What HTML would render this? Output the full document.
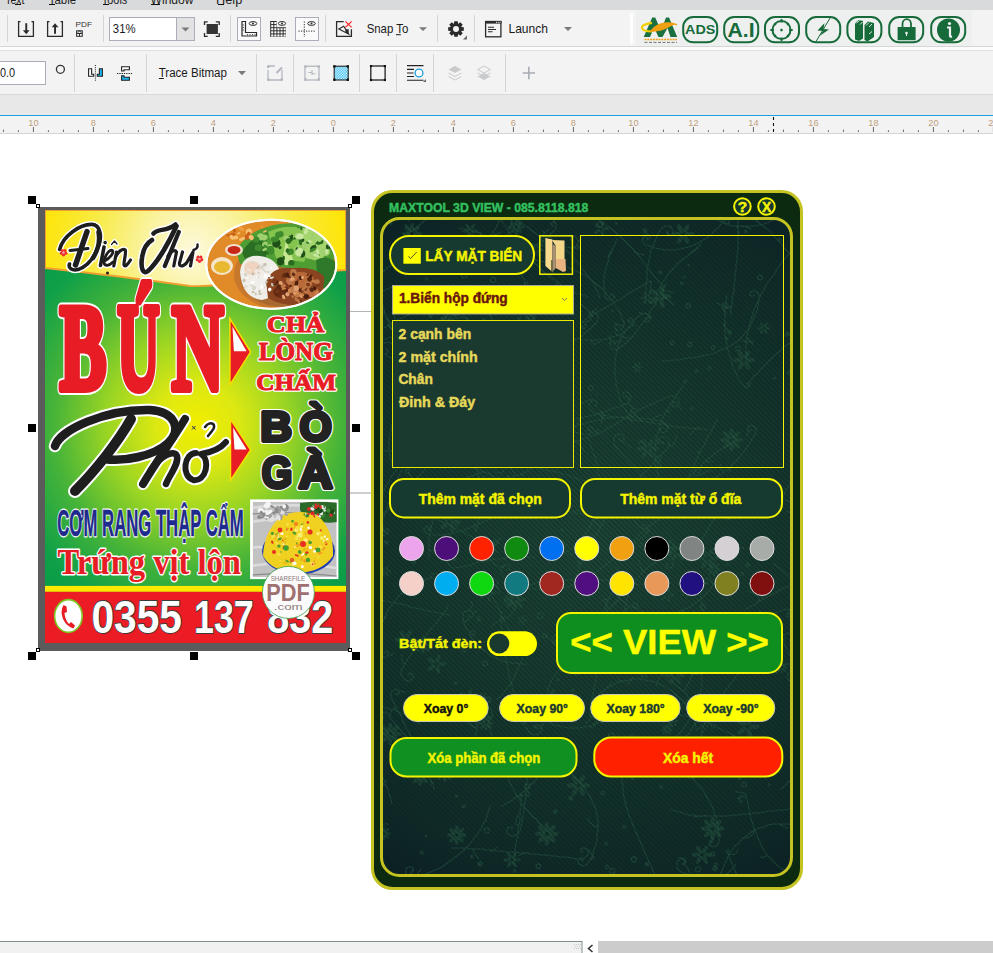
<!DOCTYPE html><html><head><meta charset="utf-8"><style>
*{margin:0;padding:0;box-sizing:border-box}
html,body{width:993px;height:953px;overflow:hidden;background:#fff;font-family:"Liberation Sans",sans-serif}
.a{position:absolute}
svg{position:absolute;left:0;top:0;overflow:visible}
</style></head><body>
<svg width="993" height="953"><rect x="0" y="0" width="993" height="10" fill="#d9dadb" />
<rect x="0" y="10" width="993" height="36" fill="#f3f3f3" />
<rect x="636" y="10" width="336" height="36" fill="#eef0ef" />
<rect x="0" y="46" width="993" height="1" fill="#d6d6d6" />
<rect x="0" y="47" width="993" height="3" fill="#fcfcfc" />
<rect x="0" y="50" width="993" height="1" fill="#dedede" />
<rect x="0" y="51" width="993" height="43" fill="#f3f3f3" />
<rect x="0" y="94" width="993" height="1" fill="#d9d9d9" />
<rect x="0" y="95" width="993" height="20" fill="#e8e8e8" />
<rect x="0" y="115" width="993" height="1" fill="#1ba1e2" />
<rect x="0" y="116" width="993" height="17" fill="#f3f3f3" />
<rect x="0" y="133" width="993" height="1" fill="#d4d4d4" />
<rect x="7" y="15" width="1" height="27" fill="#d5d5d5" />
<rect x="103" y="15" width="1" height="27" fill="#d5d5d5" />
<rect x="230" y="15" width="1" height="27" fill="#d5d5d5" />
<rect x="325" y="15" width="1" height="27" fill="#d5d5d5" />
<rect x="437" y="15" width="1" height="27" fill="#d5d5d5" />
<rect x="474" y="15" width="1" height="27" fill="#d5d5d5" />
<rect x="74" y="54" width="1" height="38" fill="#d5d5d5" />
<rect x="146" y="54" width="1" height="38" fill="#d5d5d5" />
<rect x="256" y="54" width="1" height="38" fill="#d5d5d5" />
<rect x="293" y="54" width="1" height="38" fill="#d5d5d5" />
<rect x="359" y="54" width="1" height="38" fill="#d5d5d5" />
<rect x="396" y="54" width="1" height="38" fill="#d5d5d5" />
<rect x="433" y="54" width="1" height="38" fill="#d5d5d5" />
<rect x="505" y="54" width="1" height="38" fill="#d5d5d5" />
<rect x="630" y="13" width="3" height="31" fill="#fdfdfd" />
<rect x="15" y="4" width="6" height="1" fill="#111" />
<rect x="49" y="4" width="6" height="1" fill="#111" />
<rect x="103" y="4" width="6" height="1" fill="#111" />
<rect x="151" y="4" width="9" height="1" fill="#111" />
<rect x="218" y="4" width="6" height="1" fill="#111" />
<path d="M20.5 21.6 H18.6 V36.3 H33.4 V21.6 H31.5" stroke="#2b2b2b" stroke-width="1.3" fill="none"/>
<rect x="25.3" y="23.2" width="1.9" height="8" fill="#2b2b2b"/><path d="M22.9 30.2 L29.6 30.2 L26.25 34.2Z" fill="#2b2b2b"/>
<path d="M49.5 21.6 H47.6 V36.3 H62.4 V21.6 H60.5" stroke="#2b2b2b" stroke-width="1.3" fill="none"/>
<rect x="54.1" y="26.6" width="1.9" height="7.2" fill="#2b2b2b"/><path d="M51.7 27.3 L58.4 27.3 L55.05 23.2Z" fill="#2b2b2b"/>
<rect x="76.6" y="30.8" width="5.7" height="5.5" stroke="#2b2b2b" stroke-width="1" fill="none"/><path d="M77 33.5 H82 M79.5 33.5 V36.3 M77.6 32.6 L79.5 31 L81.4 32.6" stroke="#2b2b2b" stroke-width="1" fill="none"/>
<rect x="109.5" y="17.5" width="85" height="23" fill="#fff" stroke="#a9aeb8" stroke-width="1"/>
<rect x="176.5" y="18" width="17.5" height="22" fill="#e2e2e2"/><rect x="176" y="18" width="1" height="22" fill="#a9aeb8"/>
<path d="M181.5 27.5 H189.5 L185.5 31.5Z" fill="#7a7a7a"/>
<path d="M204.5 25 V21.8 H207.7 M215.8 21.8 H219.2 V25 M219.2 33 V36.3 H215.8 M207.7 36.3 H204.5 V33" stroke="#2b2b2b" stroke-width="1.3" fill="none"/>
<rect x="206.6" y="24" width="11.3" height="10" fill="#333"/>
<rect x="237.5" y="17.5" width="23" height="23" fill="#fafafa" stroke="#a9aeb8" stroke-width="1"/>
<path d="M242 21.5 V36 H256.5 V32.5 H245.5 V21.5Z" stroke="#2b2b2b" stroke-width="1.2" fill="none"/>
<path d="M242.5 25 H244 M242.5 27.5 H244 M242.5 30 H244 M247.5 35.3 V34 M250 35.3 V34 M252.5 35.3 V34 M255 35.3 V34" stroke="#2b2b2b" stroke-width="0.8"/>
<ellipse cx="253" cy="23.5" rx="3.8" ry="1.9" stroke="#2b2b2b" stroke-width="1" fill="#fff"/><circle cx="253" cy="23.5" r="1" fill="#2b2b2b"/>
<path d="M270.2 21 H276.6 V27.2 H285.9 V36.8 H270.2Z" fill="#2b2b2b"/>
<rect x="271.20" y="22.00" width="2.1" height="2.1" fill="#fff"/>
<rect x="274.30" y="22.00" width="2.1" height="2.1" fill="#fff"/>
<rect x="271.20" y="25.10" width="2.1" height="2.1" fill="#fff"/>
<rect x="274.30" y="25.10" width="2.1" height="2.1" fill="#fff"/>
<rect x="271.20" y="28.20" width="2.1" height="2.1" fill="#fff"/>
<rect x="274.30" y="28.20" width="2.1" height="2.1" fill="#fff"/>
<rect x="277.40" y="28.20" width="2.1" height="2.1" fill="#fff"/>
<rect x="280.50" y="28.20" width="2.1" height="2.1" fill="#fff"/>
<rect x="283.60" y="28.20" width="2.1" height="2.1" fill="#fff"/>
<rect x="271.20" y="31.30" width="2.1" height="2.1" fill="#fff"/>
<rect x="274.30" y="31.30" width="2.1" height="2.1" fill="#fff"/>
<rect x="277.40" y="31.30" width="2.1" height="2.1" fill="#fff"/>
<rect x="280.50" y="31.30" width="2.1" height="2.1" fill="#fff"/>
<rect x="283.60" y="31.30" width="2.1" height="2.1" fill="#fff"/>
<rect x="271.20" y="34.40" width="2.1" height="2.1" fill="#fff"/>
<rect x="274.30" y="34.40" width="2.1" height="2.1" fill="#fff"/>
<rect x="277.40" y="34.40" width="2.1" height="2.1" fill="#fff"/>
<rect x="280.50" y="34.40" width="2.1" height="2.1" fill="#fff"/>
<rect x="283.60" y="34.40" width="2.1" height="2.1" fill="#fff"/>
<ellipse cx="282" cy="23.45" rx="3.6" ry="1.9" stroke="#2b2b2b" stroke-width="1" fill="#fff"/><circle cx="282" cy="23.45" r="1" fill="#2b2b2b"/>
<rect x="295.5" y="17.5" width="23" height="23" fill="#fafafa" stroke="#a9aeb8" stroke-width="1"/>
<path d="M304.3 21.5 V37" stroke="#2b2b2b" stroke-width="1" stroke-dasharray="1.2 1.3"/><path d="M298.5 31.1 H315.5" stroke="#2b2b2b" stroke-width="1" stroke-dasharray="1.2 1.3"/>
<ellipse cx="311.5" cy="23.5" rx="3.8" ry="1.9" stroke="#2b2b2b" stroke-width="1" fill="#fafafa"/><circle cx="311.5" cy="23.5" r="1" fill="#2b2b2b"/>
<path d="M343.7 21.6 H336.6 V36.4 H351.4 V29.3" stroke="#2b2b2b" stroke-width="1.3" fill="none"/>
<path d="M343.7 26.3 L338.8 29 L348.7 34.1 Z" stroke="#2b2b2b" stroke-width="1.1" fill="none"/><path d="M345.4 29.3 H348.7 V34.1 L345.4 32.4Z" fill="#2b2b2b"/>
<path d="M345.4 21.4 L351.6 27.4 M351.6 21.4 L345.4 27.4" stroke="#ff2020" stroke-width="1.2"/>
<rect x="396" y="34.2" width="4.8" height="1" fill="#1a1a1a" />
<path d="M419 27.3 H427 L423 31Z" fill="#7a7a7a"/>
<path d="M463.81 27.25 L463.81 30.75 L461.43 31.04 L461.28 31.39 L462.76 33.29 L460.29 35.76 L458.39 34.28 L458.04 34.43 L457.75 36.81 L454.25 36.81 L453.96 34.43 L453.61 34.28 L451.71 35.76 L449.24 33.29 L450.72 31.39 L450.57 31.04 L448.19 30.75 L448.19 27.25 L450.57 26.96 L450.72 26.61 L449.24 24.71 L451.71 22.24 L453.61 23.72 L453.96 23.57 L454.25 21.19 L457.75 21.19 L458.04 23.57 L458.39 23.72 L460.29 22.24 L462.76 24.71 L461.28 26.61 L461.43 26.96Z" fill="#2a2a2a"/><circle cx="456" cy="29" r="3" fill="#f3f3f3"/>
<path d="M467 35.5 V39.5 H463Z" fill="#666"/>
<rect x="485.6" y="21.5" width="15.3" height="15.3" stroke="#2b2b2b" stroke-width="1.3" fill="none"/><rect x="485" y="21" width="16.5" height="2.6" fill="#2b2b2b"/>
<path d="M488 27.2 H494 M488 29.5 H496 M488 31.8 H492.5" stroke="#2b2b2b" stroke-width="1.1"/>
<rect x="496" y="21.8" width="1" height="1" fill="#fff"/><rect x="497.8" y="21.8" width="1" height="1" fill="#fff"/><rect x="499.5" y="21.8" width="1" height="1" fill="#fff"/>
<path d="M564 26.9 H572 L568 31Z" fill="#7a7a7a"/>
<path d="M643.7 37 L652.2 17.5 L655.2 17.5 L661 30.5 L666 17.5 L669 17.5 L677.2 37 L670.5 37 L667.5 28 L662.5 37 L658.5 37 L654 27.5 L650 37Z" fill="#1a7040"/>
<path d="M652 22.8 Q641 24.5 642 28 Q643 31.5 652 31.5" stroke="#f4d000" stroke-width="2.2" fill="none"/>
<path d="M650 31.5 Q662 31 670 26 Q675 23 677 25 Q672 22 664 23 Q655 25 651 31" fill="#f0a010" stroke="#f0a010" stroke-width="1.2"/>
<path d="M644.5 39.5 H677" stroke="#f0a020" stroke-width="1.6" stroke-dasharray="2 0.8"/>
<path d="M644.5 42.4 H677" stroke="#555" stroke-width="0.8" stroke-dasharray="3 1.5"/>
<rect x="683.2" y="17.1" width="34" height="25.2" rx="10" stroke="#176b3a" stroke-width="2" fill="none"/>
<rect x="724.2" y="17.1" width="34" height="25.2" rx="10" stroke="#176b3a" stroke-width="2" fill="none"/>
<rect x="765" y="17.1" width="34" height="25.2" rx="10" stroke="#176b3a" stroke-width="2" fill="none"/>
<rect x="806.2" y="17.1" width="34" height="25.2" rx="10" stroke="#176b3a" stroke-width="2" fill="none"/>
<rect x="847.4" y="17.1" width="34" height="25.2" rx="10" stroke="#176b3a" stroke-width="2" fill="none"/>
<rect x="889.2" y="17.1" width="34" height="25.2" rx="10" stroke="#176b3a" stroke-width="2" fill="none"/>
<rect x="931.2" y="17.1" width="34" height="25.2" rx="10" stroke="#176b3a" stroke-width="2" fill="none"/>
<circle cx="781.5" cy="30" r="9" stroke="#176b3a" stroke-width="2" fill="none"/>
<path d="M781.5 19 V22.5 M781.5 37.5 V41 M770.3 30 H773.8 M789.2 30 H792.7" stroke="#176b3a" stroke-width="1.8"/><circle cx="781.5" cy="30.1" r="1.3" fill="#176b3a"/>
<path d="M774.3 23.3 L776 25 M788.7 23.3 L787 25 M774.3 36.7 L776 35 M788.7 36.7 L787 35" stroke="#176b3a" stroke-width="1.6"/>
<path d="M816 41.5 L830.2 17.8" stroke="#176b3a" stroke-width="1"/><path d="M824.5 23 L817.5 30.5 L823 31 L819.5 36 L829 29.5 L823.5 29 Z" fill="#176b3a"/>
<path d="M855 23.5 L858.5 20 L863 21 L863 38.5 L859 41 L855 39.5Z" fill="#176b3a"/>
<path d="M864.5 25 L868 21.5 L874 23 L874 37 L867.5 41.5 L864.5 40Z" fill="#176b3a"/>
<path d="M856.5 23 L859.5 20.5 M860 24.5 L862.5 22 M866 25.5 L869 22.5 M869 27 L872 24 M869 34 L872 31.5" stroke="#eef0ef" stroke-width="0.9"/>
<path d="M902.5 27.5 V24 A4 4.5 0 0 1 911 24 V27.5" stroke="#176b3a" stroke-width="1.8" fill="none"/><rect x="897.6" y="27" width="18" height="13.2" fill="#176b3a"/>
<circle cx="906.5" cy="33" r="1.3" fill="#eef0ef"/><rect x="906" y="33" width="1" height="3" fill="#eef0ef"/>
<circle cx="948.5" cy="30" r="11.5" fill="#176b3a"/><circle cx="949.5" cy="23.5" r="1.6" fill="#eef0ef"/><path d="M947 27.5 H950 V36 Q950 37 952 36.5" stroke="#eef0ef" stroke-width="2.2" fill="none"/>
<rect x="-1" y="61.5" width="46.5" height="23" fill="#fff" stroke="#a9aeb8" stroke-width="1"/>
<circle cx="60.4" cy="69.3" r="4" stroke="#333" stroke-width="1.3" fill="none"/>
<path d="M88.6 68.7 H91.6 V74.2 H93.7 V76.3 H88.6Z" stroke="#222" stroke-width="1.1" fill="#fff"/>
<path d="M102.4 68.7 H99.4 V74.2 H97.3 V76.3 H102.4Z" stroke="#222" stroke-width="1.1" fill="#19b6f0"/>
<path d="M95.4 65 V81" stroke="#222" stroke-width="1" stroke-dasharray="1 1.1"/>
<path d="M121.6 66.7 H129.4 V69.7 H124 V71 H121.6Z" stroke="#222" stroke-width="1.1" fill="#fff"/>
<path d="M121.6 80.3 H129.4 V77.3 H124 V75.7 H121.6Z" stroke="#222" stroke-width="1.1" fill="#19b6f0"/>
<path d="M117 73.5 H133" stroke="#222" stroke-width="1" stroke-dasharray="1.3 1"/>
<rect x="158.9" y="78" width="5" height="1" fill="#1a1a1a" />
<path d="M238 71 H246 L242 75.2Z" fill="#7a7a7a"/>
<path d="M268 70 V80 H282 V70 M268 66 H275" stroke="#b4b8c0" stroke-width="1.3" fill="none"/><rect x="267" y="65.4" width="2.5" height="2.5" fill="#b4b8c0"/><rect x="267" y="78.2" width="2.5" height="2.5" fill="#b4b8c0"/><rect x="280.5" y="78.2" width="2.5" height="2.5" fill="#b4b8c0"/><path d="M276.5 73 L282 67.5" stroke="#b4b8c0" stroke-width="2.2"/>
<rect x="305" y="66.2" width="14" height="13.8" stroke="#b4b8c0" stroke-width="1.3" fill="none"/><rect x="304.2" y="65.4" width="2.5" height="2.5" fill="#b4b8c0"/><rect x="317.5" y="65.4" width="2.5" height="2.5" fill="#b4b8c0"/><rect x="304.2" y="78.2" width="2.5" height="2.5" fill="#b4b8c0"/><rect x="317.5" y="78.2" width="2.5" height="2.5" fill="#b4b8c0"/><path d="M308.5 72.5 H312 M312 70 V75 M312 73.8 H315.5" stroke="#b4b8c0" stroke-width="1.1" fill="none"/>
<defs><pattern id="chk" width="2.6" height="2.6" patternUnits="userSpaceOnUse" x="334" y="66"><rect width="2.6" height="2.6" fill="#19b6f0"/><rect width="1.3" height="1.3" fill="#fff"/><rect x="1.3" y="1.3" width="1.3" height="1.3" fill="#fff"/></pattern></defs>
<rect x="334.2" y="66.2" width="14" height="13.8" fill="url(#chk)" stroke="#222" stroke-width="1.1"/>
<rect x="333.2" y="65.2" width="2.4" height="2.4" fill="#111" />
<rect x="346.6" y="65.2" width="2.4" height="2.4" fill="#111" />
<rect x="333.2" y="78.5" width="2.4" height="2.4" fill="#111" />
<rect x="346.6" y="78.5" width="2.4" height="2.4" fill="#111" />
<rect x="370.8" y="66" width="14.3" height="14" stroke="#222" stroke-width="1.3" fill="none"/>
<rect x="369.9" y="65" width="2.2" height="2.2" fill="#111" />
<rect x="383.8" y="65" width="2.2" height="2.2" fill="#111" />
<rect x="369.9" y="78.9" width="2.2" height="2.2" fill="#111" />
<rect x="383.8" y="78.9" width="2.2" height="2.2" fill="#111" />
<path d="M407 65.6 H423.5 M407 69.4 H414 M407 73 H413.5 M407 76.5 H414 M407 80.2 H423.5" stroke="#222" stroke-width="1.1"/>
<circle cx="419" cy="73" r="3.9" stroke="#19a0e0" stroke-width="1.3" fill="#fff"/><path d="M426 79 V82 H423Z" fill="#666"/>
<path d="M448.5 69.5 L455 66 L461.5 69.5 L455 73Z" fill="#c8cacc"/><path d="M448.5 73 L455 76.5 L461.5 73 M448.5 76.5 L455 80 L461.5 76.5" stroke="#c8cacc" stroke-width="1" fill="none"/>
<path d="M477.5 69.5 L484 66 L490.5 69.5 L484 73Z" stroke="#c8cacc" stroke-width="1" fill="none"/><path d="M477.5 73 L484 76.5 L490.5 73" stroke="#c8cacc" stroke-width="1" fill="none"/><path d="M477.5 76.5 L484 80 L490.5 76.5 L484 73Z" fill="#c8cacc"/>
<path d="M522.7 73 H535 M528.85 66.8 V79.2" stroke="#a8acb4" stroke-width="1.6"/>
<rect x="2.9" y="129.6" width="1" height="2.4" fill="#5f6b66" />
<rect x="32.9" y="127" width="1" height="5" fill="#5f6b66" />
<rect x="62.9" y="129.6" width="1" height="2.4" fill="#5f6b66" />
<rect x="92.9" y="127" width="1" height="5" fill="#5f6b66" />
<rect x="122.9" y="129.6" width="1" height="2.4" fill="#5f6b66" />
<rect x="152.9" y="127" width="1" height="5" fill="#5f6b66" />
<rect x="182.9" y="129.6" width="1" height="2.4" fill="#5f6b66" />
<rect x="212.9" y="127" width="1" height="5" fill="#5f6b66" />
<rect x="242.9" y="129.6" width="1" height="2.4" fill="#5f6b66" />
<rect x="272.9" y="127" width="1" height="5" fill="#5f6b66" />
<rect x="302.9" y="129.6" width="1" height="2.4" fill="#5f6b66" />
<rect x="332.9" y="127" width="1" height="5" fill="#5f6b66" />
<rect x="362.9" y="129.6" width="1" height="2.4" fill="#5f6b66" />
<rect x="392.9" y="127" width="1" height="5" fill="#5f6b66" />
<rect x="422.9" y="129.6" width="1" height="2.4" fill="#5f6b66" />
<rect x="452.9" y="127" width="1" height="5" fill="#5f6b66" />
<rect x="482.9" y="129.6" width="1" height="2.4" fill="#5f6b66" />
<rect x="512.9" y="127" width="1" height="5" fill="#5f6b66" />
<rect x="542.9" y="129.6" width="1" height="2.4" fill="#5f6b66" />
<rect x="572.9" y="127" width="1" height="5" fill="#5f6b66" />
<rect x="602.9" y="129.6" width="1" height="2.4" fill="#5f6b66" />
<rect x="632.9" y="127" width="1" height="5" fill="#5f6b66" />
<rect x="662.9" y="129.6" width="1" height="2.4" fill="#5f6b66" />
<rect x="692.9" y="127" width="1" height="5" fill="#5f6b66" />
<rect x="722.9" y="129.6" width="1" height="2.4" fill="#5f6b66" />
<rect x="752.9" y="127" width="1" height="5" fill="#5f6b66" />
<rect x="782.9" y="129.6" width="1" height="2.4" fill="#5f6b66" />
<rect x="812.9" y="127" width="1" height="5" fill="#5f6b66" />
<rect x="842.9" y="129.6" width="1" height="2.4" fill="#5f6b66" />
<rect x="872.9" y="127" width="1" height="5" fill="#5f6b66" />
<rect x="902.9" y="129.6" width="1" height="2.4" fill="#5f6b66" />
<rect x="932.9" y="127" width="1" height="5" fill="#5f6b66" />
<rect x="962.9" y="129.6" width="1" height="2.4" fill="#5f6b66" />
<rect x="992.9" y="127" width="1" height="5" fill="#5f6b66" />
<rect x="17.9" y="130.2" width="1" height="1.8" fill="#5f6b66" />
<rect x="47.9" y="130.2" width="1" height="1.8" fill="#5f6b66" />
<rect x="77.9" y="130.2" width="1" height="1.8" fill="#5f6b66" />
<rect x="107.9" y="130.2" width="1" height="1.8" fill="#5f6b66" />
<rect x="137.9" y="130.2" width="1" height="1.8" fill="#5f6b66" />
<rect x="167.9" y="130.2" width="1" height="1.8" fill="#5f6b66" />
<rect x="197.9" y="130.2" width="1" height="1.8" fill="#5f6b66" />
<rect x="227.9" y="130.2" width="1" height="1.8" fill="#5f6b66" />
<rect x="257.9" y="130.2" width="1" height="1.8" fill="#5f6b66" />
<rect x="287.9" y="130.2" width="1" height="1.8" fill="#5f6b66" />
<rect x="317.9" y="130.2" width="1" height="1.8" fill="#5f6b66" />
<rect x="347.9" y="130.2" width="1" height="1.8" fill="#5f6b66" />
<rect x="377.9" y="130.2" width="1" height="1.8" fill="#5f6b66" />
<rect x="407.9" y="130.2" width="1" height="1.8" fill="#5f6b66" />
<rect x="437.9" y="130.2" width="1" height="1.8" fill="#5f6b66" />
<rect x="467.9" y="130.2" width="1" height="1.8" fill="#5f6b66" />
<rect x="497.9" y="130.2" width="1" height="1.8" fill="#5f6b66" />
<rect x="527.9" y="130.2" width="1" height="1.8" fill="#5f6b66" />
<rect x="557.9" y="130.2" width="1" height="1.8" fill="#5f6b66" />
<rect x="587.9" y="130.2" width="1" height="1.8" fill="#5f6b66" />
<rect x="617.9" y="130.2" width="1" height="1.8" fill="#5f6b66" />
<rect x="647.9" y="130.2" width="1" height="1.8" fill="#5f6b66" />
<rect x="677.9" y="130.2" width="1" height="1.8" fill="#5f6b66" />
<rect x="707.9" y="130.2" width="1" height="1.8" fill="#5f6b66" />
<rect x="737.9" y="130.2" width="1" height="1.8" fill="#5f6b66" />
<rect x="767.9" y="130.2" width="1" height="1.8" fill="#5f6b66" />
<rect x="797.9" y="130.2" width="1" height="1.8" fill="#5f6b66" />
<rect x="827.9" y="130.2" width="1" height="1.8" fill="#5f6b66" />
<rect x="857.9" y="130.2" width="1" height="1.8" fill="#5f6b66" />
<rect x="887.9" y="130.2" width="1" height="1.8" fill="#5f6b66" />
<rect x="917.9" y="130.2" width="1" height="1.8" fill="#5f6b66" />
<rect x="947.9" y="130.2" width="1" height="1.8" fill="#5f6b66" />
<rect x="977.9" y="130.2" width="1" height="1.8" fill="#5f6b66" />
<text x="-26.6" y="125.6" font-family="Liberation Sans" font-size="9.2" fill="#c0a080" text-anchor="middle">12</text>
<text x="33.4" y="125.6" font-family="Liberation Sans" font-size="9.2" fill="#c0a080" text-anchor="middle">10</text>
<text x="93.4" y="125.6" font-family="Liberation Sans" font-size="9.2" fill="#c0a080" text-anchor="middle">8</text>
<text x="153.4" y="125.6" font-family="Liberation Sans" font-size="9.2" fill="#c0a080" text-anchor="middle">6</text>
<text x="213.4" y="125.6" font-family="Liberation Sans" font-size="9.2" fill="#c0a080" text-anchor="middle">4</text>
<text x="273.4" y="125.6" font-family="Liberation Sans" font-size="9.2" fill="#c0a080" text-anchor="middle">2</text>
<text x="333.4" y="125.6" font-family="Liberation Sans" font-size="9.2" fill="#c0a080" text-anchor="middle">0</text>
<text x="393.4" y="125.6" font-family="Liberation Sans" font-size="9.2" fill="#c0a080" text-anchor="middle">2</text>
<text x="453.4" y="125.6" font-family="Liberation Sans" font-size="9.2" fill="#c0a080" text-anchor="middle">4</text>
<text x="513.4" y="125.6" font-family="Liberation Sans" font-size="9.2" fill="#c0a080" text-anchor="middle">6</text>
<text x="573.4" y="125.6" font-family="Liberation Sans" font-size="9.2" fill="#c0a080" text-anchor="middle">8</text>
<text x="633.4" y="125.6" font-family="Liberation Sans" font-size="9.2" fill="#c0a080" text-anchor="middle">10</text>
<text x="693.4" y="125.6" font-family="Liberation Sans" font-size="9.2" fill="#c0a080" text-anchor="middle">12</text>
<text x="753.4" y="125.6" font-family="Liberation Sans" font-size="9.2" fill="#c0a080" text-anchor="middle">14</text>
<text x="813.4" y="125.6" font-family="Liberation Sans" font-size="9.2" fill="#c0a080" text-anchor="middle">16</text>
<text x="873.4" y="125.6" font-family="Liberation Sans" font-size="9.2" fill="#c0a080" text-anchor="middle">18</text>
<text x="933.4" y="125.6" font-family="Liberation Sans" font-size="9.2" fill="#c0a080" text-anchor="middle">20</text>
<text x="993.4" y="125.6" font-family="Liberation Sans" font-size="9.2" fill="#c0a080" text-anchor="middle">22</text>
<path d="M773.5 117 V133" stroke="#111" stroke-width="1.1" stroke-dasharray="3 3"/>
<rect x="-1" y="941.5" width="583" height="14" fill="#f1f1f1" stroke="#7f918a" stroke-width="1"/>
<rect x="574" y="944" width="1" height="1" fill="#c8c8c8"/>
<rect x="575" y="946" width="1" height="1" fill="#c8c8c8"/>
<rect x="574" y="948" width="1" height="1" fill="#c8c8c8"/>
<rect x="576" y="944" width="1" height="1" fill="#c8c8c8"/>
<rect x="577" y="946" width="1" height="1" fill="#c8c8c8"/>
<rect x="576" y="948" width="1" height="1" fill="#c8c8c8"/>
<rect x="578" y="944" width="1" height="1" fill="#c8c8c8"/>
<rect x="579" y="946" width="1" height="1" fill="#c8c8c8"/>
<rect x="578" y="948" width="1" height="1" fill="#c8c8c8"/>
<rect x="580" y="944" width="1" height="1" fill="#c8c8c8"/>
<rect x="581" y="946" width="1" height="1" fill="#c8c8c8"/>
<rect x="580" y="948" width="1" height="1" fill="#c8c8c8"/>
<path d="M592.5 945 L588.5 948.5 L592.5 952" stroke="#333" stroke-width="1.6" fill="none"/>
<rect x="598" y="941" width="395" height="12" fill="#cccccc" />
<text x="5.29" y="3.50" font-family='"Liberation Sans"' font-weight="normal" font-style="normal" font-size="13.08" fill="#1e1e1e" textLength="19.09" lengthAdjust="spacingAndGlyphs" >Text</text>
<text x="48.77" y="3.50" font-family='"Liberation Sans"' font-weight="normal" font-style="normal" font-size="13.08" fill="#1e1e1e" textLength="27.24" lengthAdjust="spacingAndGlyphs" >Table</text>
<text x="101.78" y="3.50" font-family='"Liberation Sans"' font-weight="normal" font-style="normal" font-size="13.08" fill="#1e1e1e" textLength="25.55" lengthAdjust="spacingAndGlyphs" >Tools</text>
<text x="150.60" y="3.50" font-family='"Liberation Sans"' font-weight="normal" font-style="normal" font-size="13.08" fill="#1e1e1e" textLength="42.81" lengthAdjust="spacingAndGlyphs" >Window</text>
<text x="215.98" y="3.50" font-family='"Liberation Sans"' font-weight="normal" font-style="normal" font-size="13.08" fill="#1e1e1e" textLength="26.28" lengthAdjust="spacingAndGlyphs" >Help</text>
<text x="75.54" y="27.40" font-family='"Liberation Sans"' font-weight="normal" font-style="normal" font-size="7.56" fill="#333" textLength="16.52" lengthAdjust="spacingAndGlyphs" >PDF</text>
<text x="112.86" y="33.20" font-family='"Liberation Sans"' font-weight="normal" font-style="normal" font-size="12.79" fill="#1a1a1a" textLength="22.67" lengthAdjust="spacingAndGlyphs" >31%</text>
<text x="366.65" y="33.10" font-family='"Liberation Sans"' font-weight="normal" font-style="normal" font-size="12.79" fill="#1a1a1a" textLength="41.66" lengthAdjust="spacingAndGlyphs" >Snap To</text>
<text x="508.44" y="33.30" font-family='"Liberation Sans"' font-weight="normal" font-style="normal" font-size="12.79" fill="#1a1a1a" textLength="39.54" lengthAdjust="spacingAndGlyphs" >Launch</text>
<text x="685.11" y="34.20" font-family='"Liberation Sans"' font-weight="bold" font-style="normal" font-size="12.50" fill="#176b3a" textLength="30.32" lengthAdjust="spacingAndGlyphs" >ADS</text>
<text x="727.58" y="36.90" font-family='"Liberation Sans"' font-weight="bold" font-style="normal" font-size="20.35" fill="#176b3a" textLength="27.05" lengthAdjust="spacingAndGlyphs" >A.I</text>
<text x="-0.03" y="76.90" font-family='"Liberation Sans"' font-weight="normal" font-style="normal" font-size="12.65" fill="#1a1a1a" textLength="15.22" lengthAdjust="spacingAndGlyphs" >0.0</text>
<text x="158.67" y="76.60" font-family='"Liberation Sans"' font-weight="normal" font-style="normal" font-size="12.65" fill="#1a1a1a" textLength="68.25" lengthAdjust="spacingAndGlyphs" >Trace Bitmap</text>
</svg>
<svg width="993" height="953"><defs>
<clipPath id="img"><rect x="45" y="210" width="301" height="433"/></clipPath>
<radialGradient id="gbg" gradientUnits="userSpaceOnUse" cx="197" cy="425" r="230">
 <stop offset="0" stop-color="#f2ee00"/><stop offset="0.18" stop-color="#dce812"/><stop offset="0.4" stop-color="#98d424"/><stop offset="0.62" stop-color="#48b438"/><stop offset="0.85" stop-color="#10a048"/><stop offset="1" stop-color="#069a48"/>
</radialGradient>
<radialGradient id="ybg" gradientUnits="userSpaceOnUse" cx="193" cy="250" r="160">
 <stop offset="0" stop-color="#fdf9dc"/><stop offset="0.3" stop-color="#faf3a0"/><stop offset="0.65" stop-color="#f8ea40"/><stop offset="1" stop-color="#ffe400"/>
</radialGradient>
<clipPath id="ov"><ellipse cx="271.3" cy="264.2" rx="64" ry="43.5"/></clipPath>
<clipPath id="ph"><rect x="252.7" y="501.7" width="84" height="75.3"/></clipPath>
</defs>
<rect x="38" y="207" width="312" height="444" fill="#5b5b5b"/>
<g clip-path="url(#img)">
<rect x="45" y="210" width="301" height="433" fill="url(#gbg)"/>
<path d="M45 210 H346 V270 Q300 272 255 280 Q215 287 190 286 Q120 276 45 268 Z" fill="url(#ybg)" stroke="#f0a030" stroke-width="2"/>
<ellipse cx="271.3" cy="264.2" rx="66" ry="45.5" fill="#ffffff"/>
<g clip-path="url(#ov)"><rect x="205" y="218" width="134" height="92" fill="#e08a28"/>
<ellipse cx="284" cy="274" rx="50" ry="36" fill="#c8782c"/><ellipse cx="284" cy="276" rx="44" ry="31" fill="#a86a30"/>
<path d="M236 250 Q250 228 280 224 Q318 220 334 236 Q338 258 326 282 L300 272 L262 262 L240 264Z" fill="#4e9e34"/>
<path d="M268 232 Q285 224 302 228 Q312 244 304 262 L276 258Z" fill="#86c450"/><path d="M302 228 Q320 226 330 238 L322 262 L306 258Z" fill="#a4d46c"/>
<path d="M242 252 Q250 238 266 234 L266 262 L248 266Z" fill="#2a6e24"/><path d="M316 260 Q326 254 336 262 L332 292 L318 286Z" fill="#2e7a2a"/><path d="M286 240 L294 262 L282 262Z" fill="#c8e890"/>
<path d="M240 272 Q242 254 260 256 Q278 258 281 276 Q282 296 262 300 Q242 298 240 272Z" fill="#efeee8"/><path d="M246 268 Q256 262 266 272" stroke="#d8d4c8" stroke-width="1.5" fill="none"/><ellipse cx="252" cy="268" rx="8" ry="7" fill="#f0d4c0"/>
<path d="M266 282 Q272 266 292 268 Q314 266 324 276 Q326 294 308 304 Q284 308 268 298Z" fill="#8a4420"/><ellipse cx="300" cy="280" rx="14" ry="8" fill="#b86a38"/><ellipse cx="282" cy="292" rx="9" ry="6" fill="#6a2c14"/><ellipse cx="312" cy="292" rx="7" ry="5" fill="#c07040"/>
<ellipse cx="301.3" cy="253.7" rx="3.9" ry="3.8" fill="#1e5018" transform="rotate(7 301.3 253.7)"/><ellipse cx="317.9" cy="254.9" rx="2.2" ry="1.0" fill="#3e8a2c" transform="rotate(28 317.9 254.9)"/><ellipse cx="282.3" cy="258.3" rx="2.6" ry="1.2" fill="#3e8a2c" transform="rotate(3 282.3 258.3)"/><ellipse cx="309.6" cy="241.7" rx="2.0" ry="1.9" fill="#c8e8a0" transform="rotate(40 309.6 241.7)"/><ellipse cx="301.0" cy="243.0" rx="1.9" ry="1.9" fill="#2a6a20" transform="rotate(53 301.0 243.0)"/><ellipse cx="266.6" cy="233.0" rx="2.4" ry="1.3" fill="#3e8a2c" transform="rotate(46 266.6 233.0)"/><ellipse cx="325.5" cy="251.9" rx="4.4" ry="4.1" fill="#a0d070" transform="rotate(5 325.5 251.9)"/><ellipse cx="281.5" cy="233.0" rx="1.9" ry="0.9" fill="#a0d070" transform="rotate(154 281.5 233.0)"/><ellipse cx="298.5" cy="248.5" rx="3.6" ry="1.6" fill="#a0d070" transform="rotate(78 298.5 248.5)"/><ellipse cx="290.5" cy="238.4" rx="2.9" ry="2.4" fill="#2a6a20" transform="rotate(65 290.5 238.4)"/><ellipse cx="311.0" cy="257.4" rx="1.6" ry="1.4" fill="#a0d070" transform="rotate(96 311.0 257.4)"/><ellipse cx="298.0" cy="227.3" rx="1.6" ry="0.8" fill="#3e8a2c" transform="rotate(30 298.0 227.3)"/><ellipse cx="325.6" cy="239.4" rx="2.6" ry="1.8" fill="#c8e8a0" transform="rotate(27 325.6 239.4)"/><ellipse cx="298.8" cy="255.1" rx="2.6" ry="1.5" fill="#c8e8a0" transform="rotate(23 298.8 255.1)"/><ellipse cx="269.8" cy="245.5" rx="2.6" ry="1.3" fill="#a0d070" transform="rotate(179 269.8 245.5)"/><ellipse cx="295.4" cy="238.2" rx="2.5" ry="1.2" fill="#2a6a20" transform="rotate(160 295.4 238.2)"/><ellipse cx="265.3" cy="251.8" rx="4.5" ry="2.2" fill="#2a6a20" transform="rotate(20 265.3 251.8)"/><ellipse cx="329.0" cy="246.2" rx="2.7" ry="1.5" fill="#1e5018" transform="rotate(88 329.0 246.2)"/><ellipse cx="316.8" cy="243.4" rx="2.8" ry="1.2" fill="#2a6a20" transform="rotate(126 316.8 243.4)"/><ellipse cx="279.4" cy="234.5" rx="4.4" ry="3.3" fill="#3e8a2c" transform="rotate(161 279.4 234.5)"/><ellipse cx="322.1" cy="241.9" rx="2.0" ry="1.3" fill="#2a6a20" transform="rotate(107 322.1 241.9)"/><ellipse cx="276.4" cy="243.3" rx="4.5" ry="4.1" fill="#1e5018" transform="rotate(116 276.4 243.3)"/><ellipse cx="327.0" cy="251.8" rx="2.5" ry="1.4" fill="#c8e8a0" transform="rotate(103 327.0 251.8)"/><ellipse cx="316.5" cy="246.1" rx="2.0" ry="2.0" fill="#a0d070" transform="rotate(46 316.5 246.1)"/><ellipse cx="260.8" cy="236.8" rx="3.8" ry="3.5" fill="#a0d070" transform="rotate(16 260.8 236.8)"/><ellipse cx="313.7" cy="254.9" rx="3.6" ry="2.9" fill="#a0d070" transform="rotate(93 313.7 254.9)"/><ellipse cx="296.5" cy="251.1" rx="4.0" ry="2.2" fill="#a0d070" transform="rotate(87 296.5 251.1)"/><ellipse cx="303.4" cy="247.9" rx="1.5" ry="1.1" fill="#a0d070" transform="rotate(83 303.4 247.9)"/><ellipse cx="305.0" cy="243.7" rx="4.0" ry="3.1" fill="#a0d070" transform="rotate(89 305.0 243.7)"/><ellipse cx="274.8" cy="239.4" rx="4.3" ry="2.8" fill="#3e8a2c" transform="rotate(176 274.8 239.4)"/><ellipse cx="288.2" cy="240.1" rx="2.5" ry="1.2" fill="#3e8a2c" transform="rotate(50 288.2 240.1)"/><ellipse cx="290.3" cy="251.9" rx="3.7" ry="3.1" fill="#3e8a2c" transform="rotate(157 290.3 251.9)"/><ellipse cx="313.3" cy="247.9" rx="3.5" ry="2.3" fill="#1e5018" transform="rotate(141 313.3 247.9)"/><ellipse cx="312.9" cy="249.9" rx="3.7" ry="1.5" fill="#3e8a2c" transform="rotate(150 312.9 249.9)"/><ellipse cx="287.5" cy="250.4" rx="2.2" ry="1.8" fill="#2a6a20" transform="rotate(120 287.5 250.4)"/><ellipse cx="327.6" cy="244.4" rx="3.1" ry="2.0" fill="#a0d070" transform="rotate(97 327.6 244.4)"/><ellipse cx="304.4" cy="229.6" rx="2.1" ry="1.8" fill="#a0d070" transform="rotate(0 304.4 229.6)"/><ellipse cx="280.6" cy="261.3" rx="4.1" ry="3.7" fill="#1e5018" transform="rotate(95 280.6 261.3)"/><ellipse cx="327.3" cy="246.8" rx="2.4" ry="1.4" fill="#1e5018" transform="rotate(86 327.3 246.8)"/><ellipse cx="326.3" cy="237.6" rx="2.6" ry="1.2" fill="#c8e8a0" transform="rotate(144 326.3 237.6)"/><ellipse cx="302.8" cy="240.3" rx="1.9" ry="1.5" fill="#1e5018" transform="rotate(122 302.8 240.3)"/><ellipse cx="300.3" cy="239.6" rx="4.2" ry="1.7" fill="#2a6a20" transform="rotate(83 300.3 239.6)"/><ellipse cx="297.0" cy="249.1" rx="1.9" ry="1.5" fill="#1e5018" transform="rotate(96 297.0 249.1)"/><ellipse cx="286.6" cy="262.2" rx="3.0" ry="2.0" fill="#c8e8a0" transform="rotate(98 286.6 262.2)"/><ellipse cx="299.3" cy="236.4" rx="4.4" ry="3.1" fill="#c8e8a0" transform="rotate(5 299.3 236.4)"/><ellipse cx="291.4" cy="237.3" rx="2.9" ry="1.4" fill="#1e5018" transform="rotate(113 291.4 237.3)"/><ellipse cx="264.4" cy="241.1" rx="2.9" ry="2.2" fill="#3e8a2c" transform="rotate(121 264.4 241.1)"/><ellipse cx="313.4" cy="235.8" rx="2.3" ry="1.1" fill="#a0d070" transform="rotate(75 313.4 235.8)"/><ellipse cx="291.4" cy="262.7" rx="3.1" ry="2.8" fill="#2a6a20" transform="rotate(4 291.4 262.7)"/><ellipse cx="311.8" cy="237.8" rx="3.1" ry="1.9" fill="#a0d070" transform="rotate(135 311.8 237.8)"/><ellipse cx="256.0" cy="239.6" rx="3.5" ry="3.1" fill="#3e8a2c" transform="rotate(9 256.0 239.6)"/><ellipse cx="306.1" cy="230.9" rx="3.6" ry="1.8" fill="#c8e8a0" transform="rotate(109 306.1 230.9)"/><ellipse cx="299.2" cy="251.8" rx="4.4" ry="3.4" fill="#c8e8a0" transform="rotate(121 299.2 251.8)"/><ellipse cx="283.8" cy="257.7" rx="2.1" ry="1.2" fill="#2a6a20" transform="rotate(77 283.8 257.7)"/><ellipse cx="317.6" cy="252.0" rx="2.8" ry="1.6" fill="#c8e8a0" transform="rotate(79 317.6 252.0)"/><ellipse cx="264.8" cy="244.2" rx="3.1" ry="2.2" fill="#a0d070" transform="rotate(137 264.8 244.2)"/><ellipse cx="265.7" cy="248.1" rx="3.9" ry="1.7" fill="#3e8a2c" transform="rotate(68 265.7 248.1)"/><ellipse cx="316.3" cy="255.5" rx="3.5" ry="1.4" fill="#c8e8a0" transform="rotate(17 316.3 255.5)"/><ellipse cx="270.7" cy="250.2" rx="4.4" ry="3.6" fill="#3e8a2c" transform="rotate(74 270.7 250.2)"/><ellipse cx="307.6" cy="242.8" rx="2.0" ry="1.0" fill="#3e8a2c" transform="rotate(17 307.6 242.8)"/><ellipse cx="301.3" cy="228.6" rx="1.8" ry="1.1" fill="#2a6a20" transform="rotate(71 301.3 228.6)"/><ellipse cx="258.4" cy="247.7" rx="3.7" ry="3.5" fill="#3e8a2c" transform="rotate(2 258.4 247.7)"/><ellipse cx="286.8" cy="238.3" rx="3.3" ry="2.3" fill="#a0d070" transform="rotate(14 286.8 238.3)"/><ellipse cx="264.5" cy="237.6" rx="3.2" ry="2.6" fill="#a0d070" transform="rotate(142 264.5 237.6)"/><ellipse cx="295.8" cy="234.9" rx="1.7" ry="0.9" fill="#a0d070" transform="rotate(132 295.8 234.9)"/><ellipse cx="319.6" cy="243.3" rx="2.7" ry="1.3" fill="#2a6a20" transform="rotate(167 319.6 243.3)"/><ellipse cx="280.0" cy="247.6" rx="1.6" ry="1.5" fill="#1e5018" transform="rotate(152 280.0 247.6)"/><ellipse cx="288.5" cy="241.0" rx="2.9" ry="2.8" fill="#2a6a20" transform="rotate(135 288.5 241.0)"/><ellipse cx="326.4" cy="251.5" rx="2.2" ry="1.0" fill="#c8e8a0" transform="rotate(54 326.4 251.5)"/><ellipse cx="264.6" cy="249.5" rx="2.6" ry="1.4" fill="#a0d070" transform="rotate(157 264.6 249.5)"/>
<ellipse cx="265.6" cy="288.1" rx="1.6" ry="1.3" fill="#f0e8e0" transform="rotate(165 265.6 288.1)"/><ellipse cx="252.5" cy="282.5" rx="2.4" ry="1.5" fill="#ffffff" transform="rotate(151 252.5 282.5)"/><ellipse cx="249.3" cy="277.7" rx="2.4" ry="1.9" fill="#f0e8e0" transform="rotate(0 249.3 277.7)"/><ellipse cx="256.7" cy="271.2" rx="2.4" ry="2.3" fill="#f0e8e0" transform="rotate(119 256.7 271.2)"/><ellipse cx="257.8" cy="267.5" rx="2.0" ry="0.9" fill="#c8c0b0" transform="rotate(120 257.8 267.5)"/><ellipse cx="247.9" cy="269.6" rx="1.4" ry="0.7" fill="#f0e8e0" transform="rotate(172 247.9 269.6)"/><ellipse cx="250.5" cy="277.4" rx="1.0" ry="1.0" fill="#f0e8e0" transform="rotate(80 250.5 277.4)"/><ellipse cx="273.0" cy="284.4" rx="2.0" ry="1.4" fill="#d8d6cc" transform="rotate(30 273.0 284.4)"/><ellipse cx="268.1" cy="272.0" rx="1.7" ry="0.9" fill="#d8d6cc" transform="rotate(8 268.1 272.0)"/><ellipse cx="255.8" cy="294.1" rx="1.5" ry="0.9" fill="#c8c0b0" transform="rotate(92 255.8 294.1)"/><ellipse cx="252.1" cy="285.9" rx="2.1" ry="1.0" fill="#d8d6cc" transform="rotate(44 252.1 285.9)"/><ellipse cx="264.5" cy="293.0" rx="2.0" ry="1.3" fill="#f0e8e0" transform="rotate(1 264.5 293.0)"/><ellipse cx="257.8" cy="276.4" rx="2.0" ry="1.0" fill="#ffffff" transform="rotate(140 257.8 276.4)"/><ellipse cx="269.7" cy="289.5" rx="1.8" ry="1.8" fill="#ffffff" transform="rotate(60 269.7 289.5)"/><ellipse cx="271.8" cy="277.7" rx="2.4" ry="1.0" fill="#d8d6cc" transform="rotate(164 271.8 277.7)"/><ellipse cx="244.6" cy="274.5" rx="1.1" ry="0.6" fill="#c8c0b0" transform="rotate(114 244.6 274.5)"/><ellipse cx="252.8" cy="262.7" rx="1.1" ry="1.0" fill="#d8d6cc" transform="rotate(178 252.8 262.7)"/><ellipse cx="259.3" cy="274.7" rx="1.8" ry="0.8" fill="#f0e8e0" transform="rotate(27 259.3 274.7)"/><ellipse cx="266.4" cy="282.2" rx="1.7" ry="1.0" fill="#c8c0b0" transform="rotate(146 266.4 282.2)"/><ellipse cx="267.6" cy="278.8" rx="1.2" ry="0.5" fill="#f0e8e0" transform="rotate(176 267.6 278.8)"/><ellipse cx="257.4" cy="289.1" rx="1.3" ry="0.6" fill="#f0e8e0" transform="rotate(123 257.4 289.1)"/><ellipse cx="245.8" cy="287.3" rx="2.2" ry="1.3" fill="#d8d6cc" transform="rotate(137 245.8 287.3)"/><ellipse cx="245.6" cy="269.3" rx="1.1" ry="0.7" fill="#d8d6cc" transform="rotate(70 245.6 269.3)"/><ellipse cx="245.0" cy="284.8" rx="1.1" ry="0.6" fill="#f0e8e0" transform="rotate(95 245.0 284.8)"/><ellipse cx="267.6" cy="273.9" rx="2.2" ry="0.9" fill="#f0e8e0" transform="rotate(167 267.6 273.9)"/><ellipse cx="265.0" cy="287.6" rx="1.0" ry="0.4" fill="#c8c0b0" transform="rotate(68 265.0 287.6)"/><ellipse cx="246.4" cy="288.4" rx="1.8" ry="1.1" fill="#f0e8e0" transform="rotate(43 246.4 288.4)"/><ellipse cx="247.4" cy="277.9" rx="1.5" ry="0.6" fill="#ffffff" transform="rotate(7 247.4 277.9)"/><ellipse cx="269.4" cy="275.8" rx="1.4" ry="1.3" fill="#ffffff" transform="rotate(59 269.4 275.8)"/><ellipse cx="259.9" cy="265.3" rx="1.3" ry="0.8" fill="#d8d6cc" transform="rotate(149 259.9 265.3)"/><ellipse cx="262.8" cy="266.5" rx="2.5" ry="1.4" fill="#d8d6cc" transform="rotate(161 262.8 266.5)"/><ellipse cx="265.7" cy="276.2" rx="2.4" ry="2.1" fill="#ffffff" transform="rotate(85 265.7 276.2)"/><ellipse cx="253.1" cy="292.1" rx="1.7" ry="1.1" fill="#c8c0b0" transform="rotate(12 253.1 292.1)"/><ellipse cx="260.0" cy="294.0" rx="1.9" ry="0.9" fill="#c8c0b0" transform="rotate(175 260.0 294.0)"/><ellipse cx="244.1" cy="280.6" rx="1.7" ry="1.6" fill="#c8c0b0" transform="rotate(118 244.1 280.6)"/><ellipse cx="249.9" cy="270.4" rx="1.3" ry="1.0" fill="#f0e8e0" transform="rotate(61 249.9 270.4)"/><ellipse cx="254.7" cy="288.5" rx="2.2" ry="1.8" fill="#ffffff" transform="rotate(158 254.7 288.5)"/><ellipse cx="258.8" cy="272.9" rx="1.2" ry="0.7" fill="#c8c0b0" transform="rotate(9 258.8 272.9)"/><ellipse cx="246.0" cy="274.5" rx="2.1" ry="1.2" fill="#d8d6cc" transform="rotate(82 246.0 274.5)"/><ellipse cx="258.3" cy="277.0" rx="1.8" ry="0.8" fill="#d8d6cc" transform="rotate(96 258.3 277.0)"/><ellipse cx="265.0" cy="264.5" rx="1.9" ry="1.5" fill="#c8c0b0" transform="rotate(5 265.0 264.5)"/><ellipse cx="253.0" cy="274.0" rx="1.7" ry="1.4" fill="#c8c0b0" transform="rotate(115 253.0 274.0)"/><ellipse cx="272.6" cy="284.6" rx="2.0" ry="1.4" fill="#c8c0b0" transform="rotate(92 272.6 284.6)"/><ellipse cx="267.6" cy="268.0" rx="1.4" ry="0.6" fill="#f0e8e0" transform="rotate(156 267.6 268.0)"/><ellipse cx="261.6" cy="286.8" rx="2.1" ry="1.2" fill="#ffffff" transform="rotate(70 261.6 286.8)"/><ellipse cx="254.2" cy="288.2" rx="2.4" ry="1.8" fill="#d8d6cc" transform="rotate(123 254.2 288.2)"/><ellipse cx="259.5" cy="291.5" rx="1.4" ry="1.3" fill="#c8c0b0" transform="rotate(100 259.5 291.5)"/><ellipse cx="274.0" cy="283.8" rx="1.6" ry="1.3" fill="#d8d6cc" transform="rotate(173 274.0 283.8)"/><ellipse cx="262.6" cy="274.1" rx="1.2" ry="0.9" fill="#f0e8e0" transform="rotate(63 262.6 274.1)"/><ellipse cx="271.4" cy="268.2" rx="1.5" ry="0.8" fill="#ffffff" transform="rotate(42 271.4 268.2)"/>
<ellipse cx="274.7" cy="284.4" rx="1.6" ry="1.2" fill="#4a1e0c" transform="rotate(144 274.7 284.4)"/><ellipse cx="301.1" cy="291.2" rx="2.3" ry="1.5" fill="#c07848" transform="rotate(108 301.1 291.2)"/><ellipse cx="294.2" cy="289.9" rx="1.7" ry="1.1" fill="#5a2810" transform="rotate(154 294.2 289.9)"/><ellipse cx="313.7" cy="281.9" rx="2.0" ry="1.0" fill="#7a3818" transform="rotate(144 313.7 281.9)"/><ellipse cx="297.6" cy="288.9" rx="2.1" ry="1.2" fill="#5a2810" transform="rotate(165 297.6 288.9)"/><ellipse cx="308.8" cy="281.9" rx="1.4" ry="1.3" fill="#c07848" transform="rotate(132 308.8 281.9)"/><ellipse cx="316.9" cy="281.6" rx="2.9" ry="2.3" fill="#c07848" transform="rotate(178 316.9 281.6)"/><ellipse cx="300.5" cy="295.9" rx="2.9" ry="1.2" fill="#e0a070" transform="rotate(40 300.5 295.9)"/><ellipse cx="276.4" cy="282.1" rx="1.9" ry="1.7" fill="#4a1e0c" transform="rotate(112 276.4 282.1)"/><ellipse cx="306.3" cy="296.5" rx="2.8" ry="2.3" fill="#4a1e0c" transform="rotate(148 306.3 296.5)"/><ellipse cx="301.0" cy="301.0" rx="1.4" ry="0.6" fill="#5a2810" transform="rotate(50 301.0 301.0)"/><ellipse cx="280.9" cy="283.2" rx="2.1" ry="1.7" fill="#e0a070" transform="rotate(21 280.9 283.2)"/><ellipse cx="293.4" cy="272.2" rx="3.2" ry="3.1" fill="#c07848" transform="rotate(175 293.4 272.2)"/><ellipse cx="287.4" cy="294.3" rx="2.2" ry="2.1" fill="#e0a070" transform="rotate(75 287.4 294.3)"/><ellipse cx="280.4" cy="282.3" rx="1.5" ry="1.4" fill="#e0a070" transform="rotate(178 280.4 282.3)"/><ellipse cx="307.8" cy="274.7" rx="1.4" ry="0.9" fill="#5a2810" transform="rotate(132 307.8 274.7)"/><ellipse cx="291.8" cy="278.6" rx="3.2" ry="1.8" fill="#e0a070" transform="rotate(18 291.8 278.6)"/><ellipse cx="297.6" cy="285.0" rx="1.6" ry="1.4" fill="#c07848" transform="rotate(23 297.6 285.0)"/><ellipse cx="292.7" cy="275.9" rx="1.4" ry="1.2" fill="#c07848" transform="rotate(92 292.7 275.9)"/><ellipse cx="298.0" cy="300.7" rx="2.9" ry="1.3" fill="#c07848" transform="rotate(49 298.0 300.7)"/><ellipse cx="317.8" cy="285.3" rx="2.1" ry="1.0" fill="#7a3818" transform="rotate(153 317.8 285.3)"/><ellipse cx="316.8" cy="292.6" rx="2.2" ry="1.0" fill="#d08850" transform="rotate(128 316.8 292.6)"/><ellipse cx="291.9" cy="289.8" rx="3.0" ry="2.4" fill="#e0a070" transform="rotate(150 291.9 289.8)"/><ellipse cx="307.9" cy="284.4" rx="2.9" ry="2.6" fill="#d08850" transform="rotate(3 307.9 284.4)"/><ellipse cx="308.5" cy="284.7" rx="3.1" ry="3.1" fill="#c07848" transform="rotate(100 308.5 284.7)"/><ellipse cx="291.2" cy="280.1" rx="2.1" ry="1.2" fill="#e0a070" transform="rotate(162 291.2 280.1)"/><ellipse cx="293.0" cy="274.2" rx="2.0" ry="1.8" fill="#c07848" transform="rotate(50 293.0 274.2)"/><ellipse cx="302.1" cy="294.4" rx="2.2" ry="1.3" fill="#d08850" transform="rotate(34 302.1 294.4)"/><ellipse cx="293.5" cy="274.3" rx="1.9" ry="1.5" fill="#5a2810" transform="rotate(47 293.5 274.3)"/><ellipse cx="277.3" cy="291.6" rx="1.9" ry="1.0" fill="#7a3818" transform="rotate(132 277.3 291.6)"/><ellipse cx="297.8" cy="280.5" rx="1.4" ry="0.9" fill="#7a3818" transform="rotate(94 297.8 280.5)"/><ellipse cx="314.5" cy="288.4" rx="2.1" ry="1.9" fill="#4a1e0c" transform="rotate(35 314.5 288.4)"/><ellipse cx="283.6" cy="288.4" rx="2.7" ry="1.3" fill="#d08850" transform="rotate(170 283.6 288.4)"/><ellipse cx="308.0" cy="284.6" rx="2.2" ry="1.7" fill="#7a3818" transform="rotate(14 308.0 284.6)"/><ellipse cx="309.6" cy="279.2" rx="2.6" ry="2.4" fill="#5a2810" transform="rotate(142 309.6 279.2)"/><ellipse cx="285.3" cy="285.5" rx="2.5" ry="2.4" fill="#7a3818" transform="rotate(145 285.3 285.5)"/><ellipse cx="296.4" cy="293.4" rx="3.1" ry="3.0" fill="#d08850" transform="rotate(77 296.4 293.4)"/><ellipse cx="311.6" cy="289.7" rx="2.6" ry="2.0" fill="#5a2810" transform="rotate(54 311.6 289.7)"/><ellipse cx="296.4" cy="283.7" rx="3.0" ry="1.8" fill="#4a1e0c" transform="rotate(95 296.4 283.7)"/><ellipse cx="310.8" cy="276.1" rx="1.9" ry="1.3" fill="#4a1e0c" transform="rotate(144 310.8 276.1)"/><ellipse cx="281.0" cy="285.6" rx="1.3" ry="0.6" fill="#7a3818" transform="rotate(36 281.0 285.6)"/><ellipse cx="289.0" cy="282.2" rx="2.8" ry="2.0" fill="#c07848" transform="rotate(31 289.0 282.2)"/><ellipse cx="283.6" cy="296.9" rx="2.5" ry="1.6" fill="#e0a070" transform="rotate(62 283.6 296.9)"/><ellipse cx="304.7" cy="289.8" rx="3.0" ry="2.8" fill="#c07848" transform="rotate(152 304.7 289.8)"/><ellipse cx="306.5" cy="288.8" rx="1.2" ry="0.5" fill="#4a1e0c" transform="rotate(126 306.5 288.8)"/><ellipse cx="303.4" cy="291.5" rx="1.3" ry="0.8" fill="#d08850" transform="rotate(135 303.4 291.5)"/><ellipse cx="300.3" cy="290.4" rx="1.6" ry="1.6" fill="#5a2810" transform="rotate(16 300.3 290.4)"/><ellipse cx="305.5" cy="289.8" rx="1.3" ry="1.1" fill="#7a3818" transform="rotate(166 305.5 289.8)"/><ellipse cx="296.2" cy="288.2" rx="2.9" ry="2.8" fill="#e0a070" transform="rotate(69 296.2 288.2)"/><ellipse cx="276.8" cy="294.6" rx="1.7" ry="1.0" fill="#5a2810" transform="rotate(82 276.8 294.6)"/><ellipse cx="295.8" cy="299.1" rx="2.1" ry="1.1" fill="#c07848" transform="rotate(67 295.8 299.1)"/><ellipse cx="286.1" cy="290.4" rx="2.1" ry="1.0" fill="#5a2810" transform="rotate(163 286.1 290.4)"/><ellipse cx="291.4" cy="290.6" rx="2.5" ry="1.3" fill="#c07848" transform="rotate(125 291.4 290.6)"/><ellipse cx="279.2" cy="287.1" rx="3.1" ry="1.9" fill="#5a2810" transform="rotate(37 279.2 287.1)"/><ellipse cx="291.8" cy="288.9" rx="2.2" ry="2.1" fill="#c07848" transform="rotate(142 291.8 288.9)"/><ellipse cx="282.5" cy="277.0" rx="2.3" ry="1.3" fill="#7a3818" transform="rotate(75 282.5 277.0)"/><ellipse cx="300.6" cy="277.9" rx="2.1" ry="1.9" fill="#4a1e0c" transform="rotate(67 300.6 277.9)"/><ellipse cx="294.4" cy="293.3" rx="1.4" ry="1.2" fill="#e0a070" transform="rotate(28 294.4 293.3)"/><ellipse cx="287.1" cy="275.1" rx="2.5" ry="2.2" fill="#4a1e0c" transform="rotate(45 287.1 275.1)"/><ellipse cx="289.4" cy="291.1" rx="2.6" ry="1.5" fill="#d08850" transform="rotate(84 289.4 291.1)"/><ellipse cx="313.4" cy="281.4" rx="1.8" ry="1.1" fill="#d08850" transform="rotate(16 313.4 281.4)"/><ellipse cx="290.5" cy="285.9" rx="1.3" ry="0.9" fill="#4a1e0c" transform="rotate(138 290.5 285.9)"/><ellipse cx="284.9" cy="275.2" rx="2.2" ry="2.1" fill="#5a2810" transform="rotate(119 284.9 275.2)"/><ellipse cx="289.3" cy="277.1" rx="1.7" ry="1.3" fill="#5a2810" transform="rotate(21 289.3 277.1)"/><ellipse cx="302.4" cy="291.9" rx="2.0" ry="0.9" fill="#7a3818" transform="rotate(141 302.4 291.9)"/><ellipse cx="292.8" cy="296.6" rx="1.3" ry="1.2" fill="#c07848" transform="rotate(97 292.8 296.6)"/><ellipse cx="302.5" cy="277.4" rx="1.6" ry="1.5" fill="#e0a070" transform="rotate(135 302.5 277.4)"/><ellipse cx="274.4" cy="281.2" rx="2.9" ry="2.3" fill="#7a3818" transform="rotate(113 274.4 281.2)"/><ellipse cx="297.5" cy="295.9" rx="2.5" ry="1.4" fill="#c07848" transform="rotate(160 297.5 295.9)"/><ellipse cx="283.3" cy="286.1" rx="2.7" ry="2.1" fill="#c07848" transform="rotate(152 283.3 286.1)"/>
<ellipse cx="230.1" cy="235.1" rx="3.0" ry="1.4" fill="#f0a040" transform="rotate(34 230.1 235.1)"/><ellipse cx="232.5" cy="234.3" rx="2.9" ry="1.6" fill="#c86018" transform="rotate(173 232.5 234.3)"/><ellipse cx="228.2" cy="235.2" rx="1.7" ry="1.3" fill="#c86018" transform="rotate(160 228.2 235.2)"/><ellipse cx="237.8" cy="224.8" rx="2.9" ry="1.4" fill="#f0a040" transform="rotate(86 237.8 224.8)"/><ellipse cx="248.9" cy="231.7" rx="3.2" ry="2.9" fill="#f8c070" transform="rotate(154 248.9 231.7)"/><ellipse cx="234.1" cy="229.3" rx="3.3" ry="1.6" fill="#c86018" transform="rotate(75 234.1 229.3)"/><ellipse cx="240.7" cy="239.6" rx="1.8" ry="1.4" fill="#f8c070" transform="rotate(8 240.7 239.6)"/><ellipse cx="235.6" cy="237.6" rx="2.8" ry="1.8" fill="#f8c070" transform="rotate(172 235.6 237.6)"/><ellipse cx="243.0" cy="238.6" rx="2.5" ry="1.5" fill="#f8c070" transform="rotate(157 243.0 238.6)"/><ellipse cx="248.8" cy="234.4" rx="2.6" ry="1.8" fill="#c86018" transform="rotate(95 248.8 234.4)"/><ellipse cx="222.2" cy="232.6" rx="2.5" ry="1.2" fill="#f0a040" transform="rotate(43 222.2 232.6)"/><ellipse cx="231.9" cy="237.3" rx="2.8" ry="1.8" fill="#f8c070" transform="rotate(58 231.9 237.3)"/><ellipse cx="252.3" cy="238.7" rx="1.9" ry="1.0" fill="#f0a040" transform="rotate(128 252.3 238.7)"/><ellipse cx="238.7" cy="233.3" rx="1.9" ry="0.9" fill="#f8c070" transform="rotate(152 238.7 233.3)"/><ellipse cx="247.6" cy="236.9" rx="3.1" ry="2.6" fill="#c86018" transform="rotate(135 247.6 236.9)"/><ellipse cx="262.0" cy="226.4" rx="1.6" ry="0.7" fill="#f0a040" transform="rotate(27 262.0 226.4)"/><ellipse cx="264.9" cy="231.5" rx="2.1" ry="0.9" fill="#f8c070" transform="rotate(156 264.9 231.5)"/><ellipse cx="251.2" cy="237.4" rx="2.7" ry="2.3" fill="#f8c070" transform="rotate(52 251.2 237.4)"/><ellipse cx="223.3" cy="229.4" rx="1.7" ry="1.1" fill="#f0a040" transform="rotate(44 223.3 229.4)"/><ellipse cx="241.4" cy="228.8" rx="3.0" ry="1.9" fill="#f0a040" transform="rotate(29 241.4 228.8)"/>
<ellipse cx="222" cy="266" rx="11" ry="9" fill="#f4e4c8"/><ellipse cx="222" cy="267" rx="8" ry="6" fill="#e8b830"/><ellipse cx="234" cy="250" rx="9" ry="6" fill="#f0e0d0"/><ellipse cx="234" cy="250" rx="6.5" ry="4" fill="#c82818"/>
</g>
<ellipse cx="271.3" cy="264.2" rx="65" ry="44.5" fill="none" stroke="#fff" stroke-width="2"/>
<path d="M229.9 318.6 L250.6 351.8 L229.9 385 Z" fill="#e81c24" stroke="#f6e000" stroke-width="1.5"/>
<path d="M232.4 326.6 L246.6 351.3 L233.9 351.3 Z" fill="#fff"/>
<path d="M230.5 419.4 L250.6 449.9 L230.5 480.3 Z" fill="#e81c24" stroke="#f6e000" stroke-width="1.5"/>
<path d="M233.0 427.4 L246.6 449.4 L234.5 449.4 Z" fill="#fff"/>
<rect x="250.1" y="499.4" width="88.3" height="79.7" fill="#fff"/>
<g clip-path="url(#ph)"><rect x="252.7" y="501.7" width="84" height="75.3" fill="#c2c2c2"/>
<path d="M252 508 Q280 503 337 507 M252 522 Q275 517 300 520 M252 566 Q280 560 337 568 M252 548 Q258 546 266 548" stroke="#dcdcdc" stroke-width="2.5" fill="none"/>
<path d="M252 514 Q290 511 300 514 M252 575 Q290 572 337 576" stroke="#8a8a8a" stroke-width="1.2" fill="none"/>
<path d="M300 503 Q318 500 337 503 L337 522 Q325 524 312 520 Q302 516 300 510Z" fill="#2a6a28"/><circle cx="309" cy="509" r="2" fill="#e02828"/><circle cx="321" cy="507" r="1.8" fill="#e02828"/><circle cx="331" cy="515" r="1.8" fill="#e02828"/><circle cx="316" cy="516" r="1.5" fill="#e8e8e8"/>
<ellipse cx="298.5" cy="551" rx="36.5" ry="23.5" fill="#1e3cb0"/><ellipse cx="298.5" cy="553" rx="31" ry="17" fill="#e8e8f0"/>
<path d="M263 556 Q264 530 282 516 Q300 508 318 516 Q334 530 333 556 Q322 572 298 573 Q272 572 263 556Z" fill="#f0d020"/>
<ellipse cx="321.7" cy="553.1" rx="1.1" ry="0.7" fill="#f0a020" transform="rotate(37 321.7 553.1)"/><ellipse cx="292.5" cy="521.3" rx="1.4" ry="1.2" fill="#50a030" transform="rotate(176 292.5 521.3)"/><ellipse cx="319.6" cy="552.8" rx="1.9" ry="1.7" fill="#f0a020" transform="rotate(106 319.6 552.8)"/><ellipse cx="301.6" cy="559.6" rx="1.8" ry="1.5" fill="#e8b818" transform="rotate(83 301.6 559.6)"/><ellipse cx="302.9" cy="554.4" rx="2.0" ry="0.9" fill="#ffffff" transform="rotate(136 302.9 554.4)"/><ellipse cx="306.0" cy="554.0" rx="1.4" ry="1.3" fill="#50a030" transform="rotate(73 306.0 554.0)"/><ellipse cx="278.9" cy="546.1" rx="1.8" ry="1.7" fill="#50a030" transform="rotate(1 278.9 546.1)"/><ellipse cx="310.1" cy="542.4" rx="2.0" ry="1.8" fill="#50a030" transform="rotate(20 310.1 542.4)"/><ellipse cx="297.3" cy="537.6" rx="2.2" ry="1.8" fill="#fff080" transform="rotate(122 297.3 537.6)"/><ellipse cx="283.9" cy="547.4" rx="2.0" ry="1.2" fill="#e03020" transform="rotate(105 283.9 547.4)"/><ellipse cx="278.2" cy="540.5" rx="1.4" ry="1.3" fill="#e8b818" transform="rotate(122 278.2 540.5)"/><ellipse cx="285.7" cy="559.2" rx="0.9" ry="0.6" fill="#e8b818" transform="rotate(21 285.7 559.2)"/><ellipse cx="307.9" cy="548.5" rx="0.9" ry="0.8" fill="#f0a020" transform="rotate(44 307.9 548.5)"/><ellipse cx="287.2" cy="561.1" rx="1.9" ry="1.1" fill="#50a030" transform="rotate(31 287.2 561.1)"/><ellipse cx="313.9" cy="561.8" rx="1.8" ry="0.8" fill="#f0a020" transform="rotate(131 313.9 561.8)"/><ellipse cx="320.8" cy="530.4" rx="1.2" ry="0.8" fill="#e03020" transform="rotate(115 320.8 530.4)"/><ellipse cx="302.3" cy="566.6" rx="1.5" ry="1.4" fill="#ffffff" transform="rotate(23 302.3 566.6)"/><ellipse cx="303.4" cy="523.5" rx="1.3" ry="0.9" fill="#e8b818" transform="rotate(88 303.4 523.5)"/><ellipse cx="305.6" cy="540.3" rx="2.2" ry="2.0" fill="#fff080" transform="rotate(174 305.6 540.3)"/><ellipse cx="274.2" cy="535.6" rx="2.0" ry="1.4" fill="#f8e040" transform="rotate(175 274.2 535.6)"/><ellipse cx="323.8" cy="548.6" rx="2.0" ry="1.2" fill="#f0a020" transform="rotate(128 323.8 548.6)"/><ellipse cx="299.6" cy="544.6" rx="0.9" ry="0.7" fill="#f0a020" transform="rotate(105 299.6 544.6)"/><ellipse cx="307.4" cy="549.5" rx="1.4" ry="0.9" fill="#e8b818" transform="rotate(16 307.4 549.5)"/><ellipse cx="294.3" cy="562.2" rx="1.2" ry="0.8" fill="#e03020" transform="rotate(151 294.3 562.2)"/><ellipse cx="276.6" cy="534.7" rx="1.6" ry="1.2" fill="#50a030" transform="rotate(12 276.6 534.7)"/><ellipse cx="305.6" cy="533.7" rx="1.7" ry="0.7" fill="#f0a020" transform="rotate(75 305.6 533.7)"/><ellipse cx="277.7" cy="535.9" rx="1.8" ry="1.3" fill="#ffffff" transform="rotate(101 277.7 535.9)"/><ellipse cx="318.5" cy="549.7" rx="2.0" ry="1.0" fill="#f0a020" transform="rotate(81 318.5 549.7)"/><ellipse cx="294.3" cy="533.1" rx="2.1" ry="1.3" fill="#50a030" transform="rotate(29 294.3 533.1)"/><ellipse cx="291.4" cy="561.1" rx="2.2" ry="1.0" fill="#50a030" transform="rotate(138 291.4 561.1)"/><ellipse cx="295.5" cy="533.3" rx="1.0" ry="0.7" fill="#50a030" transform="rotate(102 295.5 533.3)"/><ellipse cx="286.9" cy="529.4" rx="1.0" ry="1.0" fill="#e03020" transform="rotate(116 286.9 529.4)"/><ellipse cx="275.1" cy="538.2" rx="1.1" ry="0.6" fill="#f0a020" transform="rotate(62 275.1 538.2)"/><ellipse cx="309.5" cy="562.0" rx="1.7" ry="0.7" fill="#f8e040" transform="rotate(141 309.5 562.0)"/><ellipse cx="286.4" cy="536.3" rx="1.7" ry="0.8" fill="#f8e040" transform="rotate(11 286.4 536.3)"/><ellipse cx="296.5" cy="529.8" rx="2.1" ry="2.1" fill="#fff080" transform="rotate(80 296.5 529.8)"/><ellipse cx="281.3" cy="541.9" rx="0.8" ry="0.4" fill="#e8b818" transform="rotate(27 281.3 541.9)"/><ellipse cx="312.4" cy="564.2" rx="2.0" ry="1.7" fill="#fff080" transform="rotate(105 312.4 564.2)"/><ellipse cx="278.1" cy="533.0" rx="0.9" ry="0.5" fill="#50a030" transform="rotate(125 278.1 533.0)"/><ellipse cx="318.3" cy="556.8" rx="1.5" ry="0.8" fill="#f8e040" transform="rotate(142 318.3 556.8)"/><ellipse cx="281.1" cy="551.9" rx="0.9" ry="0.6" fill="#50a030" transform="rotate(66 281.1 551.9)"/><ellipse cx="312.5" cy="564.4" rx="1.2" ry="0.7" fill="#e03020" transform="rotate(124 312.5 564.4)"/><ellipse cx="299.3" cy="537.0" rx="1.2" ry="0.6" fill="#ffffff" transform="rotate(149 299.3 537.0)"/><ellipse cx="285.7" cy="527.2" rx="0.8" ry="0.6" fill="#e8b818" transform="rotate(1 285.7 527.2)"/><ellipse cx="301.8" cy="524.3" rx="1.1" ry="0.7" fill="#50a030" transform="rotate(149 301.8 524.3)"/><ellipse cx="281.1" cy="560.4" rx="1.0" ry="0.9" fill="#e8b818" transform="rotate(30 281.1 560.4)"/><ellipse cx="304.4" cy="549.5" rx="2.0" ry="1.5" fill="#e8b818" transform="rotate(112 304.4 549.5)"/><ellipse cx="305.7" cy="553.2" rx="0.9" ry="0.5" fill="#f0a020" transform="rotate(139 305.7 553.2)"/><ellipse cx="307.0" cy="552.5" rx="1.7" ry="1.3" fill="#e03020" transform="rotate(3 307.0 552.5)"/><ellipse cx="286.1" cy="546.9" rx="1.6" ry="1.3" fill="#fff080" transform="rotate(97 286.1 546.9)"/><ellipse cx="284.7" cy="542.6" rx="1.6" ry="1.3" fill="#e8b818" transform="rotate(49 284.7 542.6)"/><ellipse cx="294.8" cy="546.9" rx="1.1" ry="0.5" fill="#ffffff" transform="rotate(5 294.8 546.9)"/><ellipse cx="300.8" cy="529.5" rx="1.8" ry="1.0" fill="#ffffff" transform="rotate(69 300.8 529.5)"/><ellipse cx="272.8" cy="536.9" rx="1.8" ry="1.4" fill="#f8e040" transform="rotate(154 272.8 536.9)"/><ellipse cx="281.7" cy="533.5" rx="2.1" ry="1.4" fill="#fff080" transform="rotate(17 281.7 533.5)"/><ellipse cx="296.8" cy="543.3" rx="1.0" ry="0.8" fill="#50a030" transform="rotate(122 296.8 543.3)"/><ellipse cx="327.3" cy="539.1" rx="1.6" ry="0.9" fill="#ffffff" transform="rotate(169 327.3 539.1)"/><ellipse cx="283.5" cy="544.1" rx="1.0" ry="0.7" fill="#ffffff" transform="rotate(157 283.5 544.1)"/><ellipse cx="308.6" cy="527.8" rx="1.3" ry="1.2" fill="#ffffff" transform="rotate(59 308.6 527.8)"/><ellipse cx="302.0" cy="557.7" rx="1.7" ry="1.0" fill="#e8b818" transform="rotate(106 302.0 557.7)"/><ellipse cx="297.5" cy="545.1" rx="1.8" ry="1.6" fill="#f0a020" transform="rotate(123 297.5 545.1)"/><ellipse cx="324.4" cy="541.3" rx="1.6" ry="1.6" fill="#fff080" transform="rotate(56 324.4 541.3)"/><ellipse cx="314.6" cy="551.3" rx="1.6" ry="1.4" fill="#ffffff" transform="rotate(172 314.6 551.3)"/><ellipse cx="276.8" cy="543.4" rx="1.7" ry="1.4" fill="#f8e040" transform="rotate(11 276.8 543.4)"/><ellipse cx="293.6" cy="563.8" rx="2.1" ry="1.8" fill="#fff080" transform="rotate(111 293.6 563.8)"/><ellipse cx="299.9" cy="552.0" rx="1.7" ry="1.6" fill="#50a030" transform="rotate(57 299.9 552.0)"/><ellipse cx="326.2" cy="543.7" rx="1.5" ry="1.2" fill="#e03020" transform="rotate(82 326.2 543.7)"/><ellipse cx="287.1" cy="544.0" rx="0.9" ry="0.4" fill="#fff080" transform="rotate(71 287.1 544.0)"/><ellipse cx="308.2" cy="541.3" rx="0.9" ry="0.6" fill="#f0a020" transform="rotate(59 308.2 541.3)"/><ellipse cx="287.7" cy="532.4" rx="1.3" ry="0.5" fill="#f8e040" transform="rotate(38 287.7 532.4)"/><ellipse cx="282.2" cy="533.8" rx="1.1" ry="1.1" fill="#ffffff" transform="rotate(63 282.2 533.8)"/><ellipse cx="301.5" cy="532.1" rx="1.5" ry="1.2" fill="#f8e040" transform="rotate(36 301.5 532.1)"/><ellipse cx="308.0" cy="561.5" rx="0.9" ry="0.5" fill="#e8b818" transform="rotate(138 308.0 561.5)"/><ellipse cx="287.6" cy="528.8" rx="1.4" ry="1.1" fill="#f0a020" transform="rotate(0 287.6 528.8)"/><ellipse cx="299.5" cy="538.8" rx="0.9" ry="0.4" fill="#fff080" transform="rotate(78 299.5 538.8)"/><ellipse cx="301.6" cy="526.7" rx="1.8" ry="1.4" fill="#fff080" transform="rotate(141 301.6 526.7)"/><ellipse cx="320.0" cy="533.3" rx="1.4" ry="1.4" fill="#f8e040" transform="rotate(116 320.0 533.3)"/><ellipse cx="296.8" cy="555.4" rx="2.2" ry="1.0" fill="#e03020" transform="rotate(19 296.8 555.4)"/><ellipse cx="282.7" cy="540.3" rx="0.9" ry="0.5" fill="#e03020" transform="rotate(159 282.7 540.3)"/><ellipse cx="291.4" cy="529.2" rx="1.7" ry="1.2" fill="#e03020" transform="rotate(93 291.4 529.2)"/><ellipse cx="280.1" cy="554.1" rx="0.8" ry="0.6" fill="#f0a020" transform="rotate(2 280.1 554.1)"/><ellipse cx="325.6" cy="542.5" rx="1.6" ry="1.5" fill="#f0a020" transform="rotate(66 325.6 542.5)"/><ellipse cx="280.6" cy="560.9" rx="1.5" ry="0.7" fill="#f8e040" transform="rotate(157 280.6 560.9)"/><ellipse cx="321.4" cy="547.8" rx="1.2" ry="1.0" fill="#f8e040" transform="rotate(171 321.4 547.8)"/><ellipse cx="307.9" cy="522.4" rx="1.4" ry="1.3" fill="#e03020" transform="rotate(38 307.9 522.4)"/><ellipse cx="280.5" cy="531.3" rx="0.9" ry="0.6" fill="#e8b818" transform="rotate(57 280.5 531.3)"/><ellipse cx="294.7" cy="563.0" rx="2.1" ry="1.4" fill="#ffffff" transform="rotate(34 294.7 563.0)"/><ellipse cx="294.7" cy="527.8" rx="1.3" ry="0.6" fill="#f0a020" transform="rotate(76 294.7 527.8)"/><ellipse cx="272.3" cy="542.2" rx="1.7" ry="1.1" fill="#e03020" transform="rotate(62 272.3 542.2)"/><ellipse cx="272.4" cy="533.4" rx="1.7" ry="1.6" fill="#50a030" transform="rotate(132 272.4 533.4)"/><ellipse cx="270.3" cy="536.7" rx="1.3" ry="0.6" fill="#e8b818" transform="rotate(97 270.3 536.7)"/><ellipse cx="299.0" cy="537.9" rx="1.2" ry="0.8" fill="#e8b818" transform="rotate(152 299.0 537.9)"/><ellipse cx="278.8" cy="554.2" rx="2.1" ry="1.3" fill="#f8e040" transform="rotate(24 278.8 554.2)"/><ellipse cx="314.6" cy="563.7" rx="1.4" ry="1.0" fill="#f0a020" transform="rotate(171 314.6 563.7)"/><ellipse cx="311.3" cy="540.5" rx="1.1" ry="0.6" fill="#f8e040" transform="rotate(144 311.3 540.5)"/><ellipse cx="325.0" cy="536.7" rx="1.4" ry="0.8" fill="#ffffff" transform="rotate(79 325.0 536.7)"/><ellipse cx="297.5" cy="528.2" rx="2.0" ry="2.0" fill="#f8e040" transform="rotate(117 297.5 528.2)"/><ellipse cx="287.7" cy="524.2" rx="1.5" ry="1.5" fill="#f8e040" transform="rotate(77 287.7 524.2)"/><ellipse cx="276.9" cy="535.8" rx="1.8" ry="1.5" fill="#e8b818" transform="rotate(121 276.9 535.8)"/><ellipse cx="279.9" cy="538.9" rx="2.2" ry="1.2" fill="#50a030" transform="rotate(159 279.9 538.9)"/><ellipse cx="316.0" cy="548.7" rx="0.9" ry="0.8" fill="#e03020" transform="rotate(5 316.0 548.7)"/><ellipse cx="310.4" cy="547.6" rx="1.8" ry="1.5" fill="#ffffff" transform="rotate(5 310.4 547.6)"/><ellipse cx="319.9" cy="546.9" rx="2.1" ry="1.7" fill="#f8e040" transform="rotate(179 319.9 546.9)"/><ellipse cx="299.5" cy="552.0" rx="1.9" ry="1.5" fill="#50a030" transform="rotate(81 299.5 552.0)"/><ellipse cx="285.2" cy="562.7" rx="1.7" ry="1.4" fill="#e8b818" transform="rotate(154 285.2 562.7)"/><ellipse cx="317.9" cy="533.8" rx="1.7" ry="1.4" fill="#fff080" transform="rotate(67 317.9 533.8)"/><ellipse cx="285.1" cy="539.0" rx="1.7" ry="1.4" fill="#e8b818" transform="rotate(67 285.1 539.0)"/><ellipse cx="315.1" cy="558.3" rx="0.9" ry="0.4" fill="#f0a020" transform="rotate(165 315.1 558.3)"/><ellipse cx="305.3" cy="560.9" rx="2.2" ry="1.5" fill="#f0a020" transform="rotate(9 305.3 560.9)"/><ellipse cx="296.3" cy="537.8" rx="1.9" ry="1.4" fill="#f8e040" transform="rotate(134 296.3 537.8)"/>
<ellipse cx="327.2" cy="512.8" rx="1.3" ry="1.3" fill="#1a4a18" transform="rotate(127 327.2 512.8)"/><ellipse cx="306.2" cy="514.2" rx="1.5" ry="0.7" fill="#3a8a30" transform="rotate(13 306.2 514.2)"/><ellipse cx="314.4" cy="505.8" rx="2.1" ry="1.1" fill="#e8e8e8" transform="rotate(178 314.4 505.8)"/><ellipse cx="304.4" cy="514.5" rx="1.1" ry="0.8" fill="#3a8a30" transform="rotate(150 304.4 514.5)"/><ellipse cx="321.4" cy="513.3" rx="1.9" ry="1.8" fill="#e8e8e8" transform="rotate(77 321.4 513.3)"/><ellipse cx="317.5" cy="509.1" rx="2.0" ry="1.8" fill="#1a4a18" transform="rotate(166 317.5 509.1)"/><ellipse cx="322.2" cy="505.9" rx="1.0" ry="0.9" fill="#e8e8e8" transform="rotate(43 322.2 505.9)"/><ellipse cx="333.6" cy="512.3" rx="1.7" ry="1.2" fill="#e8e8e8" transform="rotate(58 333.6 512.3)"/><ellipse cx="312.4" cy="508.9" rx="2.1" ry="1.7" fill="#e8e8e8" transform="rotate(30 312.4 508.9)"/><ellipse cx="319.2" cy="516.0" rx="2.3" ry="1.2" fill="#e8e8e8" transform="rotate(35 319.2 516.0)"/><ellipse cx="312.5" cy="513.3" rx="2.0" ry="2.0" fill="#e02828" transform="rotate(69 312.5 513.3)"/><ellipse cx="314.5" cy="505.7" rx="2.0" ry="0.9" fill="#3a8a30" transform="rotate(18 314.5 505.7)"/><ellipse cx="318.0" cy="514.6" rx="1.5" ry="0.8" fill="#e02828" transform="rotate(48 318.0 514.6)"/><ellipse cx="323.8" cy="507.7" rx="2.1" ry="2.0" fill="#e8e8e8" transform="rotate(56 323.8 507.7)"/><ellipse cx="330.0" cy="508.5" rx="1.2" ry="0.9" fill="#1a4a18" transform="rotate(51 330.0 508.5)"/><ellipse cx="316.1" cy="506.7" rx="2.3" ry="1.8" fill="#e02828" transform="rotate(126 316.1 506.7)"/><ellipse cx="317.8" cy="505.0" rx="1.8" ry="1.5" fill="#e02828" transform="rotate(44 317.8 505.0)"/><ellipse cx="320.6" cy="511.4" rx="2.2" ry="1.6" fill="#1a4a18" transform="rotate(144 320.6 511.4)"/><ellipse cx="328.4" cy="510.6" rx="2.3" ry="2.1" fill="#3a8a30" transform="rotate(155 328.4 510.6)"/><ellipse cx="316.8" cy="504.4" rx="1.4" ry="0.8" fill="#1a4a18" transform="rotate(28 316.8 504.4)"/><ellipse cx="324.7" cy="510.6" rx="1.4" ry="0.9" fill="#e8e8e8" transform="rotate(150 324.7 510.6)"/><ellipse cx="308.3" cy="514.2" rx="1.6" ry="1.1" fill="#e02828" transform="rotate(152 308.3 514.2)"/><ellipse cx="317.4" cy="504.2" rx="1.0" ry="0.9" fill="#3a8a30" transform="rotate(36 317.4 504.2)"/><ellipse cx="314.3" cy="516.2" rx="1.3" ry="0.9" fill="#e02828" transform="rotate(67 314.3 516.2)"/><ellipse cx="324.3" cy="506.6" rx="1.6" ry="0.8" fill="#3a8a30" transform="rotate(85 324.3 506.6)"/><ellipse cx="332.3" cy="511.7" rx="2.5" ry="2.2" fill="#1a4a18" transform="rotate(112 332.3 511.7)"/><ellipse cx="306.0" cy="514.3" rx="1.5" ry="0.7" fill="#e8e8e8" transform="rotate(58 306.0 514.3)"/><ellipse cx="323.1" cy="516.1" rx="2.2" ry="1.2" fill="#3a8a30" transform="rotate(138 323.1 516.1)"/><ellipse cx="307.2" cy="515.8" rx="2.0" ry="1.6" fill="#3a8a30" transform="rotate(168 307.2 515.8)"/><ellipse cx="315.7" cy="504.4" rx="1.4" ry="0.9" fill="#e02828" transform="rotate(28 315.7 504.4)"/>
<ellipse cx="270.8" cy="518.3" rx="3.9" ry="3.2" fill="#e0e0e0" transform="rotate(87 270.8 518.3)"/><ellipse cx="282.4" cy="511.4" rx="2.7" ry="2.6" fill="#e0e0e0" transform="rotate(153 282.4 511.4)"/><ellipse cx="280.0" cy="517.3" rx="3.0" ry="2.7" fill="#a0a0a0" transform="rotate(109 280.0 517.3)"/><ellipse cx="266.2" cy="517.2" rx="2.9" ry="1.6" fill="#e0e0e0" transform="rotate(64 266.2 517.2)"/><ellipse cx="281.9" cy="508.1" rx="3.9" ry="1.8" fill="#e0e0e0" transform="rotate(42 281.9 508.1)"/><ellipse cx="267.4" cy="505.1" rx="3.8" ry="2.8" fill="#f4f4f4" transform="rotate(148 267.4 505.1)"/><ellipse cx="280.3" cy="508.3" rx="2.6" ry="1.6" fill="#8a8a8a" transform="rotate(113 280.3 508.3)"/><ellipse cx="269.7" cy="516.8" rx="3.1" ry="1.4" fill="#a0a0a0" transform="rotate(147 269.7 516.8)"/><ellipse cx="267.2" cy="517.4" rx="2.8" ry="1.5" fill="#a0a0a0" transform="rotate(117 267.2 517.4)"/><ellipse cx="266.7" cy="517.2" rx="2.5" ry="1.2" fill="#f4f4f4" transform="rotate(20 266.7 517.2)"/><ellipse cx="272.3" cy="506.6" rx="2.5" ry="1.1" fill="#8a8a8a" transform="rotate(29 272.3 506.6)"/><ellipse cx="274.2" cy="512.9" rx="1.9" ry="1.4" fill="#8a8a8a" transform="rotate(130 274.2 512.9)"/><ellipse cx="261.1" cy="511.1" rx="3.6" ry="2.8" fill="#f4f4f4" transform="rotate(40 261.1 511.1)"/><ellipse cx="262.6" cy="514.1" rx="2.9" ry="1.7" fill="#8a8a8a" transform="rotate(25 262.6 514.1)"/><ellipse cx="268.6" cy="514.0" rx="3.7" ry="2.3" fill="#a0a0a0" transform="rotate(143 268.6 514.0)"/><ellipse cx="285.8" cy="508.1" rx="3.1" ry="1.6" fill="#a0a0a0" transform="rotate(179 285.8 508.1)"/><ellipse cx="278.5" cy="508.2" rx="2.7" ry="1.8" fill="#a0a0a0" transform="rotate(45 278.5 508.2)"/><ellipse cx="268.9" cy="512.4" rx="3.7" ry="1.8" fill="#f4f4f4" transform="rotate(151 268.9 512.4)"/><ellipse cx="261.0" cy="516.4" rx="4.0" ry="2.1" fill="#8a8a8a" transform="rotate(159 261.0 516.4)"/><ellipse cx="286.2" cy="514.6" rx="1.8" ry="1.2" fill="#a0a0a0" transform="rotate(22 286.2 514.6)"/><ellipse cx="279.8" cy="511.3" rx="2.3" ry="1.2" fill="#a0a0a0" transform="rotate(112 279.8 511.3)"/><ellipse cx="260.9" cy="514.9" rx="2.4" ry="1.6" fill="#a0a0a0" transform="rotate(70 260.9 514.9)"/><ellipse cx="279.5" cy="519.0" rx="1.9" ry="0.9" fill="#f4f4f4" transform="rotate(109 279.5 519.0)"/><ellipse cx="285.1" cy="507.6" rx="3.8" ry="3.5" fill="#8a8a8a" transform="rotate(110 285.1 507.6)"/><ellipse cx="284.6" cy="508.9" rx="2.1" ry="0.9" fill="#a0a0a0" transform="rotate(7 284.6 508.9)"/><ellipse cx="278.1" cy="517.1" rx="2.4" ry="2.2" fill="#e0e0e0" transform="rotate(114 278.1 517.1)"/><ellipse cx="276.5" cy="510.1" rx="2.7" ry="1.9" fill="#8a8a8a" transform="rotate(63 276.5 510.1)"/><ellipse cx="266.0" cy="511.0" rx="2.0" ry="1.2" fill="#f4f4f4" transform="rotate(147 266.0 511.0)"/><ellipse cx="261.2" cy="512.5" rx="1.7" ry="1.6" fill="#8a8a8a" transform="rotate(139 261.2 512.5)"/><ellipse cx="284.2" cy="506.3" rx="2.2" ry="1.8" fill="#f4f4f4" transform="rotate(67 284.2 506.3)"/>
<g><circle cx="280" cy="530" r="2.4" fill="#e83020"/><circle cx="296" cy="524" r="2" fill="#f08020"/><circle cx="310" cy="532" r="2.6" fill="#e83020"/><circle cx="286" cy="548" r="2.8" fill="#40a030"/><circle cx="303" cy="544" r="3" fill="#e83020"/><circle cx="318" cy="550" r="2.4" fill="#40a030"/><circle cx="292" cy="560" r="2.2" fill="#e06020"/><circle cx="274" cy="552" r="2" fill="#e83020"/><circle cx="322" cy="538" r="2" fill="#f8f060"/><circle cx="300" cy="535" r="2.5" fill="#f8f070"/><circle cx="308" cy="560" r="2.2" fill="#40a030"/></g>
</g>
<g fill="none" stroke-linecap="round" stroke-linejoin="round">
<path d="M59.6 249.4 C63 236 80 224 92 224.4 C101 225 102 238 98.5 246 C95 256 88 266 78 269.6 C72 271 68 268 69.5 264" stroke="#fff" stroke-width="6.6"/>
<path d="M98.5 232 C100 240 98 250 93 258" stroke="#fff" stroke-width="7.5"/>
<path d="M87 231.7 L75.5 265" stroke="#fff" stroke-width="8.5"/>
<path d="M70 250.4 L88 248.4" stroke="#fff" stroke-width="6"/>
<path d="M104 247 L100.5 265.5" stroke="#fff" stroke-width="6.6"/>
<path d="M104.5 261 C110 258 114 253 112.5 250.5 C110 248.5 105 255 104 261 C103.5 266 108 267 113 262" stroke="#fff" stroke-width="5.8"/>
<path d="M111.5 244.5 L114.5 241 L117 244" stroke="#fff" stroke-width="4.2"/>
<path d="M116.5 252 L113.8 266 M115.2 258 C118 251 123 248 125.2 250 C126.5 253 123.5 262 124 265 C125 267.5 128 264 130.5 260" stroke="#fff" stroke-width="6.2"/>
<path d="M153.4 233.5 C158 228 166 232 175.5 224.4" stroke="#fff" stroke-width="7.5"/>
<path d="M176.5 226 C170 240 158 262 148 271 C143 275 140.5 268 142 258 C143 250 147 243 152 240" stroke="#fff" stroke-width="7.6"/>
<path d="M178.8 232 L164.8 266" stroke="#fff" stroke-width="7.2"/>
<path d="M168 256 C171 251 175 249 176.5 252 L173.8 266" stroke="#fff" stroke-width="6.2"/>
<path d="M182.5 252 L179.5 263 C179 267 182.5 267 186.5 263 L193 252 L190.5 266" stroke="#fff" stroke-width="6.2"/>
<path d="M193.5 250 C196.5 249 198 247 197.5 244.5" stroke="#fff" stroke-width="5.4"/>
<path d="M59.6 249.4 C63 236 80 224 92 224.4 C101 225 102 238 98.5 246 C95 256 88 266 78 269.6 C72 271 68 268 69.5 264" stroke="#1e1e1e" stroke-width="3.6"/>
<path d="M98.5 232 C100 240 98 250 93 258" stroke="#1e1e1e" stroke-width="4.5"/>
<path d="M87 231.7 L75.5 265" stroke="#1e1e1e" stroke-width="5.5"/>
<path d="M70 250.4 L88 248.4" stroke="#1e1e1e" stroke-width="3"/>
<path d="M104 247 L100.5 265.5" stroke="#1e1e1e" stroke-width="3.6"/>
<path d="M104.5 261 C110 258 114 253 112.5 250.5 C110 248.5 105 255 104 261 C103.5 266 108 267 113 262" stroke="#1e1e1e" stroke-width="2.8"/>
<path d="M111.5 244.5 L114.5 241 L117 244" stroke="#1e1e1e" stroke-width="1.2"/>
<path d="M116.5 252 L113.8 266 M115.2 258 C118 251 123 248 125.2 250 C126.5 253 123.5 262 124 265 C125 267.5 128 264 130.5 260" stroke="#1e1e1e" stroke-width="3.2"/>
<path d="M153.4 233.5 C158 228 166 232 175.5 224.4" stroke="#1e1e1e" stroke-width="4.5"/>
<path d="M176.5 226 C170 240 158 262 148 271 C143 275 140.5 268 142 258 C143 250 147 243 152 240" stroke="#1e1e1e" stroke-width="4.6"/>
<path d="M178.8 232 L164.8 266" stroke="#1e1e1e" stroke-width="4.2"/>
<path d="M168 256 C171 251 175 249 176.5 252 L173.8 266" stroke="#1e1e1e" stroke-width="3.2"/>
<path d="M182.5 252 L179.5 263 C179 267 182.5 267 186.5 263 L193 252 L190.5 266" stroke="#1e1e1e" stroke-width="3.2"/>
<path d="M193.5 250 C196.5 249 198 247 197.5 244.5" stroke="#1e1e1e" stroke-width="2.4"/>
<circle cx="105.2" cy="242.6" r="2.3" fill="#1e1e1e" stroke="#fff" stroke-width="1"/><circle cx="107.5" cy="273" r="1.5" fill="#1e1e1e"/>
</g>
<g fill="none" stroke-linecap="round" stroke-linejoin="round">
<path d="M55 446 C60 430 105 409 150 410 C176 412 182 430 168 443 C154 456 124 462 104 459" stroke="#fff" stroke-width="12.5"/>
<path d="M131 419 C118 442 96 470 75 491" stroke="#fff" stroke-width="14"/>
<path d="M185 419 C171 442 156 462 143 484" stroke="#fff" stroke-width="12"/>
<path d="M151 470 C160 456 174 449 177 456 C179 464 170 474 166 484" stroke="#fff" stroke-width="10.5"/>
<path d="M196 453 C184 453 181 476 193 480 C206 482 211 460 201 454 C213 452 221 448 226 442" stroke="#fff" stroke-width="10"/>
<path d="M205 427 C210 420 218 424 212 431 L208 436" stroke="#fff" stroke-width="6.6"/>
<path d="M55 446 C60 430 105 409 150 410 C176 412 182 430 168 443 C154 456 124 462 104 459" stroke="#1e1e1e" stroke-width="8.5"/>
<path d="M131 419 C118 442 96 470 75 491" stroke="#1e1e1e" stroke-width="10"/>
<path d="M185 419 C171 442 156 462 143 484" stroke="#1e1e1e" stroke-width="8"/>
<path d="M151 470 C160 456 174 449 177 456 C179 464 170 474 166 484" stroke="#1e1e1e" stroke-width="6.5"/>
<path d="M196 453 C184 453 181 476 193 480 C206 482 211 460 201 454 C213 452 221 448 226 442" stroke="#1e1e1e" stroke-width="6"/>
<path d="M205 427 C210 420 218 424 212 431 L208 436" stroke="#1e1e1e" stroke-width="2.6"/>
</g>
<rect x="45" y="585.9" width="301" height="6" fill="#fde800"/>
<rect x="45" y="591.8" width="301" height="52" fill="#ec1c24"/>
<ellipse cx="68.4" cy="616" rx="13.8" ry="16.4" fill="#fff" stroke="#7cc820" stroke-width="1.6"/>
<path d="M63.5 605 Q60 611 63 619 Q67 627 73.5 628.5 L75 625.5 L71 622 L69 624 Q65 620 64.5 613 L67 612 L66.5 606.5 Z" fill="#e81c24"/>
</g>
<g clip-path="url(#img)"><text x="59.70" y="389.10" font-family='"Liberation Serif"' font-weight="bold" font-style="normal" font-size="121.91" fill="#e81c24" textLength="46.58" lengthAdjust="spacingAndGlyphs" stroke="#fff" stroke-width="12" stroke-linejoin="round">B</text>
<text x="59.70" y="389.10" font-family='"Liberation Serif"' font-weight="bold" font-style="normal" font-size="121.91" fill="#e81c24" textLength="46.58" lengthAdjust="spacingAndGlyphs" stroke="#e81c24" stroke-width="8" stroke-linejoin="round">B</text>
<text x="117.33" y="389.10" font-family='"Liberation Serif"' font-weight="bold" font-style="normal" font-size="121.91" fill="#e81c24" textLength="42.27" lengthAdjust="spacingAndGlyphs" stroke="#fff" stroke-width="12" stroke-linejoin="round">Ú</text>
<text x="117.33" y="389.10" font-family='"Liberation Serif"' font-weight="bold" font-style="normal" font-size="121.91" fill="#e81c24" textLength="42.27" lengthAdjust="spacingAndGlyphs" stroke="#e81c24" stroke-width="8" stroke-linejoin="round">Ú</text>
<text x="171.68" y="389.10" font-family='"Liberation Serif"' font-weight="bold" font-style="normal" font-size="121.91" fill="#e81c24" textLength="51.79" lengthAdjust="spacingAndGlyphs" stroke="#fff" stroke-width="12" stroke-linejoin="round">N</text>
<text x="171.68" y="389.10" font-family='"Liberation Serif"' font-weight="bold" font-style="normal" font-size="121.91" fill="#e81c24" textLength="51.79" lengthAdjust="spacingAndGlyphs" stroke="#e81c24" stroke-width="8" stroke-linejoin="round">N</text>
<text x="267.07" y="332.30" font-family='"Liberation Serif"' font-weight="bold" font-style="normal" font-size="24.07" fill="#e81c24" textLength="57.39" lengthAdjust="spacingAndGlyphs" stroke="#fff" stroke-width="3.4" stroke-linejoin="round">CHẢ</text>
<text x="267.07" y="332.30" font-family='"Liberation Serif"' font-weight="bold" font-style="normal" font-size="24.07" fill="#e81c24" textLength="57.39" lengthAdjust="spacingAndGlyphs" stroke="#e81c24" stroke-width="1.0" stroke-linejoin="round">CHẢ</text>
<text x="258.75" y="359.80" font-family='"Liberation Serif"' font-weight="bold" font-style="normal" font-size="25.00" fill="#e81c24" textLength="74.10" lengthAdjust="spacingAndGlyphs" stroke="#fff" stroke-width="3.4" stroke-linejoin="round">LÒNG</text>
<text x="258.75" y="359.80" font-family='"Liberation Serif"' font-weight="bold" font-style="normal" font-size="25.00" fill="#e81c24" textLength="74.10" lengthAdjust="spacingAndGlyphs" stroke="#e81c24" stroke-width="1.0" stroke-linejoin="round">LÒNG</text>
<text x="256.19" y="389.60" font-family='"Liberation Serif"' font-weight="bold" font-style="normal" font-size="24.07" fill="#e81c24" textLength="79.81" lengthAdjust="spacingAndGlyphs" stroke="#fff" stroke-width="3.4" stroke-linejoin="round">CHẤM</text>
<text x="256.19" y="389.60" font-family='"Liberation Serif"' font-weight="bold" font-style="normal" font-size="24.07" fill="#e81c24" textLength="79.81" lengthAdjust="spacingAndGlyphs" stroke="#e81c24" stroke-width="1.0" stroke-linejoin="round">CHẤM</text>
<text x="260.16" y="440.80" font-family='"Liberation Sans"' font-weight="bold" font-style="normal" font-size="41.86" fill="#222" textLength="31.80" lengthAdjust="spacingAndGlyphs" stroke="#fff" stroke-width="6.199999999999999" stroke-linejoin="round">B</text>
<text x="260.16" y="440.80" font-family='"Liberation Sans"' font-weight="bold" font-style="normal" font-size="41.86" fill="#222" textLength="31.80" lengthAdjust="spacingAndGlyphs" stroke="#222" stroke-width="3.8" stroke-linejoin="round">B</text>
<text x="299.54" y="440.80" font-family='"Liberation Sans"' font-weight="bold" font-style="normal" font-size="41.86" fill="#222" textLength="32.34" lengthAdjust="spacingAndGlyphs" stroke="#fff" stroke-width="6.199999999999999" stroke-linejoin="round">Ò</text>
<text x="299.54" y="440.80" font-family='"Liberation Sans"' font-weight="bold" font-style="normal" font-size="41.86" fill="#222" textLength="32.34" lengthAdjust="spacingAndGlyphs" stroke="#222" stroke-width="3.8" stroke-linejoin="round">Ò</text>
<text x="261.83" y="488.40" font-family='"Liberation Sans"' font-weight="bold" font-style="normal" font-size="43.90" fill="#222" textLength="30.54" lengthAdjust="spacingAndGlyphs" stroke="#fff" stroke-width="6.199999999999999" stroke-linejoin="round">G</text>
<text x="261.83" y="488.40" font-family='"Liberation Sans"' font-weight="bold" font-style="normal" font-size="43.90" fill="#222" textLength="30.54" lengthAdjust="spacingAndGlyphs" stroke="#222" stroke-width="3.8" stroke-linejoin="round">G</text>
<text x="298.45" y="488.40" font-family='"Liberation Sans"' font-weight="bold" font-style="normal" font-size="43.90" fill="#222" textLength="34.20" lengthAdjust="spacingAndGlyphs" stroke="#fff" stroke-width="6.199999999999999" stroke-linejoin="round">À</text>
<text x="298.45" y="488.40" font-family='"Liberation Sans"' font-weight="bold" font-style="normal" font-size="43.90" fill="#222" textLength="34.20" lengthAdjust="spacingAndGlyphs" stroke="#222" stroke-width="3.8" stroke-linejoin="round">À</text>
<text x="57.18" y="536.05" font-family='"Liberation Sans"' font-weight="bold" font-style="normal" font-size="37.35" fill="#1e2a8c" textLength="186.62" lengthAdjust="spacingAndGlyphs" stroke="#fff" stroke-width="2.9" stroke-linejoin="round">CƠM RANG THẬP CẨM</text>
<text x="57.18" y="536.05" font-family='"Liberation Sans"' font-weight="bold" font-style="normal" font-size="37.35" fill="#1e2a8c" textLength="186.62" lengthAdjust="spacingAndGlyphs" stroke="#1e2a8c" stroke-width="0.5" stroke-linejoin="round">CƠM RANG THẬP CẨM</text>
<text x="57.47" y="573.60" font-family='"Liberation Serif"' font-weight="bold" font-style="normal" font-size="35.80" fill="#e81c24" textLength="183.43" lengthAdjust="spacingAndGlyphs" stroke="#fff" stroke-width="2.8000000000000003" stroke-linejoin="round">Trứng vịt lộn</text>
<text x="57.47" y="573.60" font-family='"Liberation Serif"' font-weight="bold" font-style="normal" font-size="35.80" fill="#e81c24" textLength="183.43" lengthAdjust="spacingAndGlyphs" stroke="#e81c24" stroke-width="0.2" stroke-linejoin="round">Trứng vịt lộn</text>
<text x="91.48" y="632.60" font-family='"Liberation Sans"' font-weight="bold" font-style="normal" font-size="46.37" fill="#fff" textLength="90.38" lengthAdjust="spacingAndGlyphs" stroke="#3a3a3a" stroke-width="1.8" stroke-linejoin="round">0355</text>
<text x="91.48" y="632.60" font-family='"Liberation Sans"' font-weight="bold" font-style="normal" font-size="46.37" fill="#fff" textLength="90.38" lengthAdjust="spacingAndGlyphs" >0355</text>
<text x="194.05" y="632.60" font-family='"Liberation Sans"' font-weight="bold" font-style="normal" font-size="46.37" fill="#fff" textLength="59.74" lengthAdjust="spacingAndGlyphs" stroke="#3a3a3a" stroke-width="1.8" stroke-linejoin="round">137</text>
<text x="194.05" y="632.60" font-family='"Liberation Sans"' font-weight="bold" font-style="normal" font-size="46.37" fill="#fff" textLength="59.74" lengthAdjust="spacingAndGlyphs" >137</text>
<text x="267.31" y="632.60" font-family='"Liberation Sans"' font-weight="bold" font-style="normal" font-size="46.37" fill="#fff" textLength="65.91" lengthAdjust="spacingAndGlyphs" stroke="#3a3a3a" stroke-width="1.8" stroke-linejoin="round">832</text>
<text x="267.31" y="632.60" font-family='"Liberation Sans"' font-weight="bold" font-style="normal" font-size="46.37" fill="#fff" textLength="65.91" lengthAdjust="spacingAndGlyphs" >832</text></g>
<circle cx="288.4" cy="592.4" r="26" fill="#fbfbfb" stroke="#3aa048" stroke-width="0.8"/>
<text x="270.65" y="581.00" font-family='"Liberation Sans"' font-weight="normal" font-style="normal" font-size="7.27" fill="#8a7a7a" textLength="34.58" lengthAdjust="spacingAndGlyphs" >SHAREFILE</text>
<text x="266.30" y="600.60" font-family='"Liberation Sans"' font-weight="bold" font-style="normal" font-size="23.69" fill="#a07070" textLength="43.47" lengthAdjust="spacingAndGlyphs" >PDF</text>
<text x="273.80" y="609.50" font-family='"Liberation Sans"' font-weight="normal" font-style="normal" font-size="9.45" fill="#8a7a7a" textLength="28.84" lengthAdjust="spacingAndGlyphs" >.com</text>
<g fill="#ee2a30"><circle cx="65.70" cy="253.18" r="1.6"/><circle cx="63.53" cy="254.80" r="1.6"/><circle cx="61.32" cy="253.24" r="1.6"/><circle cx="62.12" cy="250.66" r="1.6"/><circle cx="64.83" cy="250.62" r="1.6"/></g><circle cx="63.5" cy="252.5" r="1.2" fill="#e8a0a0"/>
<g fill="#ee2a30"><circle cx="201.70" cy="259.68" r="1.6"/><circle cx="199.53" cy="261.30" r="1.6"/><circle cx="197.32" cy="259.74" r="1.6"/><circle cx="198.12" cy="257.16" r="1.6"/><circle cx="200.83" cy="257.12" r="1.6"/></g><circle cx="199.5" cy="259" r="1.2" fill="#e8a0a0"/>
<rect x="28" y="196" width="8" height="8" fill="#000"/>
<rect x="190" y="196" width="8" height="8" fill="#000"/>
<rect x="352" y="196" width="8" height="8" fill="#000"/>
<rect x="28" y="424" width="8" height="8" fill="#000"/>
<rect x="352" y="424" width="8" height="8" fill="#000"/>
<rect x="28" y="652" width="8" height="8" fill="#000"/>
<rect x="190" y="652" width="8" height="8" fill="#000"/>
<rect x="352" y="652" width="8" height="8" fill="#000"/>
<rect x="36.5" y="204.5" width="3" height="3" fill="#fff" stroke="#000" stroke-width="1"/>
<rect x="348.5" y="204.5" width="3" height="3" fill="#fff" stroke="#000" stroke-width="1"/>
<rect x="36.5" y="648.5" width="3" height="3" fill="#fff" stroke="#000" stroke-width="1"/>
<rect x="348.5" y="648.5" width="3" height="3" fill="#fff" stroke="#000" stroke-width="1"/>
<path d="M192 426 L195.5 429.5 M195.5 426 L192 429.5" stroke="#223060" stroke-width="1"/>
<rect x="350" y="311" width="21" height="1" fill="#b4b4b4"/><rect x="350" y="492" width="21" height="2" fill="#cfcfcf"/>
</svg>
<svg width="993" height="953"><defs><radialGradient id="pbg" gradientUnits="userSpaceOnUse" cx="595" cy="540" r="390"><stop offset="0" stop-color="#1d4636"/><stop offset="0.5" stop-color="#15372d"/><stop offset="0.85" stop-color="#0f2a28"/><stop offset="1" stop-color="#0b2024"/></radialGradient><pattern id="stripe" width="3.6" height="3.6" patternUnits="userSpaceOnUse" patternTransform="rotate(45)"><rect width="3.6" height="1.4" fill="#0a1e20" fill-opacity="0.45"/></pattern><clipPath id="inr"><rect x="383" y="220" width="407" height="654" rx="17"/></clipPath></defs>
<rect x="372.5" y="191.5" width="429" height="697" rx="20" fill="#0b2a10" stroke="#c4c322" stroke-width="3"/>
<rect x="381.5" y="218.5" width="410" height="657" rx="18" fill="url(#pbg)"/>
<g clip-path="url(#inr)"><g fill="none" stroke="#2c5e46" stroke-width="1.1" stroke-opacity="0.6" stroke-linecap="round"><path d="M565 588 570 586 574 584 578 581 583 579 587 577 592 574 596 572 600 569 604 566 608 563 612 560 616 557 620 554 624 551 628 548 632 545 636 542 640 539 644 536 647 532 648 530 648 528 647 526 646 525 644 525 643 525 642 526 642 527 642 527 642 528 643 529 643 529 644 529 644 528 644 528 M641.8 527.5 q-2.8 1.5 -7.3 -6.4 M494 203 499 206 503 209 507 211 511 214 515 217 519 221 523 224 527 227 531 230 535 233 539 236 543 238 547 241 552 243 557 245 561 246 566 247 571 248 575 247 577 245 578 242 578 240 577 238 575 236 574 236 572 237 571 237 571 238 571 239 571 240 572 241 572 241 573 241 M511.0 214.4 q1.1 -4.8 4.2 -3.9 M574.7 246.7 q-2.7 7.4 6.2 -9.2 M556.7 244.5 q3.3 -7.8 -0.8 -0.3 M543.0 238.4 q-0.8 -4.9 5.6 -8.9 M651 281 646 283 642 286 638 288 633 291 629 293 625 296 621 299 616 301 612 304 608 306 603 309 599 311 595 314 590 316 586 319 582 322 581 324 581 325 581 327 582 328 583 329 585 328 585 328 586 327 586 326 586 326 586 325 585 325 585 325 584 325 584 326 M650.7 280.9 q1.6 -2.1 -1.1 11.0 M584.2 325.3 q5.3 -5.8 -2.7 3.1 M502 358 498 355 495 352 491 348 488 344 485 341 481 337 478 333 475 329 472 325 469 321 465 318 462 314 458 310 455 307 452 306 449 306 447 307 446 309 446 311 446 312 447 313 448 314 449 314 450 313 451 313 451 312 451 311 450 311 450 311 M449.9 310.7 q3.5 -6.9 -6.5 1.4 M450.8 311.4 q1.9 -6.8 -6.9 10.0 M698 248 694 251 690 254 686 257 682 260 678 263 675 267 671 271 668 274 665 279 662 283 660 287 657 291 657 294 657 297 659 298 661 299 663 299 664 298 665 297 665 296 665 295 664 294 664 294 663 294 662 294 662 294 662 295 M664.4 294.1 q-3.0 -7.5 2.4 -10.2 M689.6 253.8 q3.7 -2.9 12.0 -10.2 M662.8 299.0 q-2.1 -7.3 10.5 5.7 M421 869 418 873 416 877 414 882 412 887 411 891 410 896 409 901 408 906 408 911 409 916 409 921 411 926 412 931 414 935 417 939 420 944 423 948 426 951 430 955 433 956 436 956 438 954 439 952 439 951 439 949 438 948 436 947 435 947 434 948 434 949 434 949 434 950 434 950 435 951 M429.8 954.8 q1.6 -0.3 -6.5 4.8 M585 626 590 624 594 621 598 618 602 615 606 612 609 609 613 605 616 602 620 598 623 594 626 590 630 587 630 583 630 580 628 577 626 576 623 576 621 577 620 578 620 580 620 581 621 582 622 582 623 583 623 582 624 582 624 581 M609.3 608.7 q-1.8 1.3 -4.4 -8.7 M627.9 577.2 q-2.4 6.3 -11.0 -10.5 M801 770 805 774 809 777 812 780 816 784 820 787 823 791 827 794 830 798 833 802 836 806 838 811 841 815 843 819 845 824 847 828 849 833 851 838 852 843 853 847 854 852 855 857 856 862 856 867 856 872 856 877 855 882 854 885 851 886 849 887 847 886 845 885 845 883 845 882 845 881 846 880 847 880 848 880 849 880 849 881 849 882 849 882 M816.1 783.7 q3.0 -4.8 -0.6 -7.7 M801.2 770.4 q4.1 0.6 -11.1 -6.6 M855.9 862.2 q0.6 7.1 0.0 11.9 M434 789 433 784 431 780 429 775 427 770 425 766 423 761 420 757 417 753 415 749 412 744 409 740 406 736 403 733 400 729 396 725 393 721 390 717 387 713 384 712 382 712 380 713 379 715 379 716 379 717 380 718 381 719 382 719 383 719 383 718 383 717 383 717 383 717 382 716 M424.8 765.9 q7.6 0.6 7.0 -4.3 M432.5 784.3 q-2.4 -6.7 -1.4 1.2 M389.9 717.3 q-0.2 -7.5 7.4 -10.5 M430.8 779.6 q-5.2 -2.6 6.9 -8.6 M429 558 429 553 429 549 429 544 429 539 430 534 431 529 432 524 433 519 435 514 437 510 439 505 442 501 444 497 448 493 451 489 455 486 458 483 463 480 467 477 472 476 476 474 481 473 486 472 489 473 491 475 492 477 492 479 491 481 490 482 489 482 487 482 486 481 486 480 486 479 486 479 487 478 487 478 488 478 M428.9 553.5 q0.6 -7.3 10.0 1.1 M486.8 478.3 q-6.0 -6.5 -8.0 10.3 M490.0 481.8 q-1.4 7.3 10.2 -5.5 M488.5 482.1 q-0.1 -2.6 9.6 10.5 M774 564 778 567 782 570 786 574 790 577 794 579 798 582 803 585 807 587 812 589 816 591 821 593 826 594 830 593 833 591 834 589 834 586 833 584 832 582 830 582 829 582 827 583 827 584 827 585 827 586 827 586 828 587 829 587 M826.8 583.7 q-4.8 0.5 -1.5 -3.0 M829.7 593.3 q5.2 1.9 0.9 8.7 M833.4 583.8 q2.2 0.5 8.4 2.7 M746 361 746 356 746 351 746 346 746 341 747 337 748 332 749 327 750 322 752 317 753 312 755 308 757 303 759 299 761 294 764 290 766 285 769 281 772 277 775 273 777 269 780 265 783 261 786 257 790 253 793 249 797 246 800 245 803 245 805 246 807 248 807 250 807 252 805 253 804 254 803 254 802 253 801 253 801 252 801 251 802 251 802 250 M746.3 341.5 q-0.3 -7.6 6.3 2.7 M801.9 253.4 q-0.3 -5.0 -9.2 -7.9 M434 396 431 392 429 388 427 383 424 379 422 374 419 370 416 366 413 362 410 358 407 354 403 351 399 348 395 345 391 343 387 342 383 344 381 346 380 348 381 351 382 353 383 354 385 354 386 354 387 353 388 352 388 351 387 350 387 349 386 349 M426.8 383.1 q0.2 -7.8 9.4 7.2 M385.0 354.0 q6.0 6.5 10.6 1.7 M448 606 446 610 443 614 440 618 437 622 434 626 430 630 427 634 424 638 421 641 418 645 415 649 412 653 409 657 406 662 404 666 401 670 401 675 403 678 405 680 408 681 410 681 412 679 413 678 413 676 413 675 412 674 411 673 410 673 409 674 409 674 408 675 M406.2 661.6 q-3.6 7.4 -4.8 -6.8 M545 326 549 329 553 331 558 333 563 335 567 336 572 338 577 339 582 340 587 340 592 340 597 340 602 340 607 339 612 337 616 336 621 334 625 331 629 328 633 325 634 323 634 321 633 319 632 318 631 318 630 318 629 319 628 320 628 321 629 321 629 322 630 322 630 322 630 321 631 321 M562.7 334.7 q0.8 2.7 10.9 -2.7 M592.0 340.3 q-1.8 7.5 8.5 1.0 M558.1 332.8 q-1.1 -0.1 -5.2 -2.4 M633.0 324.8 q-2.2 -3.4 3.7 1.5 M490 697 489 702 488 707 488 712 488 717 489 722 489 727 491 732 492 737 494 741 496 746 498 751 500 755 503 759 505 764 508 768 511 769 513 770 516 769 517 767 518 766 518 764 517 763 516 762 515 762 514 762 513 763 513 763 513 764 513 765 514 765 M488.1 717.2 q7.7 5.1 2.5 -9.2 M517.3 767.4 q-1.3 -6.1 8.7 -3.4 M488.1 717.2 q-6.0 -0.9 4.0 -1.1 M492.1 736.7 q2.2 2.9 -3.3 5.9 M727 295 726 300 726 305 725 310 725 315 725 320 725 325 725 330 725 335 726 340 727 345 728 350 729 354 731 359 732 364 734 369 736 373 738 378 741 382 744 386 745 387 747 388 748 387 749 386 750 385 750 384 749 383 749 383 748 383 747 383 747 383 747 383 747 384 747 384 747 384 M724.7 324.9 q-4.4 -3.5 6.1 9.9 M435 363 440 362 445 362 450 361 455 360 460 359 465 358 470 358 474 357 479 357 484 357 489 357 494 357 499 357 504 358 509 358 514 359 519 360 522 362 524 365 524 368 523 370 522 371 520 372 518 372 517 371 516 370 516 369 516 368 517 367 518 367 518 367 519 367 M515.9 368.8 q2.5 1.3 -0.9 -4.2 M459.6 359.2 q-1.1 1.1 7.6 -0.9 M731 206 729 211 727 215 724 220 721 224 718 228 714 231 711 235 707 238 703 240 698 243 694 245 689 247 684 248 680 249 675 250 670 250 665 250 660 249 655 248 650 246 645 245 643 242 642 240 643 237 644 235 646 234 647 234 649 235 650 236 650 237 650 238 649 238 649 239 648 239 648 239 647 238 M642.5 239.5 q5.3 -7.6 4.2 2.0 M719 713 716 716 712 720 709 724 706 728 703 732 701 736 698 741 695 745 693 749 691 754 690 759 688 764 688 769 687 774 688 776 689 778 691 778 693 778 695 778 695 776 696 775 695 774 695 773 694 773 693 773 693 773 692 774 692 774 692 775 M691.2 754.1 q-6.7 3.8 9.6 -10.0 M646 300 646 295 646 290 646 285 647 280 647 275 647 270 648 265 649 260 650 255 651 250 653 246 655 241 657 236 659 232 662 228 665 226 668 226 671 227 672 229 673 231 673 232 672 234 671 235 670 235 668 234 668 234 667 233 667 232 668 232 668 231 M668.5 234.5 q-2.0 -6.6 -0.8 1.0 M374 451 379 451 384 451 389 451 394 451 399 450 404 449 409 448 413 446 418 444 423 442 427 440 431 438 436 435 440 432 444 429 448 426 452 423 456 420 459 417 463 413 466 409 470 406 473 402 476 398 478 394 481 389 481 386 481 384 479 382 477 381 475 381 474 382 473 383 473 385 473 386 473 386 474 387 475 387 476 387 476 386 476 386 M427.1 440.1 q6.3 -1.6 9.9 10.5 M476.0 386.0 q0.8 5.1 -0.5 -5.7 M478.5 393.7 q6.6 -2.5 1.1 11.0 M476.9 381.2 q5.8 -1.6 -6.8 -8.8 M720 877 721 873 723 868 725 863 727 859 729 854 732 850 735 846 739 843 742 839 746 836 750 833 754 830 759 828 764 827 768 825 773 824 778 824 783 824 788 824 793 825 798 826 803 827 808 828 812 830 814 832 815 834 814 835 814 837 812 837 811 837 810 837 810 837 809 836 809 835 810 835 810 834 811 834 811 834 811 834 M778.3 823.7 q1.8 0.4 9.4 4.6 M729.3 854.3 q7.3 1.4 8.6 -4.7 M754.4 830.5 q-1.3 6.7 -9.8 7.8 M456 577 451 577 446 576 441 576 436 577 431 578 426 579 422 581 417 583 413 585 409 588 405 591 401 594 397 598 394 602 391 606 388 610 386 614 384 619 382 623 381 628 380 633 380 638 379 643 379 648 380 653 381 655 383 657 385 657 387 657 388 655 388 654 388 653 388 652 387 651 386 651 386 651 385 652 385 652 385 653 385 653 M387.2 651.5 q4.0 7.3 6.1 1.3 M431.3 577.7 q-3.9 -4.8 5.6 -4.1 M386.1 614.1 q1.0 3.6 -4.0 7.8 M431.3 577.7 q-6.4 1.9 -8.8 3.1 M443 334 448 335 453 336 458 337 463 337 468 338 473 338 478 339 483 339 488 340 493 340 498 341 503 341 508 341 513 341 518 341 523 341 528 341 533 342 538 342 543 342 548 343 553 344 558 344 559 346 561 347 561 349 560 351 559 352 558 352 557 352 556 352 556 351 555 350 556 350 556 349 557 349 557 349 557 349 M559.2 351.8 q-6.3 -2.0 0.2 6.9 M472.8 338.4 q1.8 -5.5 6.4 9.7 M556.0 349.2 q-4.3 1.8 0.3 1.8 M452 848 457 848 462 848 467 848 472 849 477 849 482 849 487 850 491 850 496 851 501 851 506 852 511 852 516 852 521 853 526 853 531 854 536 854 541 855 546 855 551 856 556 856 561 857 566 857 571 858 576 859 581 859 584 858 587 856 588 854 588 851 587 849 585 848 583 848 582 848 581 849 581 850 581 851 581 852 582 852 582 852 583 852 M526.4 853.2 q4.1 -2.2 -8.0 2.3 M471.6 848.6 q-0.7 -1.5 6.8 10.3 M491.5 850.4 q-3.1 2.7 5.7 -2.8 M628 758 633 758 638 758 643 758 648 757 652 756 657 755 662 753 667 751 671 749 675 746 679 743 683 740 686 736 690 733 692 728 695 724 697 720 699 715 701 711 701 707 699 704 697 702 695 702 692 702 691 704 690 705 690 707 691 708 692 709 693 709 694 709 694 708 695 708 695 707 M691.7 708.7 q5.4 5.7 -2.2 -1.6 M662.0 753.4 q6.5 0.4 0.6 -1.6 M632.6 758.1 q-2.9 -7.1 5.4 9.6 M692.5 702.5 q1.6 4.0 -4.7 2.2 M394 286 390 288 385 290 380 292 376 294 371 296 366 298 362 300 358 303 354 305 350 308 345 311 341 314 337 317 333 320 329 323 325 326 321 329 317 332 315 332 313 332 312 331 311 329 311 328 312 327 313 326 314 326 314 326 315 327 315 327 315 328 315 328 315 328 314 329 M362.0 300.1 q6.1 1.2 -1.1 -4.9 M315.0 332.2 q-7.6 -5.2 -1.4 -1.2 M600 298 598 293 596 289 594 284 591 280 588 276 585 272 582 268 579 264 576 261 572 257 569 253 565 250 561 247 558 243 554 240 550 237 546 236 543 237 541 239 540 241 540 243 541 245 542 246 543 246 545 246 545 245 546 245 546 244 546 243 545 242 545 242 M553.7 240.2 q-4.9 6.1 -10.8 -9.5 M540.0 240.8 q7.4 -3.6 -1.9 9.1 M513 864 514 859 515 854 515 849 516 844 517 839 518 835 518 830 519 825 520 820 520 815 520 810 521 805 521 800 521 795 522 793 524 791 526 791 528 792 529 792 529 794 529 795 529 796 528 796 527 796 527 796 526 796 526 795 526 795 526 795 M519.0 824.6 q-5.9 2.7 -0.9 -10.2 M526.1 794.5 q0.5 0.5 -10.9 2.4 M490 374 492 369 493 364 494 360 494 355 495 350 495 345 495 340 494 335 494 330 493 325 492 320 490 315 489 310 487 306 486 301 484 296 482 294 479 294 477 294 476 295 475 297 475 298 475 299 476 300 477 300 478 300 478 300 479 299 479 299 479 298 478 298 M492.9 364.5 q0.3 0.1 8.3 4.4 M491.7 319.9 q1.5 4.3 -9.3 -1.5 M478.6 299.3 q0.8 -3.9 5.2 5.3 M483.6 296.3 q-0.2 -4.5 1.9 -0.0 M379 614 378 609 376 604 375 600 374 595 372 590 370 586 368 581 365 577 363 572 360 568 357 564 354 560 351 556 347 553 344 549 340 546 336 543 332 540 328 538 323 535 318 534 314 532 309 532 304 531 299 531 296 532 295 534 294 536 295 538 296 539 297 539 298 539 299 539 300 538 300 538 300 537 299 536 299 536 298 536 298 536 M296.8 539.4 q3.1 5.3 6.9 -10.5 M296.4 532.2 q-0.5 3.2 4.9 11.0 M420 724 416 721 412 719 408 716 403 714 399 712 394 710 389 709 384 707 380 706 375 705 370 705 365 704 360 703 355 702 350 701 345 701 340 700 335 699 330 698 325 697 320 697 315 696 310 696 308 695 307 693 307 691 307 689 308 688 309 688 311 688 311 688 312 689 312 690 312 690 312 691 311 691 311 691 310 691 M307.1 692.7 q1.4 7.9 5.7 1.6 M310.7 691.0 q6.8 -5.2 8.6 10.5 M458 463 463 464 468 466 473 468 477 469 482 471 487 473 491 475 496 477 500 479 505 482 509 484 513 486 518 489 522 491 527 493 531 494 534 492 536 490 537 487 537 485 536 483 534 482 532 482 531 482 530 483 530 484 530 485 530 486 531 486 531 487 M530.8 493.7 q-5.1 -3.8 -2.6 10.2 M683 386 680 390 677 394 674 399 671 403 669 407 666 411 664 416 662 421 660 425 659 430 657 435 656 440 655 445 655 450 655 455 655 460 655 465 657 469 658 474 660 479 662 483 665 487 668 491 672 495 675 498 679 501 683 502 686 501 688 500 689 497 689 495 688 494 687 493 686 492 684 492 684 493 683 494 683 495 683 495 684 496 684 496 M655.4 444.6 q5.4 0.6 -1.2 -8.7 M687.1 492.6 q5.9 -4.4 -5.0 -3.7 M459 228 464 229 469 230 474 232 479 233 483 235 488 237 492 239 497 242 501 245 504 248 508 252 511 256 514 260 517 264 519 269 521 273 523 278 525 282 526 287 528 292 530 297 529 299 528 302 526 303 524 303 522 302 521 301 521 300 521 299 521 298 522 298 523 297 524 298 524 298 524 298 524 299 M504.5 248.3 q-2.4 3.4 0.5 5.8 M521.3 301.4 q4.9 -0.3 -5.8 8.5 M526.5 287.0 q3.2 -7.6 -2.6 -3.3 M478.8 233.1 q6.6 -3.6 -2.9 8.3 M497 699 501 696 504 692 507 688 510 684 513 680 515 675 517 671 519 666 521 662 523 657 525 652 526 647 525 645 524 644 523 643 521 643 520 643 519 644 519 645 519 646 520 647 520 647 521 647 521 647 522 647 522 646 522 646 M519.2 645.1 q0.7 1.8 -10.5 -10.4 M570 512 575 511 580 510 585 509 590 507 595 506 599 504 604 502 609 500 613 498 617 495 621 492 625 490 629 486 633 483 637 480 641 476 644 473 648 469 651 466 654 462 658 458 661 455 665 451 668 448 669 444 669 441 667 438 665 437 663 437 661 437 659 438 659 440 659 441 660 442 660 443 661 443 662 443 663 442 663 442 M669.2 443.9 q3.0 7.4 7.8 -8.2 M663.0 441.8 q3.0 4.9 -5.0 -2.0 M527 664 522 664 517 663 512 663 507 662 502 661 498 659 493 657 489 654 485 651 481 648 477 644 474 641 471 637 469 632 466 628 464 623 463 619 463 615 464 612 467 611 469 610 471 611 473 612 473 614 473 615 473 616 472 617 471 617 470 617 469 617 469 616 469 615 M464.2 623.3 q3.5 -4.0 5.2 -4.2 M469.2 610.2 q5.7 -4.7 1.5 -8.9 M472.8 616.2 q2.3 -6.0 5.8 -5.5 M480.9 648.0 q-6.0 -2.0 4.1 -6.5 M446 210 441 207 437 204 433 201 430 198 426 194 422 190 419 187 417 182 414 178 412 174 409 169 407 165 406 160 404 155 403 150 401 146 400 141 399 136 398 131 397 126 397 121 396 116 395 111 395 106 394 101 394 96 394 91 396 87 398 85 401 84 404 85 406 86 407 88 408 90 407 91 406 93 405 93 404 93 403 92 402 92 402 91 402 90 M405.6 160.0 q0.7 4.8 -8.5 -7.8 M422.5 190.5 q0.9 6.3 9.1 -1.6 M413.9 178.2 q-2.8 -7.7 1.6 -8.6 M402.2 91.5 q-1.6 -2.8 -10.1 -7.2 M610 588 613 592 616 595 620 599 624 602 628 605 632 607 637 609 641 611 646 613 651 614 656 614 661 615 666 614 671 614 676 613 681 611 685 609 690 607 694 604 698 601 702 598 705 595 709 591 712 587 713 584 712 582 711 580 709 578 707 578 706 579 705 580 704 581 704 582 705 583 706 584 706 584 707 584 707 583 708 583 M685.2 609.3 q-2.3 4.1 -4.6 0.3 M368 346 372 344 377 343 382 341 386 339 391 337 396 335 400 333 405 331 410 329 414 328 419 326 424 325 429 323 434 322 438 321 443 320 448 320 453 319 458 318 463 317 467 318 469 321 470 323 470 326 469 328 468 329 466 330 464 329 463 328 463 327 463 326 463 325 464 325 464 325 465 325 M464.4 329.3 q-2.3 -3.5 9.7 -4.3 M395.6 335.0 q-3.8 -4.6 -7.7 -10.9 M404.9 331.2 q0.7 2.9 -7.7 -9.5 M427 443 423 446 418 448 414 451 410 454 407 458 403 461 400 465 397 469 394 473 391 477 389 482 386 486 384 490 382 495 380 499 378 504 377 509 375 514 374 519 373 524 374 526 375 527 377 528 378 528 379 528 380 527 381 526 380 525 380 524 379 524 379 524 378 524 378 524 378 525 378 525 M377.7 524.2 q7.8 -5.6 3.2 -2.9 M414.3 451.2 q-4.6 1.9 9.3 8.6 M380.6 525.6 q0.1 1.1 -9.3 8.1 M671 515 669 510 666 506 663 502 660 498 658 494 655 490 651 486 648 482 645 478 641 475 638 471 635 467 631 464 628 460 624 456 621 453 618 449 614 445 614 441 614 438 616 435 618 434 621 434 623 435 624 436 624 438 624 439 624 440 623 441 622 441 621 441 620 440 620 439 M620.8 440.5 q-6.2 -5.0 10.2 7.0 M644.8 478.3 q5.3 4.8 0.3 11.8 M392 804 391 799 389 794 388 790 386 785 384 780 382 776 380 771 377 767 375 762 372 758 369 754 366 750 363 746 360 742 357 739 353 735 350 731 347 727 344 723 341 719 338 715 335 711 331 708 328 704 326 703 324 703 323 704 322 705 321 707 322 708 322 709 323 709 324 709 325 709 325 708 325 708 325 707 325 707 324 707 M324.5 706.6 q-1.8 5.6 2.8 9.6 M385.9 784.8 q-6.6 2.4 0.8 -4.4 M791 873 786 871 782 869 778 866 774 862 771 859 767 855 764 851 762 847 760 842 758 838 756 833 754 828 753 824 751 819 750 814 749 809 748 804 747 799 745 797 743 796 741 796 740 797 739 798 739 799 739 801 739 801 740 802 741 802 742 802 742 801 742 801 742 800 742 800 M745.2 797.4 q4.3 -4.8 -10.3 -5.6 M739.0 798.2 q5.1 -1.5 -1.0 0.2 M767.4 855.0 q-2.5 3.3 -6.4 1.9 M490 806 489 810 487 815 486 820 483 824 481 829 478 833 475 837 472 841 469 845 466 848 462 852 458 855 454 858 450 861 446 864 442 867 438 869 433 871 428 873 424 875 419 877 414 879 411 878 408 876 406 874 406 871 406 869 408 867 409 867 411 867 412 867 413 868 413 870 413 870 412 871 412 871 411 871 M412.9 870.4 q2.5 -0.7 -7.0 7.0 M370 221 366 218 362 215 358 212 355 208 351 205 348 201 344 198 341 194 338 190 334 187 331 183 327 179 324 176 320 172 317 169 313 166 309 162 305 160 301 157 296 154 292 152 288 150 283 147 279 145 274 143 270 140 266 138 264 136 264 134 264 132 265 131 266 131 268 131 268 131 269 132 269 133 269 133 269 134 268 134 268 134 267 134 267 134 M370.2 221.0 q-5.3 2.4 3.0 5.8 M476 763 476 758 475 753 475 748 475 743 475 738 476 733 477 728 477 723 479 718 480 713 481 709 482 704 484 699 485 697 487 697 489 697 490 698 491 699 491 700 491 701 491 702 490 702 489 702 489 702 488 701 488 701 488 700 488 700 M475.2 743.0 q2.6 0.2 -4.6 -3.5 M476.6 728.1 q-4.1 -1.4 -10.7 -6.8 M565 587 560 588 555 589 550 590 545 590 540 590 535 589 530 588 525 587 521 585 516 583 512 581 507 579 503 576 501 573 501 570 502 567 504 565 506 565 508 565 509 566 510 567 510 568 510 569 509 570 508 570 508 570 507 570 507 569 M520.6 585.4 q0.5 -7.5 -9.4 -4.8 M503.7 565.3 q2.3 5.6 -10.9 -2.0 M398 381 402 384 405 388 408 392 411 396 414 400 416 405 417 410 418 415 419 419 420 424 420 429 419 434 419 439 418 444 416 449 415 454 413 458 411 460 410 460 408 460 407 459 406 458 406 457 406 456 407 456 408 455 408 456 409 456 409 456 409 457 409 457 409 457 M419.7 424.4 q0.4 0.8 -2.4 -6.7 M407 458 405 463 403 467 401 472 399 476 397 481 396 486 394 490 392 495 390 500 388 504 387 509 385 514 383 518 381 523 380 528 380 531 381 533 383 535 385 535 387 534 388 533 389 532 389 531 388 530 388 529 387 529 386 529 385 530 385 530 385 531 M405.3 462.7 q5.7 -4.6 2.1 7.4 M385.2 530.5 q-1.2 5.8 -2.3 -5.1 M388.3 533.3 q-6.4 -1.7 -6.6 -6.0 M378 304 380 308 383 312 386 316 389 320 392 324 396 328 399 331 403 335 406 338 410 341 414 344 418 347 422 350 426 353 431 356 435 358 439 359 442 358 444 356 445 353 445 351 444 349 442 348 441 348 439 348 438 349 438 350 438 351 438 352 439 352 440 352 M392.2 323.9 q-1.0 4.0 -2.9 -1.3 M438.0 349.9 q4.8 -0.9 9.5 5.5 M736 864 733 868 730 871 726 875 722 878 718 881 714 884 710 887 706 889 701 892 697 894 692 896 688 898 683 900 679 902 674 904 669 905 664 907 660 908 655 909 650 910 645 910 640 911 635 911 631 909 629 907 628 904 629 901 630 899 632 898 634 898 635 899 636 900 637 901 636 902 636 903 635 903 635 903 634 903 M687.9 898.1 q-7.8 5.2 3.6 -3.0 M636.6 900.7 q2.9 -0.8 2.1 -0.9 M634.5 903.2 q-5.6 3.3 -2.5 -9.8 M582 639 579 643 576 647 573 651 570 655 567 659 564 663 561 667 558 671 555 675 552 679 550 684 548 688 547 690 548 692 550 693 551 694 553 694 554 693 554 692 554 691 554 690 553 690 553 690 552 690 552 690 552 690 552 691 M554.0 690.3 q-3.1 5.6 -11.2 4.8 M617 583 615 587 612 592 610 596 608 601 606 605 605 610 603 615 602 620 601 625 600 630 600 635 600 640 599 645 599 650 599 655 598 660 598 665 598 669 597 674 596 679 595 684 594 689 593 694 592 699 592 704 591 709 590 714 591 716 592 717 594 718 595 718 597 717 597 716 597 715 597 714 597 714 596 714 595 714 595 714 595 714 594 715 595 715 M608.2 600.7 q-3.6 -3.4 -5.3 0.2 M592.4 699.0 q-5.4 5.8 8.5 2.6 M597.4 715.3 q4.8 -5.4 6.0 4.9 M596.0 713.5 q4.4 -3.8 -10.7 10.5 M525 746 526 751 526 756 526 761 526 766 527 771 527 776 527 781 526 786 526 791 526 796 525 801 524 806 524 811 523 816 522 821 521 826 520 831 517 834 514 836 511 836 509 835 507 833 507 831 507 829 508 828 509 827 510 827 511 827 512 828 512 829 512 829 512 830 M526.5 766.3 q-5.7 -1.4 -8.6 9.6 M798 876 803 874 807 872 812 869 816 867 821 865 825 863 830 861 834 859 839 857 844 855 848 853 853 851 858 849 862 848 867 846 872 844 876 843 881 841 883 839 883 837 883 836 882 834 881 834 880 833 879 834 878 834 878 835 878 836 878 836 879 837 879 837 880 837 880 836 M878.0 835.0 q7.0 -7.7 -0.2 2.2 M883.3 837.4 q6.9 -6.6 0.5 11.0 M377 278 381 274 384 271 388 267 392 265 397 262 401 260 406 258 410 256 415 254 420 253 425 252 430 252 433 253 434 255 435 257 435 259 434 260 433 261 431 261 430 261 429 260 429 260 429 259 429 258 430 258 431 258 431 258 M405.6 257.6 q-2.5 -7.8 6.5 -5.7 M432.6 261.3 q-2.1 3.6 0.5 -3.6 M430.2 261.1 q-4.2 6.1 -7.8 -8.4 M476 532 477 528 478 523 479 518 479 513 480 508 480 503 481 498 480 493 480 488 479 483 479 478 478 473 477 468 475 463 474 458 472 457 470 456 468 456 467 457 466 458 466 459 466 460 467 461 467 461 468 461 469 461 469 461 469 460 469 460 469 459 M477.3 527.5 q-1.4 7.8 -3.1 -3.4 M469.3 459.6 q-6.8 5.4 12.0 -1.9 M663 361 668 361 673 360 678 360 683 359 688 358 692 358 697 357 702 356 707 355 712 354 717 352 721 350 726 348 730 346 735 343 739 340 742 337 745 333 749 329 751 325 753 320 755 315 757 311 758 306 759 301 759 296 758 293 757 292 755 291 753 291 751 292 750 293 750 294 750 295 751 296 752 296 753 296 753 296 754 296 754 295 754 295 M742.1 336.5 q-5.7 5.9 11.6 5.4 M665 285 663 290 661 294 658 299 656 303 653 307 650 311 648 316 645 320 642 324 639 328 636 332 633 336 630 339 626 343 622 346 618 349 615 350 612 349 611 347 610 346 610 344 610 342 611 341 613 341 614 341 614 342 615 342 615 343 615 344 614 344 614 344 M610.3 342.2 q1.6 5.5 -0.8 -7.4 M614.3 344.3 q7.6 -7.6 6.3 -2.4 M658.4 298.7 q-3.5 -7.3 -2.4 7.7 M663.1 289.9 q-7.6 -1.2 11.1 2.7 M391 217 389 221 386 226 384 230 382 235 380 239 378 244 376 249 375 253 373 258 372 263 372 268 371 273 371 278 370 283 370 288 370 293 371 298 371 303 371 308 371 313 372 318 372 323 372 328 372 333 371 338 371 343 370 348 368 351 365 352 363 353 360 352 359 350 358 349 358 347 359 346 360 345 361 345 362 345 363 346 363 346 363 347 363 348 M370.9 303.0 q2.2 2.1 -11.9 -0.5 M376.2 248.7 q-0.0 6.8 0.3 -2.9 M391.2 217.1 q2.6 -1.6 -0.1 8.3 M617 239 615 244 613 248 611 253 609 257 608 262 606 267 605 272 604 277 604 282 604 287 605 292 605 297 607 299 609 300 611 300 613 300 614 298 615 297 614 296 614 295 613 294 612 294 611 294 611 295 611 295 611 296 611 296 M613.0 248.2 q-0.2 -0.3 -5.0 8.2 M588 438 590 442 591 447 593 452 595 456 596 461 597 466 598 471 599 476 599 481 599 486 599 491 599 496 598 501 597 506 596 511 594 515 593 520 591 525 589 529 586 533 583 537 580 541 576 545 572 548 568 551 564 552 561 551 559 549 557 546 557 544 558 542 560 541 561 541 563 541 564 542 564 543 564 543 564 544 563 545 563 545 M594.4 515.4 q-5.0 3.1 6.2 11.6 M563.4 544.8 q2.4 4.0 4.1 -1.5 M564.3 551.7 q4.3 4.6 9.0 1.7 M785 644 780 644 775 645 770 645 765 646 760 648 755 649 751 651 746 652 741 654 736 656 732 658 727 660 723 663 719 665 714 668 710 670 706 673 703 673 701 672 700 671 699 669 699 668 700 667 701 666 702 666 703 666 704 667 704 667 704 668 704 668 703 669 703 669 M703.8 667.8 q4.4 -2.7 -5.3 0.5 M703.2 668.7 q-6.9 -6.5 4.9 -10.8 M714.5 667.6 q-3.4 6.9 -3.3 -1.6 M541 436 546 435 551 433 555 432 560 430 565 429 570 427 575 426 579 425 584 424 589 422 594 421 599 420 604 419 609 418 614 418 619 417 624 417 629 418 634 418 639 418 644 419 649 419 654 420 659 421 663 422 666 424 667 426 667 429 667 431 665 432 663 433 662 433 661 432 660 431 660 430 660 429 661 428 662 428 662 428 663 428 M623.7 417.5 q4.3 2.4 4.9 -1.0 M667.4 426.3 q7.6 7.2 -7.3 -5.9 M555.4 431.7 q0.8 -8.0 -0.8 2.8 M751 891 746 891 741 890 736 890 731 889 726 888 722 887 717 885 712 884 707 882 702 881 698 879 693 877 689 875 684 873 680 871 677 868 677 865 677 862 679 860 681 859 683 859 684 860 685 861 686 862 685 863 685 864 684 864 683 864 683 864 682 864 M682.6 864.2 q7.7 -6.1 -4.7 -6.7 M684.1 864.4 q3.5 1.2 5.7 8.9 M721.5 886.6 q-3.9 4.7 5.0 -1.2 M527 503 522 505 517 506 512 508 508 510 503 512 499 514 494 517 490 519 485 521 481 523 476 525 472 527 467 529 462 531 457 532 453 533 448 534 443 535 438 535 433 535 428 534 426 533 424 531 424 529 425 528 426 527 427 526 428 526 429 527 429 527 430 528 429 529 429 529 429 529 428 530 428 529 M428.5 529.5 q1.4 3.6 1.5 -2.6 M738 439 734 441 730 444 726 447 721 449 717 452 713 455 709 458 705 461 702 465 698 468 695 472 691 476 688 480 685 484 683 488 680 492 678 496 675 501 675 503 676 505 678 506 679 507 681 506 682 506 682 505 682 504 682 503 681 503 681 502 680 502 680 503 679 503 679 503 M705.2 461.3 q4.0 1.4 7.4 0.2 M373 725 370 729 366 733 363 736 359 739 354 742 350 744 345 746 341 748 336 749 331 750 326 751 321 752 316 752 311 752 306 752 301 752 296 752 293 754 291 756 291 758 291 761 292 762 294 763 295 763 297 762 297 762 298 761 298 760 297 759 297 759 296 759 295 759 M294.0 762.9 q5.3 -1.9 -5.4 -3.4 M295.4 758.8 q-7.6 -2.0 3.8 -8.4 M502 806 507 803 511 801 515 798 519 795 523 792 527 789 530 785 534 782 537 778 540 774 543 770 546 766 549 762 551 757 551 753 550 750 548 748 545 747 543 747 541 748 540 750 540 751 540 753 541 754 542 754 543 754 544 754 544 753 545 752 M543.9 753.7 q-0.4 -3.0 -1.4 7.5 M545.3 747.0 q-3.5 0.1 -3.4 1.2 M632 422 629 418 627 413 625 409 622 404 620 400 619 395 618 390 616 385 616 380 615 375 615 370 615 365 615 360 616 355 617 350 618 346 620 341 622 336 625 332 628 328 631 324 634 320 638 317 642 314 645 313 647 314 649 315 650 317 650 319 650 320 649 321 647 322 646 322 645 321 645 320 645 320 645 319 646 318 646 318 M622.4 404.3 q4.7 -1.3 9.8 2.7 M645.0 320.3 q-3.6 2.7 4.7 -4.3 M650.3 318.9 q4.5 -4.5 -11.5 -6.0 M632.1 421.7 q-4.0 -3.3 -5.7 -11.6 M502 611 501 616 501 621 501 626 502 631 502 636 503 641 504 646 504 651 505 656 506 661 507 665 508 670 509 675 510 680 512 685 513 690 514 695 516 699 517 704 519 709 520 714 522 718 524 723 526 727 529 732 532 734 536 735 538 734 541 732 542 730 542 728 541 726 539 725 538 725 537 725 536 726 536 727 535 727 536 728 536 729 M524.3 722.8 q3.9 -0.7 -2.5 1.3 M535.5 726.6 q7.9 6.7 8.1 -10.2 M511.8 684.9 q0.5 -2.6 -1.8 1.3 M501.3 620.9 q5.8 0.3 11.8 -10.2 M807 209 810 213 813 217 817 221 820 225 823 228 826 232 830 236 833 240 836 244 839 247 843 251 846 255 849 259 852 263 855 267 859 270 862 274 865 278 868 282 872 285 875 289 879 292 883 293 886 293 888 291 890 289 890 287 889 285 888 284 887 283 885 283 884 284 884 285 883 286 884 287 884 287 885 287 M842.7 251.1 q7.3 0.9 -9.6 3.3 M858.7 270.3 q-5.0 4.7 -6.6 -8.0 M879.1 292.3 q-7.5 4.8 -8.6 -7.2 M376 313 371 314 366 314 361 314 356 314 351 314 347 313 342 312 337 311 332 309 327 307 323 305 319 302 314 300 310 297 306 294 303 290 299 287 298 283 298 279 300 277 302 275 305 275 307 275 308 277 309 278 309 280 308 281 307 281 306 282 305 281 305 281 305 280 M356.4 314.3 q-4.0 3.1 -2.9 10.5 M660 283 657 280 654 276 651 272 648 268 645 264 642 260 639 256 636 252 632 248 629 245 625 241 622 238 618 235 614 231 610 228 606 225 602 222 598 219 594 216 590 214 585 211 581 209 577 206 573 206 571 207 569 209 569 211 569 213 570 215 571 215 572 216 573 215 574 214 574 214 574 213 574 212 574 212 573 212 M635.7 252.0 q-5.0 -0.5 8.3 2.9 M696 728 695 723 694 719 692 714 689 710 686 705 683 701 680 698 676 694 672 691 668 689 664 686 659 684 655 682 650 681 645 680 640 679 635 679 630 680 625 681 620 682 616 683 611 686 607 688 603 691 599 694 598 697 598 699 599 701 600 703 602 703 603 703 604 702 605 701 605 700 605 699 604 698 603 698 603 698 602 699 602 699 M625.1 680.5 q-7.4 1.8 -7.4 -3.9 M696.4 728.2 q-1.2 4.6 8.4 -5.0 M630.0 679.7 q7.0 -5.9 -2.8 5.0 M606.7 688.1 q6.8 -6.3 3.7 -5.7 M496 370 501 369 506 369 511 368 516 367 521 367 525 365 530 364 535 362 540 361 544 358 549 356 553 354 557 351 562 349 566 346 570 344 574 341 579 338 583 335 586 332 590 329 594 325 597 322 598 318 598 315 596 313 594 312 592 312 591 312 589 313 589 315 589 316 590 317 590 317 591 317 592 317 592 317 593 316 M592.4 316.8 q-3.5 -2.8 2.6 -7.4 M592.4 311.5 q2.7 5.8 -11.3 -7.5 M589.0 315.8 q3.1 -5.0 8.4 -7.2 M591.2 317.5 q1.7 3.7 -9.2 4.5 M643 645 638 646 634 647 629 648 624 648 619 649 614 650 609 650 604 651 599 651 594 651 589 652 584 652 581 651 579 649 578 646 579 644 580 642 581 642 583 641 584 642 585 643 585 644 585 645 585 645 584 646 583 646 583 646 M583.9 645.6 q2.5 7.3 -9.0 2.4 M584.6 642.7 q-7.4 -1.4 -7.6 5.5 M619 668 624 667 628 665 633 663 637 661 642 658 646 656 650 653 654 650 658 647 662 643 665 640 668 636 670 631 671 629 670 627 669 626 668 626 666 626 665 627 665 627 665 628 665 629 665 629 666 630 666 630 667 629 667 629 667 629 M637.4 660.9 q-6.5 3.2 8.6 10.0 M664.9 639.6 q2.7 3.7 9.2 1.3 M666.4 626.0 q-4.1 -7.1 0.9 -4.2 M561 399 557 401 553 403 548 406 544 408 540 411 536 414 532 417 528 420 524 423 520 427 517 430 513 434 510 438 507 442 504 446 501 450 499 454 496 458 494 463 493 467 494 470 496 472 499 473 501 473 503 472 504 470 504 469 504 467 503 466 502 466 501 466 500 466 500 467 500 467 M531.7 416.9 q-7.3 -1.6 -10.1 4.3 M430 304 426 306 421 308 417 310 413 313 408 315 404 317 399 319 395 322 390 324 386 327 382 329 378 332 373 335 369 338 365 341 361 344 358 347 354 350 350 354 347 357 344 361 340 365 338 369 335 373 335 377 336 380 337 382 340 383 342 382 343 381 344 380 344 379 344 378 343 377 342 376 342 376 341 377 341 377 340 378 M334.5 376.9 q6.4 4.7 -7.0 -10.9 M340.6 377.2 q-5.1 -0.1 -4.6 -2.0 M412.5 312.5 q-1.3 -5.5 -1.0 -7.7 M417.0 310.3 q3.6 6.5 7.1 -11.0 M588 297 584 295 579 294 574 292 570 289 565 287 561 285 557 282 553 279 549 276 545 273 541 269 538 266 534 262 531 259 527 255 524 251 521 247 518 243 515 240 512 236 509 232 506 227 503 223 500 219 498 215 497 212 498 209 500 207 502 206 504 206 506 207 507 208 507 210 507 211 506 212 505 212 504 212 504 212 503 211 503 211 M497.2 211.6 q-4.2 7.7 9.9 6.8 M556.9 281.9 q2.4 -2.4 -3.6 8.3 M548.8 276.1 q5.5 -1.8 3.4 -6.0 M511.7 235.6 q1.1 7.5 -7.8 9.9 M627 642 626 637 625 632 625 627 625 622 625 617 625 612 625 607 626 602 628 597 629 592 631 588 634 584 637 579 640 575 643 572 647 568 651 565 655 563 659 560 664 558 667 557 670 559 672 561 673 563 673 565 672 567 670 568 669 568 667 568 667 567 666 566 666 565 667 564 667 564 668 564 M643.2 571.8 q-0.7 1.6 -4.3 -11.2 M551 445 556 445 561 444 566 443 571 442 576 441 581 440 585 438 590 437 595 435 599 433 604 431 608 428 613 426 617 423 621 421 625 418 630 415 634 413 638 411 643 408 647 406 652 404 656 402 661 400 665 398 670 396 674 396 677 398 679 400 679 402 678 405 677 406 676 407 674 407 673 406 672 405 672 404 672 403 672 403 673 402 674 402 M575.7 440.7 q5.1 3.9 8.7 11.1 M638.5 410.6 q-6.2 -5.8 -7.9 1.8 M673.1 402.5 q4.5 -2.7 8.3 7.3 M551.2 445.4 q-0.1 -1.9 9.7 -6.9 M519 650 516 645 514 641 512 636 510 632 508 627 505 623 503 618 501 614 499 609 497 605 494 600 492 596 490 591 488 587 488 583 489 581 491 579 494 578 496 579 497 580 498 581 498 583 497 584 497 585 496 585 495 585 494 584 494 584 494 583 M495.0 584.8 q2.6 -1.0 4.9 8.9 M488.1 583.4 q7.0 -4.7 -9.1 -8.1 M503.3 618.3 q6.6 -6.5 -11.9 8.2 M494.0 583.3 q-2.4 -4.1 3.6 5.3 M710 503 705 505 700 506 695 507 691 509 686 510 681 511 676 513 671 514 667 516 662 518 658 520 654 523 649 526 645 529 642 532 638 536 635 540 634 542 635 544 636 546 638 547 639 547 640 547 641 546 642 545 642 544 641 543 640 543 640 543 639 543 639 543 639 544 M695.5 507.3 q1.4 5.4 -2.8 -7.8 M681.0 511.2 q-2.5 -0.9 6.4 -7.5 M728 854 730 859 732 864 734 868 736 873 738 877 741 881 744 885 747 889 750 893 753 897 757 900 761 904 765 907 769 909 774 912 778 914 783 915 788 917 792 918 795 918 796 917 797 915 797 914 796 912 796 912 795 911 794 912 793 912 793 913 793 913 793 914 793 914 794 914 794 914 M764.9 906.6 q-6.6 -1.4 7.4 -11.2 M787.6 916.8 q-3.4 -3.3 -1.9 10.6 M794.6 911.4 q-6.9 -4.1 5.6 -3.8 M465 244 469 245 474 247 479 248 484 249 489 250 494 251 499 252 504 252 509 252 514 252 519 251 524 250 528 249 533 247 537 244 542 242 546 239 549 235 553 232 556 228 556 226 556 224 555 223 554 222 553 222 552 223 551 223 551 224 551 225 551 225 552 226 552 226 553 226 553 225 553 225 M552.6 222.2 q4.6 0.9 -0.2 -3.7 M699 549 700 544 702 540 704 535 707 531 709 527 712 522 715 518 719 515 722 511 726 508 730 506 735 503 739 501 744 500 749 499 754 498 759 497 764 497 769 497 774 498 779 498 784 500 788 501 793 503 797 505 802 508 803 510 803 512 803 514 802 515 800 516 799 516 798 515 798 514 797 513 798 513 798 512 799 512 799 512 799 512 800 512 M758.9 497.1 q7.4 -1.5 -0.9 10.3 M798.0 512.2 q7.0 0.4 -11.2 -0.5 M778.8 498.5 q-5.3 1.3 -2.8 -0.9 M803.5 512.0 q-6.0 0.8 0.0 -7.6 M535 557 530 557 525 557 520 557 515 557 510 557 505 558 500 559 495 559 490 560 485 561 480 562 475 563 471 565 466 566 461 567 456 568 452 568 449 565 448 563 448 560 448 558 450 556 452 555 454 556 455 557 456 558 456 559 455 560 455 560 454 561 453 561 M504.9 557.9 q-4.1 4.6 9.5 -5.7 M504.9 557.9 q-0.9 -3.6 9.8 1.9 M420 444 425 441 429 439 433 437 438 435 443 433 447 431 452 430 457 429 462 428 467 426 472 426 477 425 482 424 487 423 492 423 496 422 501 422 506 422 511 423 516 423 521 424 526 425 531 426 536 428 541 429 545 431 550 433 551 435 552 438 552 440 551 441 549 442 548 442 547 442 546 441 546 440 546 439 546 438 547 438 547 438 548 438 548 438 M531.1 426.3 q-7.1 7.8 6.3 -2.9 M540.6 429.3 q-0.6 -4.7 -1.2 4.3 M545.9 440.8 q3.5 -5.5 11.7 10.1 M486.6 423.2 q-5.8 7.5 7.7 2.2 M423 759 421 754 418 750 416 745 413 741 411 737 409 732 406 728 404 723 402 719 400 714 397 710 395 706 393 701 391 697 391 694 392 691 394 690 396 689 397 689 399 690 399 692 399 693 399 694 398 694 397 695 397 695 396 694 396 694 396 693 M397.3 689.4 q1.8 2.2 8.7 2.7 M525 203 528 199 531 195 533 191 536 187 540 183 543 179 547 176 551 173 555 170 560 168 564 166 569 163 573 162 578 160 583 158 588 157 592 156 597 155 602 154 607 153 612 152 617 151 622 151 627 150 632 150 637 150 642 150 644 149 646 147 646 145 646 143 645 142 643 141 642 141 641 141 641 142 640 143 641 144 641 144 641 145 642 145 642 144 M612.1 152.2 q-0.2 0.4 -5.6 0.8 M536.5 186.6 q-1.5 6.3 10.8 6.6 M640.6 143.7 q-5.9 -3.0 -2.9 -3.7 M474 267 476 263 479 258 481 254 484 250 486 245 489 241 491 237 493 232 496 228 498 223 500 219 503 214 505 210 507 205 508 201 510 196 511 191 512 186 514 181 515 176 516 172 515 168 513 166 510 164 508 164 506 165 505 167 504 168 505 170 505 171 506 171 507 171 508 171 509 171 509 170 509 169 M486.2 245.4 q1.6 5.0 -0.4 0.3 M493.4 232.3 q-4.4 3.5 2.0 7.8 M493.4 232.3 q-7.0 6.2 7.6 -0.1 M562 219 561 215 559 210 557 205 555 201 552 197 550 192 547 188 544 184 541 180 538 176 535 172 532 168 529 164 525 161 522 157 518 154 514 151 510 147 506 145 502 142 498 141 494 142 492 145 491 147 491 150 492 152 494 153 495 153 497 153 498 152 498 151 498 150 498 149 497 149 497 148 M556.8 205.5 q-0.4 6.5 4.9 -4.0 M490.8 147.2 q7.3 -3.3 -6.4 -6.7 M541.4 179.8 q5.6 -5.4 1.9 -2.1 M496.6 148.4 q7.2 -3.0 7.9 0.8 M409 221 405 217 402 214 398 210 395 206 392 202 390 198 387 193 385 189 384 184 382 179 382 174 381 169 382 167 384 165 386 164 388 164 389 165 390 166 390 168 390 169 389 170 388 170 388 170 387 170 387 169 387 169 387 168 M401.7 213.6 q-5.3 2.9 -11.9 10.0 M386.7 168.1 q-6.7 -2.3 -7.1 -1.6 M638 657 642 659 647 662 651 665 655 668 659 671 663 674 666 678 670 681 674 684 678 687 682 690 686 693 688 696 688 699 686 702 685 703 683 704 681 704 679 703 679 701 679 700 679 699 680 698 681 698 681 698 682 699 682 699 M662.6 674.4 q-6.0 5.6 -6.6 11.7 M684.6 703.4 q3.1 -1.3 -10.8 -9.1 M781 789 785 786 788 782 792 779 795 775 798 771 802 768 805 764 807 759 810 755 812 751 814 746 816 741 817 737 819 732 819 727 819 722 819 717 819 712 818 707 817 702 816 697 814 692 812 688 809 684 806 680 803 676 800 672 796 671 792 671 790 672 788 674 787 677 788 679 789 680 790 681 792 681 793 680 794 680 794 679 794 678 794 677 793 677 M817.5 736.6 q-2.9 -4.8 -1.3 -1.0 M795.9 670.5 q7.8 -3.4 -1.7 8.8 M818.9 711.7 q4.1 6.1 10.2 -5.5 M794.1 678.7 q0.8 7.8 9.3 1.7 M640 585 635 584 630 583 625 582 620 581 615 581 610 580 605 580 600 580 595 580 590 580 585 580 580 580 575 580 570 580 565 580 560 580 555 581 550 581 545 581 541 582 536 583 531 585 526 587 522 588 517 590 512 592 508 594 506 597 505 599 505 602 507 604 508 605 510 605 511 604 512 603 513 602 513 601 512 601 511 600 511 600 510 600 510 601 M580.5 580.2 q-2.4 -6.5 6.0 -8.7 M393 310 394 315 395 320 396 325 398 329 400 334 402 339 404 343 406 348 408 352 411 356 414 360 417 364 421 368 424 371 428 375 432 378 436 381 440 384 444 386 449 388 453 390 458 392 463 394 468 395 472 396 476 395 479 393 480 390 480 388 479 386 477 384 476 384 474 384 473 385 472 386 472 387 473 388 473 389 474 389 475 389 M444.3 386.0 q3.7 4.3 2.0 -6.1 M393 332 391 328 389 323 387 319 385 314 384 309 382 304 381 300 380 295 379 290 379 285 378 280 377 275 376 270 375 265 375 260 374 255 373 250 373 245 372 240 373 238 375 237 376 236 378 236 379 237 380 238 380 239 379 240 379 241 378 241 378 241 377 241 377 240 377 240 377 239 M372.9 245.2 q0.3 1.7 1.3 4.3 M374.7 260.1 q-3.3 1.2 -4.5 -9.4 M782 215 777 217 773 220 769 222 764 224 759 225 754 226 749 226 744 226 739 226 734 226 729 225 724 223 720 221 715 219 711 217 707 214 703 210 699 207 696 203 696 201 696 199 697 198 698 197 699 197 700 197 701 198 701 199 701 200 701 200 700 201 700 201 699 201 699 200 699 200 M703.1 210.5 q0.8 4.3 -5.1 -3.1 M701.4 198.9 q-0.1 6.3 1.2 -3.5 M739.1 226.1 q7.7 -0.1 11.9 2.9 M535 260 540 261 545 262 550 263 555 264 559 265 564 266 569 268 574 270 578 272 583 274 587 277 591 280 595 283 599 286 603 289 606 293 609 297 612 301 615 305 618 309 620 313 622 318 624 322 624 326 623 328 621 330 619 330 617 330 616 329 615 328 615 326 616 325 616 325 617 324 618 324 619 325 619 325 619 326 M559.5 264.9 q2.4 -0.8 1.2 -7.2 M617.3 329.8 q-6.8 4.6 11.3 8.5 M624.4 322.5 q-0.9 5.9 -9.3 0.9 M574 584 575 579 577 574 579 569 580 565 582 560 585 556 587 551 589 547 592 543 594 538 597 534 599 530 602 525 604 521 607 516 609 512 611 508 611 504 610 501 608 499 605 498 603 498 601 500 601 501 600 503 601 504 602 505 603 505 604 505 604 505 605 504 605 503 M606.6 516.5 q1.9 2.9 5.0 -3.3 M601.7 504.8 q3.4 -1.0 4.4 -5.9 M748 384 751 380 754 376 758 373 761 369 765 365 768 362 772 358 775 355 779 352 783 348 787 345 791 342 794 338 798 335 801 331 805 328 808 324 811 320 811 318 811 316 810 315 809 314 808 314 807 315 806 316 806 316 806 317 806 317 807 318 807 318 808 318 808 317 808 317 M806.1 315.5 q-3.0 -0.1 11.2 3.6 M745 610 749 607 754 605 758 602 762 600 767 597 771 595 775 593 780 590 784 588 789 586 793 584 798 581 802 579 806 576 811 574 812 571 812 569 812 567 810 566 809 566 808 566 807 566 806 567 806 568 806 569 807 569 807 570 808 570 808 569 808 569 M805.9 568.0 q6.1 -7.5 -6.2 -0.4 M771.0 595.0 q0.2 -5.2 -10.0 3.5 M757.9 602.3 q5.7 -6.2 -11.0 -11.3 M762 752 758 749 754 746 749 744 745 741 741 739 736 737 732 734 727 732 723 730 718 728 714 725 709 723 705 722 700 720 695 718 690 717 686 716 681 715 676 714 672 715 670 717 669 720 669 722 670 724 672 725 673 726 675 725 676 725 676 723 676 723 676 722 675 721 674 721 674 721 M762.1 751.7 q-0.1 -1.6 -9.0 3.8 M672.3 715.4 q3.0 -2.9 0.6 -3.4 M671.6 725.3 q-4.5 -2.3 7.0 -4.8 M734 518 729 515 725 513 721 510 717 506 714 503 710 499 707 496 704 492 701 488 698 483 696 479 694 474 694 472 695 470 696 469 698 469 699 469 700 470 700 471 700 472 700 473 699 473 699 473 698 473 698 473 698 472 698 472 M717.4 506.3 q1.2 6.5 -2.5 8.3 M698.9 473.2 q-7.6 6.5 11.1 -3.2 M733.6 518.0 q4.2 -0.1 -7.9 1.2 M572 513 577 513 582 514 587 514 592 515 597 515 602 515 607 515 612 514 617 514 622 513 627 512 632 511 637 510 642 509 647 508 651 506 656 505 661 504 666 502 670 500 675 498 680 496 684 494 689 492 691 492 693 493 694 495 694 496 694 497 693 498 692 499 691 499 690 498 690 498 690 497 690 497 690 496 691 496 691 496 M646.7 507.8 q2.2 -5.6 -1.5 -3.5 M646.7 507.8 q-5.2 6.4 -11.8 -8.7 M693.5 497.2 q-3.0 -0.8 -1.7 3.2 M701 733 703 728 705 724 707 719 709 715 712 710 714 706 717 702 720 698 723 694 726 690 729 686 732 682 735 678 738 674 741 670 744 666 748 662 751 659 755 656 759 652 763 649 767 646 771 643 775 640 779 638 784 635 788 633 791 633 794 634 795 636 796 638 795 640 794 641 793 642 792 642 791 642 790 641 790 640 790 639 790 639 791 639 791 639 M774.9 640.3 q-4.4 -2.7 5.7 3.9 M779 514 780 509 781 504 782 499 784 495 786 490 789 485 791 481 794 477 797 473 800 469 804 466 808 463 812 460 816 457 820 455 825 453 830 451 835 450 840 450 845 449 850 449 853 451 854 453 855 455 855 457 854 459 852 460 851 460 849 460 848 459 848 458 848 457 849 456 849 456 850 456 850 456 M849.3 459.6 q-7.3 0.8 -2.0 6.0 M807.7 462.7 q-6.1 -7.6 0.6 5.7 M543 826 539 823 536 819 532 816 529 812 525 808 522 804 520 800 517 796 515 792 512 787 510 783 508 778 506 773 504 769 503 764 501 760 498 757 495 756 492 757 490 758 488 760 488 762 489 764 490 765 491 765 492 765 493 764 494 764 494 763 494 762 493 762 M500.6 759.6 q3.4 -1.2 11.4 9.1 M493.3 761.7 q5.5 6.6 10.3 -2.1 M493.9 762.9 q-6.9 -2.2 -4.1 2.9 M366 723 371 726 375 728 380 730 384 733 389 735 393 737 397 739 402 742 406 744 411 746 415 749 420 751 424 753 429 756 433 758 437 760 442 763 446 765 451 767 454 768 457 766 459 764 460 762 460 760 458 758 457 757 456 757 454 758 454 758 453 759 453 760 454 761 454 761 455 761 M388.6 734.9 q2.0 2.0 -3.0 -6.4 M457.1 757.3 q-3.4 -6.2 -11.4 0.6 M410.8 746.2 q2.8 6.8 -0.4 0.8 M453.2 760.2 q-5.4 -1.0 0.4 4.5 M501 396 499 391 497 387 495 382 492 378 490 374 487 369 485 365 482 360 480 356 477 352 475 348 472 343 469 340 465 336 462 332 458 331 454 331 451 333 450 335 449 337 450 340 451 341 453 342 454 342 455 341 456 340 456 339 456 338 456 338 455 337 M501.1 395.8 q-3.3 -6.2 6.3 -0.5 M491 742 486 742 481 742 476 742 471 743 466 744 461 745 456 746 452 747 447 749 442 750 437 752 433 754 428 756 424 758 419 761 415 763 411 766 407 769 405 771 405 774 406 776 407 777 409 778 411 778 412 777 412 776 412 775 412 774 412 773 411 773 410 773 410 774 410 774 M419.3 760.6 q3.9 2.0 11.4 11.3 M707 430 702 429 697 429 692 428 687 428 682 427 677 427 672 426 667 425 662 424 657 424 652 423 647 422 642 421 638 421 633 420 628 419 623 418 618 417 613 417 608 416 603 415 598 414 593 412 591 410 589 407 589 404 591 402 592 401 594 400 596 401 597 402 597 403 597 404 597 405 596 405 596 406 595 405 595 405 M652.4 422.9 q-0.4 -6.3 8.7 -7.9 M642.5 421.5 q-5.3 -3.7 -7.5 -8.0 M697.0 428.8 q6.5 -7.0 -6.9 5.5 M590.5 402.1 q6.8 -5.7 -9.1 1.0 M794 685 796 681 798 676 800 672 803 667 805 663 807 658 810 654 812 650 814 645 816 641 819 636 821 632 824 628 826 623 829 619 832 615 835 613 838 613 841 614 842 616 843 618 843 619 842 621 841 622 840 622 838 622 838 621 837 620 837 619 838 619 838 618 M804.9 662.9 q4.3 5.8 -2.8 7.3 M840.8 621.7 q4.0 -7.8 -7.9 -4.3 M797.9 676.2 q3.8 -2.0 -6.6 -1.5 M434 517 438 520 443 522 447 524 452 526 456 529 461 531 465 533 470 536 474 538 478 540 483 542 488 544 492 546 494 546 496 545 497 544 498 543 497 541 497 540 496 540 495 540 494 540 493 541 493 541 493 542 494 542 494 542 494 542 M494.4 542.4 q-0.1 5.9 6.5 -4.9 M494.4 546.3 q1.9 7.4 1.4 5.4 M493.3 541.2 q-4.5 7.9 5.0 11.0 M494.0 542.4 q-3.6 -2.2 5.6 1.2 M506 238 508 234 509 229 511 224 512 219 514 215 516 210 518 205 519 201 521 196 522 191 524 186 525 181 526 176 526 171 526 166 527 161 526 156 526 151 525 147 524 142 522 137 520 133 517 128 514 124 511 120 508 119 505 119 503 120 501 122 501 124 501 126 502 127 503 127 504 127 505 127 506 126 506 126 506 125 506 124 505 124 M517.1 128.2 q3.9 -4.7 2.3 5.7 M505.4 124.1 q0.5 6.6 11.7 7.0 M519.6 132.5 q-7.9 -2.4 -8.7 11.3 M774 667 778 666 783 665 788 664 793 663 798 663 803 663 808 663 813 663 818 664 823 664 828 665 833 666 838 667 843 668 847 670 852 671 857 673 862 675 866 677 871 679 873 682 873 685 873 687 871 689 869 690 868 690 866 690 865 689 865 687 865 686 866 686 866 685 867 685 868 685 868 686 M798.2 663.1 q-0.6 -5.3 3.1 6.5 M523 403 526 406 530 409 534 412 538 415 542 418 547 420 551 423 556 425 560 427 565 429 569 431 574 432 579 433 584 434 589 435 591 434 593 432 593 430 593 429 592 427 591 427 590 427 589 427 588 427 588 428 588 429 589 429 589 430 589 430 590 430 M569.3 430.9 q4.6 0.9 10.6 -11.7 M588.9 434.6 q5.1 -6.8 -1.8 -3.5 M780 631 781 636 783 640 785 645 787 650 789 654 792 658 794 663 797 667 800 671 803 675 807 678 810 682 813 682 815 682 816 681 817 680 817 679 817 677 816 677 815 676 815 676 814 677 814 677 813 678 814 678 814 679 814 679 M815.4 676.2 q-7.4 2.3 -1.7 4.7 M783.1 640.4 q2.2 -5.1 2.7 -0.4 M817.4 678.6 q-3.9 2.1 1.8 -12.0 M449 615 444 614 439 613 434 612 429 611 424 610 420 609 415 608 410 607 405 605 400 604 395 603 390 602 385 601 381 600 376 599 371 598 368 599 366 600 365 603 365 605 366 606 367 607 368 608 370 607 370 607 371 606 371 605 371 604 370 604 370 604 369 604 M370.9 605.0 q-1.9 -2.2 -4.6 -10.4 M472 212 467 214 462 215 457 216 452 217 448 218 443 219 438 219 433 219 428 219 423 218 418 218 413 217 408 216 403 214 398 213 396 211 395 209 395 206 396 204 397 203 399 203 400 203 401 204 402 205 402 206 401 207 401 207 400 207 400 207 399 207 M395.7 204.4 q0.4 -6.1 -3.1 -0.7 M368 530 371 526 374 522 378 519 382 515 385 512 389 509 393 505 396 502 400 498 403 495 407 491 410 487 413 483 416 479 419 476 423 472 426 468 429 464 432 460 435 456 438 452 441 448 444 444 447 440 450 436 453 432 455 431 457 430 459 431 460 432 461 434 460 435 460 436 459 437 458 437 457 437 457 436 457 436 457 435 457 435 457 434 M381.6 515.4 q7.8 -7.4 -2.9 2.2 M416.3 479.4 q1.5 6.4 -8.1 -6.7 M456.8 434.5 q-6.5 7.5 -5.0 2.7 M460.6 433.8 q-3.3 -3.1 9.7 7.0 M800 265 796 261 793 258 790 254 786 250 783 246 780 242 777 239 773 235 770 231 766 228 762 225 758 222 754 219 750 216 746 213 742 211 737 208 733 205 729 203 724 201 720 198 715 196 711 193 707 191 702 189 698 186 694 184 689 184 686 185 684 187 683 190 683 193 685 194 686 195 688 196 689 195 690 194 691 193 691 192 690 191 690 191 689 191 M686.3 195.5 q-5.0 -0.6 6.9 1.5 M688.9 190.8 q0.6 1.6 -10.1 -4.3 M670 809 675 811 680 812 685 814 689 815 694 815 699 816 704 816 709 816 714 816 719 816 724 816 729 816 734 815 739 815 744 814 749 814 754 813 759 813 764 812 769 811 774 811 779 810 784 810 789 809 794 809 799 808 802 807 803 804 803 802 803 800 802 799 800 798 799 798 798 799 797 800 797 801 797 801 797 802 798 802 799 802 799 802 M704.4 816.2 q7.9 -1.5 -10.2 0.7 M388 824 383 824 378 823 373 822 368 822 363 821 358 820 353 820 348 820 343 820 338 820 333 820 328 821 323 822 318 823 314 824 309 825 304 827 299 828 295 830 290 832 286 835 282 837 278 841 274 844 271 848 270 852 271 855 272 858 275 859 277 859 279 858 280 857 281 855 281 854 280 853 279 852 278 852 277 853 277 853 276 854 M343.2 819.6 q3.0 6.2 -8.8 -7.5 M290.0 832.1 q1.1 -1.9 -7.7 9.3 M397 239 402 237 406 235 410 232 415 229 418 226 422 223 426 219 429 215 431 211 434 207 436 202 437 197 438 192 439 187 440 182 439 177 439 173 437 170 435 168 432 168 430 168 429 170 428 171 428 173 429 174 430 175 431 175 431 175 432 174 432 174 432 173 432 172 M410.4 232.1 q-1.5 -6.2 -5.3 -7.7 M439.5 182.5 q-7.4 -7.8 -9.8 9.4 M657 880 655 875 653 871 651 866 649 862 647 857 645 853 643 848 641 843 639 839 637 834 635 830 633 825 631 820 629 816 628 811 626 806 625 801 624 797 623 792 623 787 622 782 622 777 624 773 627 771 630 770 633 771 634 772 635 774 635 776 635 777 634 778 633 779 631 779 631 778 630 777 630 777 630 776 M632.6 770.9 q-1.2 1.3 -9.0 -3.0 M612 717 607 719 603 722 598 723 594 725 589 726 584 727 579 728 574 728 569 728 564 727 559 726 554 725 550 723 545 720 541 718 537 714 535 711 535 708 536 705 538 703 541 703 543 703 544 704 545 705 545 707 545 708 544 709 543 709 542 709 542 708 541 708 M593.6 725.1 q7.8 -5.8 -4.5 -8.3 M588.8 726.4 q6.3 4.5 5.1 -4.0 M559 764 563 767 567 770 571 773 574 777 578 780 581 784 584 788 587 792 590 796 592 801 594 805 596 810 597 815 598 820 598 825 598 830 597 835 597 840 596 845 594 849 593 854 591 859 588 863 586 865 583 866 581 865 579 864 578 863 578 861 579 859 580 859 581 858 582 858 582 859 583 859 583 860 583 861 582 861 M590.6 858.6 q7.2 2.1 -1.7 -8.2 M570.8 773.1 q-6.7 -2.6 7.2 -7.7 M597.9 824.7 q-1.4 6.5 -10.7 -6.4 M718 419 715 423 713 428 711 432 708 436 706 441 704 445 701 450 699 454 697 459 695 463 693 468 691 472 689 477 688 482 686 487 685 491 685 494 686 496 688 497 690 497 691 496 692 495 693 494 693 493 692 492 691 492 691 492 690 492 690 492 690 493 690 493 M687.6 481.8 q7.7 -6.4 9.8 4.6 M689.8 492.5 q4.3 1.4 9.0 8.4 M483 464 488 464 493 464 498 464 503 464 508 464 513 464 518 464 523 465 528 466 533 467 538 468 543 469 547 470 552 471 557 472 562 474 567 475 572 477 576 478 581 480 586 481 590 483 593 486 594 489 593 491 592 493 590 494 589 495 587 494 586 493 586 492 586 491 586 490 587 490 588 489 588 490 589 490 M592.8 485.7 q-7.5 0.3 10.8 1.4 M682 768 686 772 690 775 693 779 696 783 699 786 703 790 705 794 708 799 710 803 713 808 714 812 716 817 717 822 718 827 719 832 719 837 719 842 718 844 716 846 713 847 711 846 710 845 709 844 709 842 710 841 710 841 711 840 712 840 713 841 713 841 713 842 713 842 M710.0 845.2 q3.7 -6.8 0.9 -11.3 M366 357 363 353 360 349 357 345 354 341 351 337 348 333 345 329 342 325 340 320 337 316 335 312 332 307 330 303 327 299 325 294 322 290 320 286 318 281 316 277 313 272 313 270 314 268 316 266 317 266 319 266 320 267 321 268 321 269 320 270 320 270 319 271 318 271 318 270 318 270 318 269 M319.7 270.4 q-0.4 -1.3 9.3 6.4 M366.3 356.6 q-0.9 -6.7 -9.8 -9.6 M345.1 328.8 q-2.9 -3.1 -6.8 3.8 M719 651 723 648 727 645 731 642 735 639 738 635 742 632 746 629 750 626 754 623 759 621 763 618 767 616 772 614 777 612 781 611 786 609 789 610 790 611 791 612 791 614 791 615 790 616 789 617 788 617 787 616 787 616 787 615 787 614 787 614 788 614 788 614 M758.6 620.7 q3.6 7.9 -3.0 10.9 M787.6 613.7 q6.5 -4.6 8.0 10.7 M746.2 629.3 q-1.2 0.5 -1.7 -9.8 M651 756 655 753 660 750 664 748 668 745 672 742 675 738 679 734 682 731 685 726 688 722 690 718 693 714 695 709 697 705 699 700 700 695 701 690 702 685 702 680 701 675 701 670 699 669 698 668 696 667 695 668 694 669 693 670 693 671 694 672 694 672 695 672 696 672 696 672 696 671 696 671 696 671 M698.7 700.0 q3.2 1.2 -2.2 -1.7 M667.9 744.7 q-6.5 2.0 4.1 -5.8 M570 420 575 419 580 418 585 417 590 416 595 415 600 413 604 412 609 410 614 408 619 407 623 405 628 403 630 400 631 397 630 395 629 393 627 392 626 392 624 392 623 393 623 395 623 396 623 396 624 397 625 397 625 397 626 396 M625.7 396.3 q1.1 -1.1 4.3 6.6 M599.7 413.2 q4.6 -7.6 1.5 11.1 M480 404 483 401 487 397 490 393 494 390 497 386 499 381 502 377 504 373 506 368 508 363 509 358 510 353 510 348 510 343 509 340 506 337 503 336 500 337 498 338 497 340 497 342 497 343 498 344 500 345 501 345 502 344 502 343 502 343 502 342 M500.4 336.6 q-8.0 -4.7 0.9 8.1 M493.6 389.5 q-0.6 4.2 11.1 5.8 M498.3 337.9 q-2.4 -5.8 2.2 -1.0 M678 487 683 487 688 486 693 485 698 484 703 483 707 481 712 479 716 477 721 474 725 471 729 468 732 465 736 461 739 458 742 454 745 450 748 446 751 441 753 437 756 433 756 430 755 427 753 426 751 425 749 426 748 427 748 428 747 429 748 430 748 430 749 431 750 431 750 430 751 430 751 429 M724.9 471.4 q-6.8 -2.8 -4.5 -7.4 M750.7 429.9 q-3.0 1.1 -3.7 6.4 M728.8 468.3 q4.4 5.8 -0.1 1.4 M476 486 481 486 486 485 490 484 495 483 500 481 505 480 510 478 514 477 519 475 524 473 528 470 532 468 537 465 541 462 545 459 549 456 552 453 556 449 556 447 556 445 555 443 554 442 552 442 551 443 550 443 550 444 550 445 551 446 551 446 552 446 552 446 552 446 553 446 M550.2 445.1 q4.5 -6.6 -11.8 2.8 M485.6 484.7 q6.1 -7.0 10.0 -6.6 M514.4 476.6 q2.8 -1.0 -5.0 -10.1 M548.6 456.2 q0.6 0.2 2.8 6.7 M685 690 687 685 690 681 691 676 693 672 695 667 696 662 698 657 699 652 700 648 701 643 702 638 702 633 703 628 703 623 703 618 703 613 702 608 702 603 701 598 700 593 698 588 697 583 694 581 691 580 689 580 687 581 685 583 685 585 685 586 686 587 687 588 689 588 690 587 690 587 690 586 690 585 690 585 M691.5 676.3 q0.5 -2.8 10.8 -1.5 M738 220 738 225 738 230 738 235 738 240 738 245 738 250 737 255 737 260 736 265 736 270 735 275 735 280 734 285 734 290 733 295 732 300 732 305 730 307 728 308 726 309 725 308 723 307 723 306 723 304 724 303 724 303 725 303 726 303 726 303 727 304 727 304 726 305 M724.3 302.9 q-5.2 2.6 2.1 11.3 M738.4 235.3 q1.7 -5.9 -1.7 -8.8 M726.6 303.9 q5.7 7.0 -9.3 -1.0 M731.7 305.0 q-2.0 7.1 -0.1 8.9 M393 470 392 465 391 460 390 455 389 450 389 445 389 440 390 435 391 430 392 425 394 421 396 416 399 412 402 408 405 404 408 400 412 397 416 393 419 390 424 387 427 387 430 388 432 390 433 392 433 394 432 395 431 396 429 397 428 396 427 396 427 395 427 394 427 393 428 393 428 393 M429.9 387.8 q-4.8 -4.2 -4.2 -1.8 M427.1 393.4 q-6.1 0.5 5.9 -4.2 M432.8 393.8 q0.3 -7.9 3.2 -11.1 M629 607 625 611 621 614 617 617 613 620 609 623 604 625 600 628 596 630 591 633 587 635 582 637 578 639 573 641 569 643 564 644 559 645 556 645 553 643 552 641 552 639 553 637 554 636 555 635 557 635 558 636 558 637 558 638 558 638 558 639 557 639 557 639 M557.1 639.2 q1.0 7.1 -11.6 -4.1 M552.2 640.7 q4.1 7.9 4.0 -7.6 M633 208 635 203 637 199 639 194 641 190 643 185 644 180 645 175 646 170 647 165 648 160 648 155 649 150 650 146 651 141 652 136 652 131 653 126 654 121 655 116 656 111 657 106 658 101 658 96 657 92 655 90 652 89 649 89 647 90 646 92 646 94 646 95 647 96 648 97 649 97 650 96 651 96 651 95 651 94 M652.4 130.7 q-1.1 6.0 8.9 -3.9 M650.1 96.3 q7.1 1.0 0.8 -3.3 M567 387 563 389 558 391 554 394 550 396 545 399 541 402 538 405 534 409 531 412 527 416 525 420 522 425 520 429 520 431 520 433 521 434 523 434 524 434 525 434 525 433 525 432 525 431 525 431 524 431 524 431 523 431 523 431 523 431 M525.2 431.2 q-4.2 4.5 6.6 0.3 M553.9 393.7 q-3.6 0.6 3.6 8.3"/><circle cx="664.6" cy="296.4" r="2.1"/><circle cx="541.3" cy="769.1" r="2.2"/><circle cx="712.9" cy="854.1" r="2.0"/><circle cx="527.3" cy="786.5" r="2.6"/><circle cx="689.7" cy="344.4" r="2.1"/><circle cx="744.3" cy="784.4" r="2.4"/><circle cx="715.9" cy="864.4" r="1.3"/><circle cx="518.4" cy="414.5" r="1.8"/><circle cx="397.8" cy="395.1" r="2.2"/><circle cx="519.3" cy="318.0" r="1.3"/><circle cx="659.0" cy="464.5" r="1.9"/><circle cx="640.1" cy="442.2" r="1.3"/><circle cx="709.3" cy="368.3" r="1.6"/><circle cx="606.7" cy="712.6" r="1.5"/><circle cx="402.3" cy="773.8" r="1.2"/><circle cx="611.3" cy="735.4" r="2.7"/><circle cx="391.0" cy="326.7" r="1.4"/><circle cx="667.2" cy="497.0" r="1.8"/><circle cx="537.7" cy="305.1" r="2.8"/><circle cx="532.8" cy="359.7" r="1.6"/><circle cx="472.1" cy="856.5" r="1.3"/><circle cx="441.0" cy="288.5" r="1.7"/><circle cx="672.2" cy="342.7" r="1.9"/><circle cx="486.9" cy="267.2" r="1.4"/><circle cx="635.3" cy="605.3" r="2.4"/><circle cx="739.8" cy="777.6" r="1.8"/><circle cx="590.8" cy="387.8" r="2.4"/><circle cx="737.8" cy="348.4" r="2.2"/><circle cx="544.9" cy="635.6" r="2.2"/><circle cx="606.4" cy="843.5" r="1.5"/><circle cx="451.0" cy="446.8" r="1.3"/><circle cx="602.8" cy="793.0" r="1.7"/><circle cx="472.6" cy="633.2" r="2.2"/><circle cx="413.1" cy="749.0" r="2.1"/><circle cx="518.8" cy="441.8" r="1.8"/><circle cx="578.9" cy="562.7" r="1.5"/><circle cx="531.0" cy="317.7" r="2.3"/><circle cx="576.3" cy="672.3" r="2.7"/><circle cx="544.3" cy="739.7" r="2.7"/><circle cx="463.9" cy="650.2" r="2.0"/><circle cx="631.8" cy="616.2" r="1.9"/><circle cx="572.8" cy="690.2" r="1.2"/><circle cx="398.7" cy="414.5" r="2.6"/><circle cx="702.7" cy="607.2" r="2.6"/><circle cx="540.2" cy="615.7" r="2.8"/><circle cx="748.7" cy="709.7" r="1.8"/><circle cx="486.8" cy="830.6" r="2.6"/><circle cx="533.9" cy="484.8" r="1.9"/><circle cx="463.9" cy="447.1" r="1.4"/><circle cx="779.6" cy="240.1" r="1.5"/><circle cx="733.5" cy="736.0" r="1.3"/><circle cx="612.4" cy="871.0" r="2.6"/><circle cx="426.4" cy="265.9" r="2.6"/><circle cx="761.7" cy="503.3" r="2.4"/><circle cx="407.3" cy="471.4" r="2.0"/><circle cx="485.3" cy="663.4" r="2.4"/><circle cx="464.2" cy="275.2" r="2.7"/><circle cx="632.5" cy="413.9" r="2.7"/><circle cx="713.2" cy="347.6" r="1.8"/><circle cx="401.7" cy="429.1" r="2.0"/><circle cx="681.8" cy="283.6" r="1.4"/><circle cx="760.0" cy="277.4" r="2.3"/><circle cx="658.4" cy="458.6" r="2.8"/><circle cx="688.2" cy="305.8" r="2.2"/><circle cx="633.8" cy="859.5" r="2.6"/><circle cx="713.0" cy="726.4" r="1.9"/><circle cx="599.7" cy="224.8" r="2.7"/><circle cx="732.2" cy="543.9" r="2.7"/><circle cx="689.0" cy="655.6" r="1.3"/><circle cx="545.7" cy="305.1" r="1.7"/><circle cx="727.2" cy="221.6" r="2.2"/><circle cx="752.6" cy="762.4" r="1.8"/><circle cx="538.3" cy="866.2" r="2.3"/><circle cx="559.7" cy="306.9" r="1.9"/><circle cx="395.6" cy="358.4" r="2.6"/><circle cx="414.3" cy="562.4" r="1.2"/><circle cx="667.2" cy="773.3" r="2.5"/><circle cx="698.1" cy="869.3" r="2.6"/><circle cx="727.5" cy="851.3" r="1.5"/><circle cx="455.3" cy="683.1" r="1.3"/><circle cx="775.9" cy="670.2" r="2.7"/><circle cx="492.5" cy="387.9" r="1.3"/><circle cx="435.4" cy="465.3" r="1.9"/><circle cx="624.4" cy="827.0" r="1.5"/><circle cx="493.2" cy="280.1" r="2.7"/><circle cx="606.8" cy="866.9" r="1.6"/><circle cx="756.5" cy="551.0" r="2.7"/><circle cx="557.5" cy="371.0" r="2.4"/><circle cx="421.9" cy="852.6" r="1.6"/><circle cx="441.2" cy="493.6" r="1.9"/></g><g fill="#275640" fill-opacity="0.55"><ellipse cx="492.5" cy="592.7" rx="4.0" ry="1.8" transform="rotate(0 492.5 592.7)"/><ellipse cx="488.9" cy="597.8" rx="4.0" ry="1.8" transform="rotate(72 488.9 597.8)"/><ellipse cx="483.0" cy="595.8" rx="4.0" ry="1.8" transform="rotate(144 483.0 595.8)"/><ellipse cx="483.0" cy="589.7" rx="4.0" ry="1.8" transform="rotate(216 483.0 589.7)"/><ellipse cx="488.9" cy="587.7" rx="4.0" ry="1.8" transform="rotate(288 488.9 587.7)"/><ellipse cx="585.1" cy="785.4" rx="5.0" ry="2.3" transform="rotate(0 585.1 785.4)"/><ellipse cx="581.8" cy="791.2" rx="5.0" ry="2.3" transform="rotate(60 581.8 791.2)"/><ellipse cx="575.1" cy="791.2" rx="5.0" ry="2.3" transform="rotate(120 575.1 791.2)"/><ellipse cx="571.7" cy="785.4" rx="5.0" ry="2.3" transform="rotate(180 571.7 785.4)"/><ellipse cx="575.1" cy="779.6" rx="5.0" ry="2.3" transform="rotate(240 575.1 779.6)"/><ellipse cx="581.8" cy="779.6" rx="5.0" ry="2.3" transform="rotate(300 581.8 779.6)"/><ellipse cx="428.3" cy="644.7" rx="3.9" ry="1.8" transform="rotate(0 428.3 644.7)"/><ellipse cx="426.8" cy="648.3" rx="3.9" ry="1.8" transform="rotate(45 426.8 648.3)"/><ellipse cx="423.1" cy="649.8" rx="3.9" ry="1.8" transform="rotate(90 423.1 649.8)"/><ellipse cx="419.5" cy="648.3" rx="3.9" ry="1.8" transform="rotate(135 419.5 648.3)"/><ellipse cx="418.0" cy="644.7" rx="3.9" ry="1.8" transform="rotate(180 418.0 644.7)"/><ellipse cx="419.5" cy="641.0" rx="3.9" ry="1.8" transform="rotate(225 419.5 641.0)"/><ellipse cx="423.1" cy="639.5" rx="3.9" ry="1.8" transform="rotate(270 423.1 639.5)"/><ellipse cx="426.8" cy="641.0" rx="3.9" ry="1.8" transform="rotate(315 426.8 641.0)"/><ellipse cx="636.9" cy="741.6" rx="3.5" ry="1.6" transform="rotate(0 636.9 741.6)"/><ellipse cx="635.5" cy="744.9" rx="3.5" ry="1.6" transform="rotate(45 635.5 744.9)"/><ellipse cx="632.1" cy="746.3" rx="3.5" ry="1.6" transform="rotate(90 632.1 746.3)"/><ellipse cx="628.8" cy="744.9" rx="3.5" ry="1.6" transform="rotate(135 628.8 744.9)"/><ellipse cx="627.4" cy="741.6" rx="3.5" ry="1.6" transform="rotate(180 627.4 741.6)"/><ellipse cx="628.8" cy="738.2" rx="3.5" ry="1.6" transform="rotate(225 628.8 738.2)"/><ellipse cx="632.1" cy="736.9" rx="3.5" ry="1.6" transform="rotate(270 632.1 736.9)"/><ellipse cx="635.5" cy="738.2" rx="3.5" ry="1.6" transform="rotate(315 635.5 738.2)"/><ellipse cx="418.0" cy="233.5" rx="4.4" ry="2.1" transform="rotate(0 418.0 233.5)"/><ellipse cx="416.3" cy="237.6" rx="4.4" ry="2.1" transform="rotate(45 416.3 237.6)"/><ellipse cx="412.1" cy="239.4" rx="4.4" ry="2.1" transform="rotate(90 412.1 239.4)"/><ellipse cx="407.9" cy="237.6" rx="4.4" ry="2.1" transform="rotate(135 407.9 237.6)"/><ellipse cx="406.1" cy="233.5" rx="4.4" ry="2.1" transform="rotate(180 406.1 233.5)"/><ellipse cx="407.9" cy="229.3" rx="4.4" ry="2.1" transform="rotate(225 407.9 229.3)"/><ellipse cx="412.1" cy="227.5" rx="4.4" ry="2.1" transform="rotate(270 412.1 227.5)"/><ellipse cx="416.3" cy="229.3" rx="4.4" ry="2.1" transform="rotate(315 416.3 229.3)"/><ellipse cx="462.3" cy="835.1" rx="4.2" ry="2.0" transform="rotate(0 462.3 835.1)"/><ellipse cx="460.7" cy="839.1" rx="4.2" ry="2.0" transform="rotate(45 460.7 839.1)"/><ellipse cx="456.7" cy="840.7" rx="4.2" ry="2.0" transform="rotate(90 456.7 840.7)"/><ellipse cx="452.7" cy="839.1" rx="4.2" ry="2.0" transform="rotate(135 452.7 839.1)"/><ellipse cx="451.1" cy="835.1" rx="4.2" ry="2.0" transform="rotate(180 451.1 835.1)"/><ellipse cx="452.7" cy="831.1" rx="4.2" ry="2.0" transform="rotate(225 452.7 831.1)"/><ellipse cx="456.7" cy="829.5" rx="4.2" ry="2.0" transform="rotate(270 456.7 829.5)"/><ellipse cx="460.7" cy="831.1" rx="4.2" ry="2.0" transform="rotate(315 460.7 831.1)"/><ellipse cx="433.3" cy="430.2" rx="5.0" ry="2.3" transform="rotate(0 433.3 430.2)"/><ellipse cx="428.7" cy="436.5" rx="5.0" ry="2.3" transform="rotate(72 428.7 436.5)"/><ellipse cx="421.2" cy="434.1" rx="5.0" ry="2.3" transform="rotate(144 421.2 434.1)"/><ellipse cx="421.2" cy="426.3" rx="5.0" ry="2.3" transform="rotate(216 421.2 426.3)"/><ellipse cx="428.7" cy="423.8" rx="5.0" ry="2.3" transform="rotate(288 428.7 423.8)"/><ellipse cx="553.7" cy="833.8" rx="5.1" ry="2.4" transform="rotate(0 553.7 833.8)"/><ellipse cx="551.7" cy="838.6" rx="5.1" ry="2.4" transform="rotate(45 551.7 838.6)"/><ellipse cx="546.9" cy="840.6" rx="5.1" ry="2.4" transform="rotate(90 546.9 840.6)"/><ellipse cx="542.1" cy="838.6" rx="5.1" ry="2.4" transform="rotate(135 542.1 838.6)"/><ellipse cx="540.1" cy="833.8" rx="5.1" ry="2.4" transform="rotate(180 540.1 833.8)"/><ellipse cx="542.1" cy="829.0" rx="5.1" ry="2.4" transform="rotate(225 542.1 829.0)"/><ellipse cx="546.9" cy="827.0" rx="5.1" ry="2.4" transform="rotate(270 546.9 827.0)"/><ellipse cx="551.7" cy="829.0" rx="5.1" ry="2.4" transform="rotate(315 551.7 829.0)"/><ellipse cx="473.9" cy="698.6" rx="4.2" ry="2.0" transform="rotate(0 473.9 698.6)"/><ellipse cx="470.0" cy="703.9" rx="4.2" ry="2.0" transform="rotate(72 470.0 703.9)"/><ellipse cx="463.7" cy="701.9" rx="4.2" ry="2.0" transform="rotate(144 463.7 701.9)"/><ellipse cx="463.7" cy="695.3" rx="4.2" ry="2.0" transform="rotate(216 463.7 695.3)"/><ellipse cx="470.0" cy="693.2" rx="4.2" ry="2.0" transform="rotate(288 470.0 693.2)"/><ellipse cx="750.3" cy="360.3" rx="4.7" ry="2.2" transform="rotate(0 750.3 360.3)"/><ellipse cx="747.2" cy="365.7" rx="4.7" ry="2.2" transform="rotate(60 747.2 365.7)"/><ellipse cx="740.9" cy="365.7" rx="4.7" ry="2.2" transform="rotate(120 740.9 365.7)"/><ellipse cx="737.8" cy="360.3" rx="4.7" ry="2.2" transform="rotate(180 737.8 360.3)"/><ellipse cx="740.9" cy="354.9" rx="4.7" ry="2.2" transform="rotate(240 740.9 354.9)"/><ellipse cx="747.2" cy="354.9" rx="4.7" ry="2.2" transform="rotate(300 747.2 354.9)"/><ellipse cx="605.7" cy="228.7" rx="3.4" ry="1.6" transform="rotate(0 605.7 228.7)"/><ellipse cx="602.5" cy="233.0" rx="3.4" ry="1.6" transform="rotate(72 602.5 233.0)"/><ellipse cx="597.4" cy="231.4" rx="3.4" ry="1.6" transform="rotate(144 597.4 231.4)"/><ellipse cx="597.4" cy="226.0" rx="3.4" ry="1.6" transform="rotate(216 597.4 226.0)"/><ellipse cx="602.5" cy="224.3" rx="3.4" ry="1.6" transform="rotate(288 602.5 224.3)"/><ellipse cx="688.7" cy="592.4" rx="2.4" ry="1.1" transform="rotate(0 688.7 592.4)"/><ellipse cx="686.5" cy="595.4" rx="2.4" ry="1.1" transform="rotate(72 686.5 595.4)"/><ellipse cx="682.9" cy="594.3" rx="2.4" ry="1.1" transform="rotate(144 682.9 594.3)"/><ellipse cx="682.9" cy="590.4" rx="2.4" ry="1.1" transform="rotate(216 682.9 590.4)"/><ellipse cx="686.5" cy="589.3" rx="2.4" ry="1.1" transform="rotate(288 686.5 589.3)"/><ellipse cx="388.0" cy="833.5" rx="3.0" ry="1.4" transform="rotate(0 388.0 833.5)"/><ellipse cx="386.8" cy="836.3" rx="3.0" ry="1.4" transform="rotate(45 386.8 836.3)"/><ellipse cx="383.9" cy="837.5" rx="3.0" ry="1.4" transform="rotate(90 383.9 837.5)"/><ellipse cx="381.1" cy="836.3" rx="3.0" ry="1.4" transform="rotate(135 381.1 836.3)"/><ellipse cx="379.9" cy="833.5" rx="3.0" ry="1.4" transform="rotate(180 379.9 833.5)"/><ellipse cx="381.1" cy="830.6" rx="3.0" ry="1.4" transform="rotate(225 381.1 830.6)"/><ellipse cx="383.9" cy="829.4" rx="3.0" ry="1.4" transform="rotate(270 383.9 829.4)"/><ellipse cx="386.8" cy="830.6" rx="3.0" ry="1.4" transform="rotate(315 386.8 830.6)"/><ellipse cx="437.6" cy="306.1" rx="5.1" ry="2.4" transform="rotate(0 437.6 306.1)"/><ellipse cx="435.6" cy="310.9" rx="5.1" ry="2.4" transform="rotate(45 435.6 310.9)"/><ellipse cx="430.8" cy="312.9" rx="5.1" ry="2.4" transform="rotate(90 430.8 312.9)"/><ellipse cx="426.0" cy="310.9" rx="5.1" ry="2.4" transform="rotate(135 426.0 310.9)"/><ellipse cx="424.0" cy="306.1" rx="5.1" ry="2.4" transform="rotate(180 424.0 306.1)"/><ellipse cx="426.0" cy="301.3" rx="5.1" ry="2.4" transform="rotate(225 426.0 301.3)"/><ellipse cx="430.8" cy="299.3" rx="5.1" ry="2.4" transform="rotate(270 430.8 299.3)"/><ellipse cx="435.6" cy="301.3" rx="5.1" ry="2.4" transform="rotate(315 435.6 301.3)"/><ellipse cx="486.5" cy="698.0" rx="2.6" ry="1.2" transform="rotate(0 486.5 698.0)"/><ellipse cx="484.7" cy="701.0" rx="2.6" ry="1.2" transform="rotate(60 484.7 701.0)"/><ellipse cx="481.2" cy="701.0" rx="2.6" ry="1.2" transform="rotate(120 481.2 701.0)"/><ellipse cx="479.5" cy="698.0" rx="2.6" ry="1.2" transform="rotate(180 479.5 698.0)"/><ellipse cx="481.2" cy="694.9" rx="2.6" ry="1.2" transform="rotate(240 481.2 694.9)"/><ellipse cx="484.7" cy="694.9" rx="2.6" ry="1.2" transform="rotate(300 484.7 694.9)"/><ellipse cx="738.0" cy="440.0" rx="4.9" ry="2.3" transform="rotate(0 738.0 440.0)"/><ellipse cx="736.1" cy="444.6" rx="4.9" ry="2.3" transform="rotate(45 736.1 444.6)"/><ellipse cx="731.5" cy="446.5" rx="4.9" ry="2.3" transform="rotate(90 731.5 446.5)"/><ellipse cx="726.9" cy="444.6" rx="4.9" ry="2.3" transform="rotate(135 726.9 444.6)"/><ellipse cx="725.0" cy="440.0" rx="4.9" ry="2.3" transform="rotate(180 725.0 440.0)"/><ellipse cx="726.9" cy="435.3" rx="4.9" ry="2.3" transform="rotate(225 726.9 435.3)"/><ellipse cx="731.5" cy="433.4" rx="4.9" ry="2.3" transform="rotate(270 731.5 433.4)"/><ellipse cx="736.1" cy="435.3" rx="4.9" ry="2.3" transform="rotate(315 736.1 435.3)"/><ellipse cx="653.8" cy="448.5" rx="4.6" ry="2.2" transform="rotate(0 653.8 448.5)"/><ellipse cx="650.7" cy="453.8" rx="4.6" ry="2.2" transform="rotate(60 650.7 453.8)"/><ellipse cx="644.6" cy="453.8" rx="4.6" ry="2.2" transform="rotate(120 644.6 453.8)"/><ellipse cx="641.5" cy="448.5" rx="4.6" ry="2.2" transform="rotate(180 641.5 448.5)"/><ellipse cx="644.6" cy="443.2" rx="4.6" ry="2.2" transform="rotate(240 644.6 443.2)"/><ellipse cx="650.7" cy="443.2" rx="4.6" ry="2.2" transform="rotate(300 650.7 443.2)"/><ellipse cx="516.9" cy="859.9" rx="3.7" ry="1.7" transform="rotate(0 516.9 859.9)"/><ellipse cx="514.4" cy="864.2" rx="3.7" ry="1.7" transform="rotate(60 514.4 864.2)"/><ellipse cx="509.5" cy="864.2" rx="3.7" ry="1.7" transform="rotate(120 509.5 864.2)"/><ellipse cx="507.0" cy="859.9" rx="3.7" ry="1.7" transform="rotate(180 507.0 859.9)"/><ellipse cx="509.5" cy="855.6" rx="3.7" ry="1.7" transform="rotate(240 509.5 855.6)"/><ellipse cx="514.4" cy="855.6" rx="3.7" ry="1.7" transform="rotate(300 514.4 855.6)"/><ellipse cx="609.0" cy="511.4" rx="2.6" ry="1.2" transform="rotate(0 609.0 511.4)"/><ellipse cx="606.6" cy="514.7" rx="2.6" ry="1.2" transform="rotate(72 606.6 514.7)"/><ellipse cx="602.7" cy="513.5" rx="2.6" ry="1.2" transform="rotate(144 602.7 513.5)"/><ellipse cx="602.7" cy="509.4" rx="2.6" ry="1.2" transform="rotate(216 602.7 509.4)"/><ellipse cx="606.6" cy="508.1" rx="2.6" ry="1.2" transform="rotate(288 606.6 508.1)"/><ellipse cx="525.4" cy="620.0" rx="2.4" ry="1.1" transform="rotate(0 525.4 620.0)"/><ellipse cx="523.2" cy="623.1" rx="2.4" ry="1.1" transform="rotate(72 523.2 623.1)"/><ellipse cx="519.6" cy="621.9" rx="2.4" ry="1.1" transform="rotate(144 519.6 621.9)"/><ellipse cx="519.6" cy="618.1" rx="2.4" ry="1.1" transform="rotate(216 519.6 618.1)"/><ellipse cx="523.2" cy="616.9" rx="2.4" ry="1.1" transform="rotate(288 523.2 616.9)"/><ellipse cx="785.5" cy="667.4" rx="2.6" ry="1.2" transform="rotate(0 785.5 667.4)"/><ellipse cx="784.5" cy="669.9" rx="2.6" ry="1.2" transform="rotate(45 784.5 669.9)"/><ellipse cx="782.0" cy="670.9" rx="2.6" ry="1.2" transform="rotate(90 782.0 670.9)"/><ellipse cx="779.5" cy="669.9" rx="2.6" ry="1.2" transform="rotate(135 779.5 669.9)"/><ellipse cx="778.5" cy="667.4" rx="2.6" ry="1.2" transform="rotate(180 778.5 667.4)"/><ellipse cx="779.5" cy="664.9" rx="2.6" ry="1.2" transform="rotate(225 779.5 664.9)"/><ellipse cx="782.0" cy="663.9" rx="2.6" ry="1.2" transform="rotate(270 782.0 663.9)"/><ellipse cx="784.5" cy="664.9" rx="2.6" ry="1.2" transform="rotate(315 784.5 664.9)"/><ellipse cx="456.1" cy="551.7" rx="3.6" ry="1.7" transform="rotate(0 456.1 551.7)"/><ellipse cx="452.8" cy="556.3" rx="3.6" ry="1.7" transform="rotate(72 452.8 556.3)"/><ellipse cx="447.4" cy="554.6" rx="3.6" ry="1.7" transform="rotate(144 447.4 554.6)"/><ellipse cx="447.4" cy="548.9" rx="3.6" ry="1.7" transform="rotate(216 447.4 548.9)"/><ellipse cx="452.8" cy="547.1" rx="3.6" ry="1.7" transform="rotate(288 452.8 547.1)"/><ellipse cx="450.2" cy="772.6" rx="4.1" ry="1.9" transform="rotate(0 450.2 772.6)"/><ellipse cx="448.6" cy="776.4" rx="4.1" ry="1.9" transform="rotate(45 448.6 776.4)"/><ellipse cx="444.8" cy="778.0" rx="4.1" ry="1.9" transform="rotate(90 444.8 778.0)"/><ellipse cx="440.9" cy="776.4" rx="4.1" ry="1.9" transform="rotate(135 440.9 776.4)"/><ellipse cx="439.3" cy="772.6" rx="4.1" ry="1.9" transform="rotate(180 439.3 772.6)"/><ellipse cx="440.9" cy="768.7" rx="4.1" ry="1.9" transform="rotate(225 440.9 768.7)"/><ellipse cx="444.8" cy="767.1" rx="4.1" ry="1.9" transform="rotate(270 444.8 767.1)"/><ellipse cx="448.6" cy="768.7" rx="4.1" ry="1.9" transform="rotate(315 448.6 768.7)"/><ellipse cx="623.3" cy="710.5" rx="3.9" ry="1.8" transform="rotate(0 623.3 710.5)"/><ellipse cx="620.7" cy="715.1" rx="3.9" ry="1.8" transform="rotate(60 620.7 715.1)"/><ellipse cx="615.5" cy="715.1" rx="3.9" ry="1.8" transform="rotate(120 615.5 715.1)"/><ellipse cx="612.9" cy="710.5" rx="3.9" ry="1.8" transform="rotate(180 612.9 710.5)"/><ellipse cx="615.5" cy="706.0" rx="3.9" ry="1.8" transform="rotate(240 615.5 706.0)"/><ellipse cx="620.7" cy="706.0" rx="3.9" ry="1.8" transform="rotate(300 620.7 706.0)"/><ellipse cx="714.1" cy="558.3" rx="4.9" ry="2.3" transform="rotate(0 714.1 558.3)"/><ellipse cx="710.8" cy="563.9" rx="4.9" ry="2.3" transform="rotate(60 710.8 563.9)"/><ellipse cx="704.3" cy="563.9" rx="4.9" ry="2.3" transform="rotate(120 704.3 563.9)"/><ellipse cx="701.1" cy="558.3" rx="4.9" ry="2.3" transform="rotate(180 701.1 558.3)"/><ellipse cx="704.3" cy="552.7" rx="4.9" ry="2.3" transform="rotate(240 704.3 552.7)"/><ellipse cx="710.8" cy="552.7" rx="4.9" ry="2.3" transform="rotate(300 710.8 552.7)"/><ellipse cx="562.0" cy="394.2" rx="4.9" ry="2.3" transform="rotate(0 562.0 394.2)"/><ellipse cx="560.1" cy="398.8" rx="4.9" ry="2.3" transform="rotate(45 560.1 398.8)"/><ellipse cx="555.5" cy="400.7" rx="4.9" ry="2.3" transform="rotate(90 555.5 400.7)"/><ellipse cx="550.8" cy="398.8" rx="4.9" ry="2.3" transform="rotate(135 550.8 398.8)"/><ellipse cx="548.9" cy="394.2" rx="4.9" ry="2.3" transform="rotate(180 548.9 394.2)"/><ellipse cx="550.8" cy="389.6" rx="4.9" ry="2.3" transform="rotate(225 550.8 389.6)"/><ellipse cx="555.5" cy="387.6" rx="4.9" ry="2.3" transform="rotate(270 555.5 387.6)"/><ellipse cx="560.1" cy="389.6" rx="4.9" ry="2.3" transform="rotate(315 560.1 389.6)"/><ellipse cx="475.0" cy="231.0" rx="3.5" ry="1.6" transform="rotate(0 475.0 231.0)"/><ellipse cx="472.7" cy="235.1" rx="3.5" ry="1.6" transform="rotate(60 472.7 235.1)"/><ellipse cx="468.0" cy="235.1" rx="3.5" ry="1.6" transform="rotate(120 468.0 235.1)"/><ellipse cx="465.6" cy="231.0" rx="3.5" ry="1.6" transform="rotate(180 465.6 231.0)"/><ellipse cx="468.0" cy="226.9" rx="3.5" ry="1.6" transform="rotate(240 468.0 226.9)"/><ellipse cx="472.7" cy="226.9" rx="3.5" ry="1.6" transform="rotate(300 472.7 226.9)"/><ellipse cx="411.8" cy="639.8" rx="4.7" ry="2.2" transform="rotate(0 411.8 639.8)"/><ellipse cx="408.7" cy="645.2" rx="4.7" ry="2.2" transform="rotate(60 408.7 645.2)"/><ellipse cx="402.4" cy="645.2" rx="4.7" ry="2.2" transform="rotate(120 402.4 645.2)"/><ellipse cx="399.3" cy="639.8" rx="4.7" ry="2.2" transform="rotate(180 399.3 639.8)"/><ellipse cx="402.4" cy="634.4" rx="4.7" ry="2.2" transform="rotate(240 402.4 634.4)"/><ellipse cx="408.7" cy="634.4" rx="4.7" ry="2.2" transform="rotate(300 408.7 634.4)"/><ellipse cx="426.1" cy="763.0" rx="3.3" ry="1.6" transform="rotate(0 426.1 763.0)"/><ellipse cx="423.0" cy="767.2" rx="3.3" ry="1.6" transform="rotate(72 423.0 767.2)"/><ellipse cx="418.1" cy="765.6" rx="3.3" ry="1.6" transform="rotate(144 418.1 765.6)"/><ellipse cx="418.1" cy="760.4" rx="3.3" ry="1.6" transform="rotate(216 418.1 760.4)"/><ellipse cx="423.0" cy="758.7" rx="3.3" ry="1.6" transform="rotate(288 423.0 758.7)"/><ellipse cx="451.3" cy="459.0" rx="4.5" ry="2.1" transform="rotate(0 451.3 459.0)"/><ellipse cx="449.5" cy="463.2" rx="4.5" ry="2.1" transform="rotate(45 449.5 463.2)"/><ellipse cx="445.3" cy="465.0" rx="4.5" ry="2.1" transform="rotate(90 445.3 465.0)"/><ellipse cx="441.0" cy="463.2" rx="4.5" ry="2.1" transform="rotate(135 441.0 463.2)"/><ellipse cx="439.3" cy="459.0" rx="4.5" ry="2.1" transform="rotate(180 439.3 459.0)"/><ellipse cx="441.0" cy="454.8" rx="4.5" ry="2.1" transform="rotate(225 441.0 454.8)"/><ellipse cx="445.3" cy="453.0" rx="4.5" ry="2.1" transform="rotate(270 445.3 453.0)"/><ellipse cx="449.5" cy="454.8" rx="4.5" ry="2.1" transform="rotate(315 449.5 454.8)"/><ellipse cx="442.0" cy="664.1" rx="4.4" ry="2.1" transform="rotate(0 442.0 664.1)"/><ellipse cx="438.0" cy="669.7" rx="4.4" ry="2.1" transform="rotate(72 438.0 669.7)"/><ellipse cx="431.4" cy="667.6" rx="4.4" ry="2.1" transform="rotate(144 431.4 667.6)"/><ellipse cx="431.4" cy="660.7" rx="4.4" ry="2.1" transform="rotate(216 431.4 660.7)"/><ellipse cx="438.0" cy="658.5" rx="4.4" ry="2.1" transform="rotate(288 438.0 658.5)"/><ellipse cx="490.4" cy="723.1" rx="3.3" ry="1.5" transform="rotate(0 490.4 723.1)"/><ellipse cx="489.1" cy="726.2" rx="3.3" ry="1.5" transform="rotate(45 489.1 726.2)"/><ellipse cx="486.0" cy="727.4" rx="3.3" ry="1.5" transform="rotate(90 486.0 727.4)"/><ellipse cx="482.9" cy="726.2" rx="3.3" ry="1.5" transform="rotate(135 482.9 726.2)"/><ellipse cx="481.6" cy="723.1" rx="3.3" ry="1.5" transform="rotate(180 481.6 723.1)"/><ellipse cx="482.9" cy="720.0" rx="3.3" ry="1.5" transform="rotate(225 482.9 720.0)"/><ellipse cx="486.0" cy="718.7" rx="3.3" ry="1.5" transform="rotate(270 486.0 718.7)"/><ellipse cx="489.1" cy="720.0" rx="3.3" ry="1.5" transform="rotate(315 489.1 720.0)"/><ellipse cx="708.0" cy="854.7" rx="4.5" ry="2.1" transform="rotate(0 708.0 854.7)"/><ellipse cx="705.1" cy="859.8" rx="4.5" ry="2.1" transform="rotate(60 705.1 859.8)"/><ellipse cx="699.1" cy="859.8" rx="4.5" ry="2.1" transform="rotate(120 699.1 859.8)"/><ellipse cx="696.2" cy="854.7" rx="4.5" ry="2.1" transform="rotate(180 696.2 854.7)"/><ellipse cx="699.1" cy="849.5" rx="4.5" ry="2.1" transform="rotate(240 699.1 849.5)"/><ellipse cx="705.1" cy="849.5" rx="4.5" ry="2.1" transform="rotate(300 705.1 849.5)"/><ellipse cx="471.6" cy="392.2" rx="4.4" ry="2.1" transform="rotate(0 471.6 392.2)"/><ellipse cx="468.6" cy="397.3" rx="4.4" ry="2.1" transform="rotate(60 468.6 397.3)"/><ellipse cx="462.7" cy="397.3" rx="4.4" ry="2.1" transform="rotate(120 462.7 397.3)"/><ellipse cx="459.7" cy="392.2" rx="4.4" ry="2.1" transform="rotate(180 459.7 392.2)"/><ellipse cx="462.7" cy="387.1" rx="4.4" ry="2.1" transform="rotate(240 462.7 387.1)"/><ellipse cx="468.6" cy="387.1" rx="4.4" ry="2.1" transform="rotate(300 468.6 387.1)"/><ellipse cx="718.3" cy="569.3" rx="3.3" ry="1.5" transform="rotate(0 718.3 569.3)"/><ellipse cx="717.0" cy="572.5" rx="3.3" ry="1.5" transform="rotate(45 717.0 572.5)"/><ellipse cx="713.9" cy="573.7" rx="3.3" ry="1.5" transform="rotate(90 713.9 573.7)"/><ellipse cx="710.8" cy="572.5" rx="3.3" ry="1.5" transform="rotate(135 710.8 572.5)"/><ellipse cx="709.5" cy="569.3" rx="3.3" ry="1.5" transform="rotate(180 709.5 569.3)"/><ellipse cx="710.8" cy="566.2" rx="3.3" ry="1.5" transform="rotate(225 710.8 566.2)"/><ellipse cx="713.9" cy="564.9" rx="3.3" ry="1.5" transform="rotate(270 713.9 564.9)"/><ellipse cx="717.0" cy="566.2" rx="3.3" ry="1.5" transform="rotate(315 717.0 566.2)"/><ellipse cx="478.2" cy="747.1" rx="2.7" ry="1.3" transform="rotate(0 478.2 747.1)"/><ellipse cx="476.4" cy="750.2" rx="2.7" ry="1.3" transform="rotate(60 476.4 750.2)"/><ellipse cx="472.7" cy="750.2" rx="2.7" ry="1.3" transform="rotate(120 472.7 750.2)"/><ellipse cx="470.9" cy="747.1" rx="2.7" ry="1.3" transform="rotate(180 470.9 747.1)"/><ellipse cx="472.7" cy="743.9" rx="2.7" ry="1.3" transform="rotate(240 472.7 743.9)"/><ellipse cx="476.4" cy="743.9" rx="2.7" ry="1.3" transform="rotate(300 476.4 743.9)"/><ellipse cx="426.2" cy="775.7" rx="4.4" ry="2.1" transform="rotate(0 426.2 775.7)"/><ellipse cx="424.5" cy="779.9" rx="4.4" ry="2.1" transform="rotate(45 424.5 779.9)"/><ellipse cx="420.3" cy="781.6" rx="4.4" ry="2.1" transform="rotate(90 420.3 781.6)"/><ellipse cx="416.2" cy="779.9" rx="4.4" ry="2.1" transform="rotate(135 416.2 779.9)"/><ellipse cx="414.5" cy="775.7" rx="4.4" ry="2.1" transform="rotate(180 414.5 775.7)"/><ellipse cx="416.2" cy="771.5" rx="4.4" ry="2.1" transform="rotate(225 416.2 771.5)"/><ellipse cx="420.3" cy="769.8" rx="4.4" ry="2.1" transform="rotate(270 420.3 769.8)"/><ellipse cx="424.5" cy="771.5" rx="4.4" ry="2.1" transform="rotate(315 424.5 771.5)"/><ellipse cx="514.6" cy="486.6" rx="4.9" ry="2.3" transform="rotate(0 514.6 486.6)"/><ellipse cx="512.7" cy="491.2" rx="4.9" ry="2.3" transform="rotate(45 512.7 491.2)"/><ellipse cx="508.1" cy="493.1" rx="4.9" ry="2.3" transform="rotate(90 508.1 493.1)"/><ellipse cx="503.4" cy="491.2" rx="4.9" ry="2.3" transform="rotate(135 503.4 491.2)"/><ellipse cx="501.5" cy="486.6" rx="4.9" ry="2.3" transform="rotate(180 501.5 486.6)"/><ellipse cx="503.4" cy="482.0" rx="4.9" ry="2.3" transform="rotate(225 503.4 482.0)"/><ellipse cx="508.1" cy="480.0" rx="4.9" ry="2.3" transform="rotate(270 508.1 480.0)"/><ellipse cx="512.7" cy="482.0" rx="4.9" ry="2.3" transform="rotate(315 512.7 482.0)"/><ellipse cx="442.0" cy="500.7" rx="4.3" ry="2.0" transform="rotate(0 442.0 500.7)"/><ellipse cx="440.3" cy="504.8" rx="4.3" ry="2.0" transform="rotate(45 440.3 504.8)"/><ellipse cx="436.2" cy="506.5" rx="4.3" ry="2.0" transform="rotate(90 436.2 506.5)"/><ellipse cx="432.1" cy="504.8" rx="4.3" ry="2.0" transform="rotate(135 432.1 504.8)"/><ellipse cx="430.4" cy="500.7" rx="4.3" ry="2.0" transform="rotate(180 430.4 500.7)"/><ellipse cx="432.1" cy="496.6" rx="4.3" ry="2.0" transform="rotate(225 432.1 496.6)"/><ellipse cx="436.2" cy="494.9" rx="4.3" ry="2.0" transform="rotate(270 436.2 494.9)"/><ellipse cx="440.3" cy="496.6" rx="4.3" ry="2.0" transform="rotate(315 440.3 496.6)"/><ellipse cx="672.2" cy="548.1" rx="4.6" ry="2.1" transform="rotate(0 672.2 548.1)"/><ellipse cx="669.2" cy="553.4" rx="4.6" ry="2.1" transform="rotate(60 669.2 553.4)"/><ellipse cx="663.1" cy="553.4" rx="4.6" ry="2.1" transform="rotate(120 663.1 553.4)"/><ellipse cx="660.1" cy="548.1" rx="4.6" ry="2.1" transform="rotate(180 660.1 548.1)"/><ellipse cx="663.1" cy="542.9" rx="4.6" ry="2.1" transform="rotate(240 663.1 542.9)"/><ellipse cx="669.2" cy="542.9" rx="4.6" ry="2.1" transform="rotate(300 669.2 542.9)"/><ellipse cx="520.9" cy="227.1" rx="3.5" ry="1.6" transform="rotate(0 520.9 227.1)"/><ellipse cx="519.5" cy="230.4" rx="3.5" ry="1.6" transform="rotate(45 519.5 230.4)"/><ellipse cx="516.3" cy="231.7" rx="3.5" ry="1.6" transform="rotate(90 516.3 231.7)"/><ellipse cx="513.0" cy="230.4" rx="3.5" ry="1.6" transform="rotate(135 513.0 230.4)"/><ellipse cx="511.6" cy="227.1" rx="3.5" ry="1.6" transform="rotate(180 511.6 227.1)"/><ellipse cx="513.0" cy="223.8" rx="3.5" ry="1.6" transform="rotate(225 513.0 223.8)"/><ellipse cx="516.3" cy="222.5" rx="3.5" ry="1.6" transform="rotate(270 516.3 222.5)"/><ellipse cx="519.5" cy="223.8" rx="3.5" ry="1.6" transform="rotate(315 519.5 223.8)"/><ellipse cx="456.2" cy="521.9" rx="4.8" ry="2.2" transform="rotate(0 456.2 521.9)"/><ellipse cx="451.8" cy="527.9" rx="4.8" ry="2.2" transform="rotate(72 451.8 527.9)"/><ellipse cx="444.7" cy="525.6" rx="4.8" ry="2.2" transform="rotate(144 444.7 525.6)"/><ellipse cx="444.7" cy="518.2" rx="4.8" ry="2.2" transform="rotate(216 444.7 518.2)"/><ellipse cx="451.8" cy="515.9" rx="4.8" ry="2.2" transform="rotate(288 451.8 515.9)"/><ellipse cx="521.1" cy="599.6" rx="4.8" ry="2.2" transform="rotate(0 521.1 599.6)"/><ellipse cx="519.2" cy="604.0" rx="4.8" ry="2.2" transform="rotate(45 519.2 604.0)"/><ellipse cx="514.7" cy="605.9" rx="4.8" ry="2.2" transform="rotate(90 514.7 605.9)"/><ellipse cx="510.2" cy="604.0" rx="4.8" ry="2.2" transform="rotate(135 510.2 604.0)"/><ellipse cx="508.4" cy="599.6" rx="4.8" ry="2.2" transform="rotate(180 508.4 599.6)"/><ellipse cx="510.2" cy="595.1" rx="4.8" ry="2.2" transform="rotate(225 510.2 595.1)"/><ellipse cx="514.7" cy="593.2" rx="4.8" ry="2.2" transform="rotate(270 514.7 593.2)"/><ellipse cx="519.2" cy="595.1" rx="4.8" ry="2.2" transform="rotate(315 519.2 595.1)"/><ellipse cx="671.5" cy="595.1" rx="3.1" ry="1.5" transform="rotate(0 671.5 595.1)"/><ellipse cx="668.7" cy="599.0" rx="3.1" ry="1.5" transform="rotate(72 668.7 599.0)"/><ellipse cx="664.0" cy="597.5" rx="3.1" ry="1.5" transform="rotate(144 664.0 597.5)"/><ellipse cx="664.0" cy="592.6" rx="3.1" ry="1.5" transform="rotate(216 664.0 592.6)"/><ellipse cx="668.7" cy="591.1" rx="3.1" ry="1.5" transform="rotate(288 668.7 591.1)"/><ellipse cx="754.2" cy="726.8" rx="5.2" ry="2.4" transform="rotate(0 754.2 726.8)"/><ellipse cx="749.5" cy="733.3" rx="5.2" ry="2.4" transform="rotate(72 749.5 733.3)"/><ellipse cx="741.8" cy="730.8" rx="5.2" ry="2.4" transform="rotate(144 741.8 730.8)"/><ellipse cx="741.8" cy="722.8" rx="5.2" ry="2.4" transform="rotate(216 741.8 722.8)"/><ellipse cx="749.5" cy="720.3" rx="5.2" ry="2.4" transform="rotate(288 749.5 720.3)"/><ellipse cx="680.9" cy="675.2" rx="4.3" ry="2.0" transform="rotate(0 680.9 675.2)"/><ellipse cx="678.0" cy="680.2" rx="4.3" ry="2.0" transform="rotate(60 678.0 680.2)"/><ellipse cx="672.3" cy="680.2" rx="4.3" ry="2.0" transform="rotate(120 672.3 680.2)"/><ellipse cx="669.4" cy="675.2" rx="4.3" ry="2.0" transform="rotate(180 669.4 675.2)"/><ellipse cx="672.3" cy="670.3" rx="4.3" ry="2.0" transform="rotate(240 672.3 670.3)"/><ellipse cx="678.0" cy="670.3" rx="4.3" ry="2.0" transform="rotate(300 678.0 670.3)"/><ellipse cx="454.9" cy="314.8" rx="4.8" ry="2.2" transform="rotate(0 454.9 314.8)"/><ellipse cx="450.4" cy="320.8" rx="4.8" ry="2.2" transform="rotate(72 450.4 320.8)"/><ellipse cx="443.3" cy="318.5" rx="4.8" ry="2.2" transform="rotate(144 443.3 318.5)"/><ellipse cx="443.3" cy="311.0" rx="4.8" ry="2.2" transform="rotate(216 443.3 311.0)"/><ellipse cx="450.4" cy="308.7" rx="4.8" ry="2.2" transform="rotate(288 450.4 308.7)"/><ellipse cx="719.3" cy="828.6" rx="5.0" ry="2.3" transform="rotate(0 719.3 828.6)"/><ellipse cx="717.4" cy="833.3" rx="5.0" ry="2.3" transform="rotate(45 717.4 833.3)"/><ellipse cx="712.7" cy="835.2" rx="5.0" ry="2.3" transform="rotate(90 712.7 835.2)"/><ellipse cx="707.9" cy="833.3" rx="5.0" ry="2.3" transform="rotate(135 707.9 833.3)"/><ellipse cx="706.0" cy="828.6" rx="5.0" ry="2.3" transform="rotate(180 706.0 828.6)"/><ellipse cx="707.9" cy="823.8" rx="5.0" ry="2.3" transform="rotate(225 707.9 823.8)"/><ellipse cx="712.7" cy="821.9" rx="5.0" ry="2.3" transform="rotate(270 712.7 821.9)"/><ellipse cx="717.4" cy="823.8" rx="5.0" ry="2.3" transform="rotate(315 717.4 823.8)"/><ellipse cx="640.6" cy="367.2" rx="2.4" ry="1.1" transform="rotate(0 640.6 367.2)"/><ellipse cx="638.9" cy="370.1" rx="2.4" ry="1.1" transform="rotate(60 638.9 370.1)"/><ellipse cx="635.7" cy="370.1" rx="2.4" ry="1.1" transform="rotate(120 635.7 370.1)"/><ellipse cx="634.1" cy="367.2" rx="2.4" ry="1.1" transform="rotate(180 634.1 367.2)"/><ellipse cx="635.7" cy="364.4" rx="2.4" ry="1.1" transform="rotate(240 635.7 364.4)"/><ellipse cx="638.9" cy="364.4" rx="2.4" ry="1.1" transform="rotate(300 638.9 364.4)"/><ellipse cx="648.1" cy="673.3" rx="3.0" ry="1.4" transform="rotate(0 648.1 673.3)"/><ellipse cx="646.1" cy="676.7" rx="3.0" ry="1.4" transform="rotate(60 646.1 676.7)"/><ellipse cx="642.2" cy="676.7" rx="3.0" ry="1.4" transform="rotate(120 642.2 676.7)"/><ellipse cx="640.2" cy="673.3" rx="3.0" ry="1.4" transform="rotate(180 640.2 673.3)"/><ellipse cx="642.2" cy="669.8" rx="3.0" ry="1.4" transform="rotate(240 642.2 669.8)"/><ellipse cx="646.1" cy="669.8" rx="3.0" ry="1.4" transform="rotate(300 646.1 669.8)"/><ellipse cx="414.4" cy="455.1" rx="4.7" ry="2.2" transform="rotate(0 414.4 455.1)"/><ellipse cx="411.3" cy="460.6" rx="4.7" ry="2.2" transform="rotate(60 411.3 460.6)"/><ellipse cx="405.0" cy="460.6" rx="4.7" ry="2.2" transform="rotate(120 405.0 460.6)"/><ellipse cx="401.8" cy="455.1" rx="4.7" ry="2.2" transform="rotate(180 401.8 455.1)"/><ellipse cx="405.0" cy="449.6" rx="4.7" ry="2.2" transform="rotate(240 405.0 449.6)"/><ellipse cx="411.3" cy="449.6" rx="4.7" ry="2.2" transform="rotate(300 411.3 449.6)"/><ellipse cx="540.7" cy="249.7" rx="3.3" ry="1.6" transform="rotate(0 540.7 249.7)"/><ellipse cx="538.4" cy="253.6" rx="3.3" ry="1.6" transform="rotate(60 538.4 253.6)"/><ellipse cx="534.0" cy="253.6" rx="3.3" ry="1.6" transform="rotate(120 534.0 253.6)"/><ellipse cx="531.8" cy="249.7" rx="3.3" ry="1.6" transform="rotate(180 531.8 249.7)"/><ellipse cx="534.0" cy="245.8" rx="3.3" ry="1.6" transform="rotate(240 534.0 245.8)"/><ellipse cx="538.4" cy="245.8" rx="3.3" ry="1.6" transform="rotate(300 538.4 245.8)"/><ellipse cx="741.1" cy="484.9" rx="3.2" ry="1.5" transform="rotate(0 741.1 484.9)"/><ellipse cx="739.0" cy="488.7" rx="3.2" ry="1.5" transform="rotate(60 739.0 488.7)"/><ellipse cx="734.6" cy="488.7" rx="3.2" ry="1.5" transform="rotate(120 734.6 488.7)"/><ellipse cx="732.5" cy="484.9" rx="3.2" ry="1.5" transform="rotate(180 732.5 484.9)"/><ellipse cx="734.6" cy="481.2" rx="3.2" ry="1.5" transform="rotate(240 734.6 481.2)"/><ellipse cx="739.0" cy="481.2" rx="3.2" ry="1.5" transform="rotate(300 739.0 481.2)"/><ellipse cx="396.8" cy="734.1" rx="4.9" ry="2.3" transform="rotate(0 396.8 734.1)"/><ellipse cx="394.9" cy="738.7" rx="4.9" ry="2.3" transform="rotate(45 394.9 738.7)"/><ellipse cx="390.3" cy="740.6" rx="4.9" ry="2.3" transform="rotate(90 390.3 740.6)"/><ellipse cx="385.7" cy="738.7" rx="4.9" ry="2.3" transform="rotate(135 385.7 738.7)"/><ellipse cx="383.8" cy="734.1" rx="4.9" ry="2.3" transform="rotate(180 383.8 734.1)"/><ellipse cx="385.7" cy="729.5" rx="4.9" ry="2.3" transform="rotate(225 385.7 729.5)"/><ellipse cx="390.3" cy="727.6" rx="4.9" ry="2.3" transform="rotate(270 390.3 727.6)"/><ellipse cx="394.9" cy="729.5" rx="4.9" ry="2.3" transform="rotate(315 394.9 729.5)"/><ellipse cx="666.5" cy="296.4" rx="5.1" ry="2.4" transform="rotate(0 666.5 296.4)"/><ellipse cx="661.8" cy="302.9" rx="5.1" ry="2.4" transform="rotate(72 661.8 302.9)"/><ellipse cx="654.3" cy="300.4" rx="5.1" ry="2.4" transform="rotate(144 654.3 300.4)"/><ellipse cx="654.3" cy="292.5" rx="5.1" ry="2.4" transform="rotate(216 654.3 292.5)"/><ellipse cx="661.8" cy="290.0" rx="5.1" ry="2.4" transform="rotate(288 661.8 290.0)"/><ellipse cx="743.0" cy="714.0" rx="4.1" ry="1.9" transform="rotate(0 743.0 714.0)"/><ellipse cx="741.4" cy="717.9" rx="4.1" ry="1.9" transform="rotate(45 741.4 717.9)"/><ellipse cx="737.5" cy="719.5" rx="4.1" ry="1.9" transform="rotate(90 737.5 719.5)"/><ellipse cx="733.6" cy="717.9" rx="4.1" ry="1.9" transform="rotate(135 733.6 717.9)"/><ellipse cx="732.0" cy="714.0" rx="4.1" ry="1.9" transform="rotate(180 732.0 714.0)"/><ellipse cx="733.6" cy="710.1" rx="4.1" ry="1.9" transform="rotate(225 733.6 710.1)"/><ellipse cx="737.5" cy="708.5" rx="4.1" ry="1.9" transform="rotate(270 737.5 708.5)"/><ellipse cx="741.4" cy="710.1" rx="4.1" ry="1.9" transform="rotate(315 741.4 710.1)"/><ellipse cx="651.4" cy="297.9" rx="3.0" ry="1.4" transform="rotate(0 651.4 297.9)"/><ellipse cx="649.3" cy="301.4" rx="3.0" ry="1.4" transform="rotate(60 649.3 301.4)"/><ellipse cx="645.3" cy="301.4" rx="3.0" ry="1.4" transform="rotate(120 645.3 301.4)"/><ellipse cx="643.3" cy="297.9" rx="3.0" ry="1.4" transform="rotate(180 643.3 297.9)"/><ellipse cx="645.3" cy="294.4" rx="3.0" ry="1.4" transform="rotate(240 645.3 294.4)"/><ellipse cx="649.3" cy="294.4" rx="3.0" ry="1.4" transform="rotate(300 649.3 294.4)"/><ellipse cx="657.9" cy="505.5" rx="2.4" ry="1.1" transform="rotate(0 657.9 505.5)"/><ellipse cx="656.3" cy="508.3" rx="2.4" ry="1.1" transform="rotate(60 656.3 508.3)"/><ellipse cx="653.1" cy="508.3" rx="2.4" ry="1.1" transform="rotate(120 653.1 508.3)"/><ellipse cx="651.5" cy="505.5" rx="2.4" ry="1.1" transform="rotate(180 651.5 505.5)"/><ellipse cx="653.1" cy="502.7" rx="2.4" ry="1.1" transform="rotate(240 653.1 502.7)"/><ellipse cx="656.3" cy="502.7" rx="2.4" ry="1.1" transform="rotate(300 656.3 502.7)"/><ellipse cx="689.4" cy="234.0" rx="4.7" ry="2.2" transform="rotate(0 689.4 234.0)"/><ellipse cx="686.3" cy="239.5" rx="4.7" ry="2.2" transform="rotate(60 686.3 239.5)"/><ellipse cx="680.1" cy="239.5" rx="4.7" ry="2.2" transform="rotate(120 680.1 239.5)"/><ellipse cx="676.9" cy="234.0" rx="4.7" ry="2.2" transform="rotate(180 676.9 234.0)"/><ellipse cx="680.1" cy="228.6" rx="4.7" ry="2.2" transform="rotate(240 680.1 228.6)"/><ellipse cx="686.3" cy="228.6" rx="4.7" ry="2.2" transform="rotate(300 686.3 228.6)"/><ellipse cx="767.6" cy="328.4" rx="2.9" ry="1.3" transform="rotate(0 767.6 328.4)"/><ellipse cx="765.7" cy="331.7" rx="2.9" ry="1.3" transform="rotate(60 765.7 331.7)"/><ellipse cx="761.8" cy="331.7" rx="2.9" ry="1.3" transform="rotate(120 761.8 331.7)"/><ellipse cx="759.9" cy="328.4" rx="2.9" ry="1.3" transform="rotate(180 759.9 328.4)"/><ellipse cx="761.8" cy="325.0" rx="2.9" ry="1.3" transform="rotate(240 761.8 325.0)"/><ellipse cx="765.7" cy="325.0" rx="2.9" ry="1.3" transform="rotate(300 765.7 325.0)"/><ellipse cx="642.1" cy="705.0" rx="4.9" ry="2.3" transform="rotate(0 642.1 705.0)"/><ellipse cx="640.2" cy="709.7" rx="4.9" ry="2.3" transform="rotate(45 640.2 709.7)"/><ellipse cx="635.6" cy="711.6" rx="4.9" ry="2.3" transform="rotate(90 635.6 711.6)"/><ellipse cx="630.9" cy="709.7" rx="4.9" ry="2.3" transform="rotate(135 630.9 709.7)"/><ellipse cx="629.0" cy="705.0" rx="4.9" ry="2.3" transform="rotate(180 629.0 705.0)"/><ellipse cx="630.9" cy="700.4" rx="4.9" ry="2.3" transform="rotate(225 630.9 700.4)"/><ellipse cx="635.6" cy="698.5" rx="4.9" ry="2.3" transform="rotate(270 635.6 698.5)"/><ellipse cx="640.2" cy="700.4" rx="4.9" ry="2.3" transform="rotate(315 640.2 700.4)"/><ellipse cx="388.8" cy="571.3" rx="2.6" ry="1.2" transform="rotate(0 388.8 571.3)"/><ellipse cx="387.0" cy="574.3" rx="2.6" ry="1.2" transform="rotate(60 387.0 574.3)"/><ellipse cx="383.5" cy="574.3" rx="2.6" ry="1.2" transform="rotate(120 383.5 574.3)"/><ellipse cx="381.7" cy="571.3" rx="2.6" ry="1.2" transform="rotate(180 381.7 571.3)"/><ellipse cx="383.5" cy="568.2" rx="2.6" ry="1.2" transform="rotate(240 383.5 568.2)"/><ellipse cx="387.0" cy="568.2" rx="2.6" ry="1.2" transform="rotate(300 387.0 568.2)"/><ellipse cx="670.4" cy="729.7" rx="2.6" ry="1.2" transform="rotate(0 670.4 729.7)"/><ellipse cx="669.4" cy="732.1" rx="2.6" ry="1.2" transform="rotate(45 669.4 732.1)"/><ellipse cx="666.9" cy="733.1" rx="2.6" ry="1.2" transform="rotate(90 666.9 733.1)"/><ellipse cx="664.5" cy="732.1" rx="2.6" ry="1.2" transform="rotate(135 664.5 732.1)"/><ellipse cx="663.5" cy="729.7" rx="2.6" ry="1.2" transform="rotate(180 663.5 729.7)"/><ellipse cx="664.5" cy="727.2" rx="2.6" ry="1.2" transform="rotate(225 664.5 727.2)"/><ellipse cx="666.9" cy="726.2" rx="2.6" ry="1.2" transform="rotate(270 666.9 726.2)"/><ellipse cx="669.4" cy="727.2" rx="2.6" ry="1.2" transform="rotate(315 669.4 727.2)"/><ellipse cx="689.6" cy="501.0" rx="5.2" ry="2.4" transform="rotate(0 689.6 501.0)"/><ellipse cx="686.1" cy="507.0" rx="5.2" ry="2.4" transform="rotate(60 686.1 507.0)"/><ellipse cx="679.2" cy="507.0" rx="5.2" ry="2.4" transform="rotate(120 679.2 507.0)"/><ellipse cx="675.7" cy="501.0" rx="5.2" ry="2.4" transform="rotate(180 675.7 501.0)"/><ellipse cx="679.2" cy="495.0" rx="5.2" ry="2.4" transform="rotate(240 679.2 495.0)"/><ellipse cx="686.1" cy="495.0" rx="5.2" ry="2.4" transform="rotate(300 686.1 495.0)"/><ellipse cx="536.2" cy="323.9" rx="4.2" ry="1.9" transform="rotate(0 536.2 323.9)"/><ellipse cx="533.4" cy="328.8" rx="4.2" ry="1.9" transform="rotate(60 533.4 328.8)"/><ellipse cx="527.9" cy="328.8" rx="4.2" ry="1.9" transform="rotate(120 527.9 328.8)"/><ellipse cx="525.1" cy="323.9" rx="4.2" ry="1.9" transform="rotate(180 525.1 323.9)"/><ellipse cx="527.9" cy="319.1" rx="4.2" ry="1.9" transform="rotate(240 527.9 319.1)"/><ellipse cx="533.4" cy="319.1" rx="4.2" ry="1.9" transform="rotate(300 533.4 319.1)"/><ellipse cx="683.6" cy="551.6" rx="4.4" ry="2.1" transform="rotate(0 683.6 551.6)"/><ellipse cx="680.6" cy="556.7" rx="4.4" ry="2.1" transform="rotate(60 680.6 556.7)"/><ellipse cx="674.7" cy="556.7" rx="4.4" ry="2.1" transform="rotate(120 674.7 556.7)"/><ellipse cx="671.8" cy="551.6" rx="4.4" ry="2.1" transform="rotate(180 671.8 551.6)"/><ellipse cx="674.7" cy="546.5" rx="4.4" ry="2.1" transform="rotate(240 674.7 546.5)"/><ellipse cx="680.6" cy="546.5" rx="4.4" ry="2.1" transform="rotate(300 680.6 546.5)"/><ellipse cx="602.8" cy="654.1" rx="4.5" ry="2.1" transform="rotate(0 602.8 654.1)"/><ellipse cx="601.0" cy="658.4" rx="4.5" ry="2.1" transform="rotate(45 601.0 658.4)"/><ellipse cx="596.8" cy="660.1" rx="4.5" ry="2.1" transform="rotate(90 596.8 660.1)"/><ellipse cx="592.5" cy="658.4" rx="4.5" ry="2.1" transform="rotate(135 592.5 658.4)"/><ellipse cx="590.8" cy="654.1" rx="4.5" ry="2.1" transform="rotate(180 590.8 654.1)"/><ellipse cx="592.5" cy="649.9" rx="4.5" ry="2.1" transform="rotate(225 592.5 649.9)"/><ellipse cx="596.8" cy="648.1" rx="4.5" ry="2.1" transform="rotate(270 596.8 648.1)"/><ellipse cx="601.0" cy="649.9" rx="4.5" ry="2.1" transform="rotate(315 601.0 649.9)"/><circle cx="562.1" cy="530.1" r="1.9"/><circle cx="696.4" cy="371.2" r="2.1"/><circle cx="597.1" cy="394.6" r="1.3"/><circle cx="685.3" cy="381.4" r="2.2"/><circle cx="616.3" cy="223.6" r="1.5"/><circle cx="597.0" cy="431.7" r="2.7"/><circle cx="479.0" cy="619.3" r="2.3"/><circle cx="542.2" cy="396.2" r="1.9"/><circle cx="668.8" cy="411.2" r="1.9"/><circle cx="645.0" cy="230.7" r="2.6"/><circle cx="716.2" cy="649.3" r="1.7"/><circle cx="710.9" cy="644.0" r="2.2"/><circle cx="607.8" cy="656.5" r="2.3"/><circle cx="647.0" cy="864.3" r="2.3"/><circle cx="514.5" cy="870.9" r="1.9"/><circle cx="435.5" cy="690.7" r="1.2"/><circle cx="452.3" cy="714.2" r="2.3"/><circle cx="572.6" cy="291.7" r="2.4"/><circle cx="733.6" cy="436.9" r="1.5"/><circle cx="480.1" cy="863.8" r="2.8"/><circle cx="409.4" cy="387.7" r="1.3"/><circle cx="715.0" cy="868.4" r="2.8"/><circle cx="762.5" cy="701.7" r="1.4"/><circle cx="428.3" cy="237.0" r="1.3"/><circle cx="400.8" cy="429.9" r="1.9"/><circle cx="661.1" cy="787.1" r="1.9"/><circle cx="745.6" cy="231.6" r="2.0"/><circle cx="698.5" cy="452.0" r="1.4"/><circle cx="522.1" cy="474.5" r="2.0"/><circle cx="570.8" cy="798.0" r="2.6"/><circle cx="523.6" cy="352.9" r="2.0"/><circle cx="555.4" cy="811.6" r="2.4"/><circle cx="726.8" cy="338.6" r="1.9"/><circle cx="721.9" cy="664.1" r="2.2"/><circle cx="475.3" cy="772.7" r="2.0"/><circle cx="492.0" cy="560.0" r="2.0"/><circle cx="619.9" cy="702.0" r="2.6"/><circle cx="478.4" cy="616.9" r="1.3"/><circle cx="470.4" cy="430.5" r="2.4"/><circle cx="789.7" cy="372.5" r="2.5"/><circle cx="519.4" cy="224.6" r="1.6"/><circle cx="500.3" cy="514.3" r="2.6"/><circle cx="606.1" cy="640.8" r="1.3"/><circle cx="456.5" cy="525.2" r="1.6"/><circle cx="391.5" cy="753.4" r="1.8"/><circle cx="723.9" cy="738.4" r="1.9"/><circle cx="456.4" cy="796.0" r="1.8"/><circle cx="386.7" cy="542.3" r="2.6"/><circle cx="759.8" cy="612.5" r="2.0"/><circle cx="769.0" cy="784.8" r="1.5"/><circle cx="489.7" cy="306.5" r="2.5"/><circle cx="750.6" cy="696.9" r="2.1"/><circle cx="578.3" cy="247.5" r="2.4"/><circle cx="727.0" cy="564.8" r="1.5"/><circle cx="684.0" cy="277.5" r="1.4"/><circle cx="429.5" cy="503.1" r="2.3"/><circle cx="541.3" cy="422.0" r="1.6"/><circle cx="545.7" cy="443.5" r="1.4"/><circle cx="602.7" cy="416.2" r="2.6"/><circle cx="787.3" cy="334.0" r="2.5"/><circle cx="463.7" cy="806.2" r="2.0"/><circle cx="742.2" cy="573.9" r="2.2"/><circle cx="557.7" cy="679.6" r="1.8"/><circle cx="680.2" cy="544.4" r="1.7"/><circle cx="583.0" cy="500.5" r="2.5"/><circle cx="566.3" cy="646.9" r="2.3"/><circle cx="612.5" cy="311.1" r="1.3"/><circle cx="482.4" cy="306.0" r="1.2"/><circle cx="747.6" cy="564.8" r="2.6"/><circle cx="688.5" cy="265.1" r="1.4"/><circle cx="533.3" cy="293.3" r="2.2"/><circle cx="758.0" cy="751.3" r="1.7"/><circle cx="713.8" cy="553.5" r="1.4"/><circle cx="458.8" cy="748.1" r="2.6"/><circle cx="426.4" cy="279.0" r="1.8"/><circle cx="453.6" cy="706.6" r="1.3"/><circle cx="426.1" cy="836.0" r="1.4"/><circle cx="694.4" cy="612.0" r="1.5"/><circle cx="729.7" cy="332.3" r="2.3"/><circle cx="660.2" cy="272.6" r="2.0"/><circle cx="479.8" cy="294.9" r="2.5"/><circle cx="647.9" cy="531.0" r="2.6"/><circle cx="534.3" cy="726.5" r="1.8"/><circle cx="522.3" cy="743.8" r="2.0"/><circle cx="743.1" cy="548.1" r="1.3"/><circle cx="774.5" cy="378.2" r="1.7"/><circle cx="512.5" cy="397.7" r="2.6"/><circle cx="507.5" cy="421.9" r="2.1"/><circle cx="534.9" cy="414.9" r="2.3"/><circle cx="691.7" cy="408.5" r="1.9"/></g><rect x="383" y="220" width="407" height="654" fill="url(#stripe)"/></g>
<rect x="381.5" y="218.5" width="410" height="657" rx="18" fill="none" stroke="#c4c322" stroke-width="3"/>
<circle cx="742.4" cy="206.5" r="8.3" fill="#173a30" stroke="#f4f400" stroke-width="2"/>
<circle cx="766.5" cy="206.5" r="8.3" fill="#173a30" stroke="#f4f400" stroke-width="2"/>
<rect x="390" y="236" width="144" height="38" rx="19" fill="#173a30" stroke="#f4f400" stroke-width="2"/>
<rect x="403.4" y="248" width="17.4" height="15.7" fill="#ffff00"/><path d="M408.4 256.2 L410.5 258.5 L416.8 252" stroke="#3a4a30" stroke-width="0.9" fill="none"/>
<rect x="539.8" y="235.8" width="32.6" height="38.4" fill="none" stroke="#f4f400" stroke-width="1.5"/>
<path d="M545.4 238 L552.4 239.5 L552.4 272 L545.4 266Z" fill="#f6d98c"/><path d="M552.4 244 L555.8 246 L555.8 268 L552.4 272Z" fill="#a89070"/><path d="M552 240 L564.5 240.5 L564.5 259 L555.8 259 L555.8 246Z" fill="#f3d68a"/><path d="M555.8 259 L565.5 259 L566 271 L563 272 L555.8 268Z" fill="#eab480"/><rect x="551.3" y="260" width="1" height="12" fill="#404020"/>
<rect x="580.5" y="235.5" width="203" height="232" fill="none" stroke="#f4f400" stroke-width="1"/>
<rect x="392.5" y="285.5" width="181" height="28.5" fill="#ffff00" stroke="#a6a89a" stroke-width="1"/>
<path d="M562 298 L564.5 300.5 L567 298" stroke="#666" stroke-width="0.9" fill="none"/>
<rect x="392.5" y="320.5" width="181" height="147" fill="#1a3a30" stroke="#e8e800" stroke-width="1"/>
<rect x="390" y="479" width="180" height="38.5" rx="14" fill="#173a30" stroke="#f4f400" stroke-width="2"/>
<rect x="581" y="479" width="201" height="38.5" rx="14" fill="#173a30" stroke="#f4f400" stroke-width="2"/>
<circle cx="411.50" cy="548.5" r="12" fill="#eca4ec" stroke="#dcdcdc" stroke-width="1"/>
<circle cx="446.55" cy="548.5" r="12" fill="#4c0e78" stroke="#dcdcdc" stroke-width="1"/>
<circle cx="481.60" cy="548.5" r="12" fill="#ff2200" stroke="#dcdcdc" stroke-width="1"/>
<circle cx="516.65" cy="548.5" r="12" fill="#108a10" stroke="#dcdcdc" stroke-width="1"/>
<circle cx="551.70" cy="548.5" r="12" fill="#0070f0" stroke="#dcdcdc" stroke-width="1"/>
<circle cx="586.75" cy="548.5" r="12" fill="#ffff00" stroke="#dcdcdc" stroke-width="1"/>
<circle cx="621.80" cy="548.5" r="12" fill="#f0a010" stroke="#dcdcdc" stroke-width="1"/>
<circle cx="656.85" cy="548.5" r="12" fill="#000000" stroke="#dcdcdc" stroke-width="1"/>
<circle cx="691.90" cy="548.5" r="12" fill="#808482" stroke="#dcdcdc" stroke-width="1"/>
<circle cx="726.95" cy="548.5" r="12" fill="#d4d0d4" stroke="#dcdcdc" stroke-width="1"/>
<circle cx="762.00" cy="548.5" r="12" fill="#a8aca8" stroke="#dcdcdc" stroke-width="1"/>
<circle cx="411.50" cy="583.5" r="12" fill="#f5d0c8" stroke="#dcdcdc" stroke-width="1"/>
<circle cx="446.55" cy="583.5" r="12" fill="#00aef0" stroke="#dcdcdc" stroke-width="1"/>
<circle cx="481.60" cy="583.5" r="12" fill="#10d810" stroke="#dcdcdc" stroke-width="1"/>
<circle cx="516.65" cy="583.5" r="12" fill="#107a80" stroke="#dcdcdc" stroke-width="1"/>
<circle cx="551.70" cy="583.5" r="12" fill="#a02820" stroke="#dcdcdc" stroke-width="1"/>
<circle cx="586.75" cy="583.5" r="12" fill="#500e80" stroke="#dcdcdc" stroke-width="1"/>
<circle cx="621.80" cy="583.5" r="12" fill="#ffe400" stroke="#dcdcdc" stroke-width="1"/>
<circle cx="656.85" cy="583.5" r="12" fill="#e89858" stroke="#dcdcdc" stroke-width="1"/>
<circle cx="691.90" cy="583.5" r="12" fill="#201080" stroke="#dcdcdc" stroke-width="1"/>
<circle cx="726.95" cy="583.5" r="12" fill="#808020" stroke="#dcdcdc" stroke-width="1"/>
<circle cx="762.00" cy="583.5" r="12" fill="#801010" stroke="#dcdcdc" stroke-width="1"/>
<rect x="487" y="631.3" width="50" height="24.8" rx="12.4" fill="#ffff00"/><circle cx="499.3" cy="643.5" r="10" fill="#1a3a30"/>
<rect x="557" y="613" width="225" height="60" rx="14" fill="#0e8e1e" stroke="#f4f400" stroke-width="2"/>
<rect x="403.5" y="694.5" width="84.69999999999999" height="27" rx="13.5" fill="#ffff00" stroke="#c8c8b8" stroke-width="1"/>
<rect x="499.6" y="694.5" width="84.89999999999998" height="27" rx="13.5" fill="#ffff00" stroke="#c8c8b8" stroke-width="1"/>
<rect x="590.7" y="694.5" width="89.39999999999998" height="27" rx="13.5" fill="#ffff00" stroke="#c8c8b8" stroke-width="1"/>
<rect x="686.7" y="694.5" width="88.09999999999991" height="27" rx="13.5" fill="#ffff00" stroke="#c8c8b8" stroke-width="1"/>
<rect x="390.5" y="738" width="186" height="38.5" rx="16" fill="#109020" stroke="#f4f400" stroke-width="2"/>
<rect x="594.3" y="737.6" width="188" height="38.8" rx="17" fill="#ff2000" stroke="#f4f400" stroke-width="2"/>
<text x="389.07" y="211.90" font-family='"Liberation Sans"' font-weight="bold" font-style="normal" font-size="12.94" fill="#34c060" textLength="199.25" lengthAdjust="spacingAndGlyphs"  stroke="#34c060" stroke-width="0.45">MAXTOOL 3D VIEW - 085.8118.818</text>
<text x="737.88" y="211.50" font-family='"Liberation Sans"' font-weight="bold" font-style="normal" font-size="13.81" fill="#f4f400" textLength="9.40" lengthAdjust="spacingAndGlyphs"  stroke="#f4f400" stroke-width="0.45">?</text>
<text x="762.00" y="211.50" font-family='"Liberation Sans"' font-weight="bold" font-style="normal" font-size="13.81" fill="#f4f400" textLength="9.30" lengthAdjust="spacingAndGlyphs"  stroke="#f4f400" stroke-width="0.45">X</text>
<text x="425.28" y="260.80" font-family='"Liberation Sans"' font-weight="bold" font-style="normal" font-size="14.83" fill="#f4f400" textLength="96.97" lengthAdjust="spacingAndGlyphs"  stroke="#f4f400" stroke-width="0.45">LẤY MẶT BIỂN</text>
<text x="398.98" y="302.90" font-family='"Liberation Sans"' font-weight="bold" font-style="normal" font-size="14.53" fill="#6a1410" textLength="108.65" lengthAdjust="spacingAndGlyphs"  stroke="#6a1410" stroke-width="0.45">1.Biển hộp đứng</text>
<text x="398.58" y="339.10" font-family='"Liberation Sans"' font-weight="bold" font-style="normal" font-size="14.53" fill="#e6d85a" textLength="72.56" lengthAdjust="spacingAndGlyphs"  stroke="#e6d85a" stroke-width="0.45">2 cạnh bên</text>
<text x="398.57" y="362.10" font-family='"Liberation Sans"' font-weight="bold" font-style="normal" font-size="14.53" fill="#e6d85a" textLength="79.09" lengthAdjust="spacingAndGlyphs"  stroke="#e6d85a" stroke-width="0.45">2 mặt chính</text>
<text x="398.45" y="384.10" font-family='"Liberation Sans"' font-weight="bold" font-style="normal" font-size="14.53" fill="#e6d85a" textLength="34.39" lengthAdjust="spacingAndGlyphs"  stroke="#e6d85a" stroke-width="0.45">Chân</text>
<text x="399.00" y="407.10" font-family='"Liberation Sans"' font-weight="bold" font-style="normal" font-size="14.53" fill="#e6d85a" textLength="76.15" lengthAdjust="spacingAndGlyphs"  stroke="#e6d85a" stroke-width="0.45">Đỉnh &amp; Đáy</text>
<text x="418.66" y="504.20" font-family='"Liberation Sans"' font-weight="bold" font-style="normal" font-size="14.53" fill="#f4f400" textLength="123.19" lengthAdjust="spacingAndGlyphs"  stroke="#f4f400" stroke-width="0.45">Thêm mặt đã chọn</text>
<text x="620.16" y="504.20" font-family='"Liberation Sans"' font-weight="bold" font-style="normal" font-size="14.53" fill="#f4f400" textLength="121.15" lengthAdjust="spacingAndGlyphs"  stroke="#f4f400" stroke-width="0.45">Thêm mặt từ ổ đĩa</text>
<text x="399.04" y="648.40" font-family='"Liberation Sans"' font-weight="bold" font-style="normal" font-size="13.52" fill="#f4f400" textLength="83.00" lengthAdjust="spacingAndGlyphs"  stroke="#f4f400" stroke-width="0.45">Bật/Tắt đèn:</text>
<text x="570.34" y="654.20" font-family='"Liberation Sans"' font-weight="bold" font-style="normal" font-size="34.30" fill="#ffff00" textLength="198.39" lengthAdjust="spacingAndGlyphs"  stroke="#ffff00" stroke-width="0.45">&lt;&lt; VIEW &gt;&gt;</text>
<text x="423.80" y="713.20" font-family='"Liberation Sans"' font-weight="bold" font-style="normal" font-size="13.37" fill="#111" textLength="44.58" lengthAdjust="spacingAndGlyphs"  stroke="#111" stroke-width="0.45">Xoay 0°</text>
<text x="516.58" y="713.20" font-family='"Liberation Sans"' font-weight="bold" font-style="normal" font-size="13.37" fill="#1a3a30" textLength="51.43" lengthAdjust="spacingAndGlyphs"  stroke="#1a3a30" stroke-width="0.45">Xoay 90°</text>
<text x="606.51" y="713.20" font-family='"Liberation Sans"' font-weight="bold" font-style="normal" font-size="13.37" fill="#1a3a30" textLength="58.27" lengthAdjust="spacingAndGlyphs"  stroke="#1a3a30" stroke-width="0.45">Xoay 180°</text>
<text x="703.23" y="713.20" font-family='"Liberation Sans"' font-weight="bold" font-style="normal" font-size="13.37" fill="#1a3a30" textLength="55.52" lengthAdjust="spacingAndGlyphs"  stroke="#1a3a30" stroke-width="0.45">Xoay -90°</text>
<text x="427.47" y="762.80" font-family='"Liberation Sans"' font-weight="bold" font-style="normal" font-size="14.24" fill="#f4f400" textLength="112.85" lengthAdjust="spacingAndGlyphs"  stroke="#f4f400" stroke-width="0.45">Xóa phần đã chọn</text>
<text x="663.00" y="762.80" font-family='"Liberation Sans"' font-weight="bold" font-style="normal" font-size="14.24" fill="#f4f400" textLength="50.04" lengthAdjust="spacingAndGlyphs"  stroke="#f4f400" stroke-width="0.45">Xóa hết</text>
</svg>
</body></html>
